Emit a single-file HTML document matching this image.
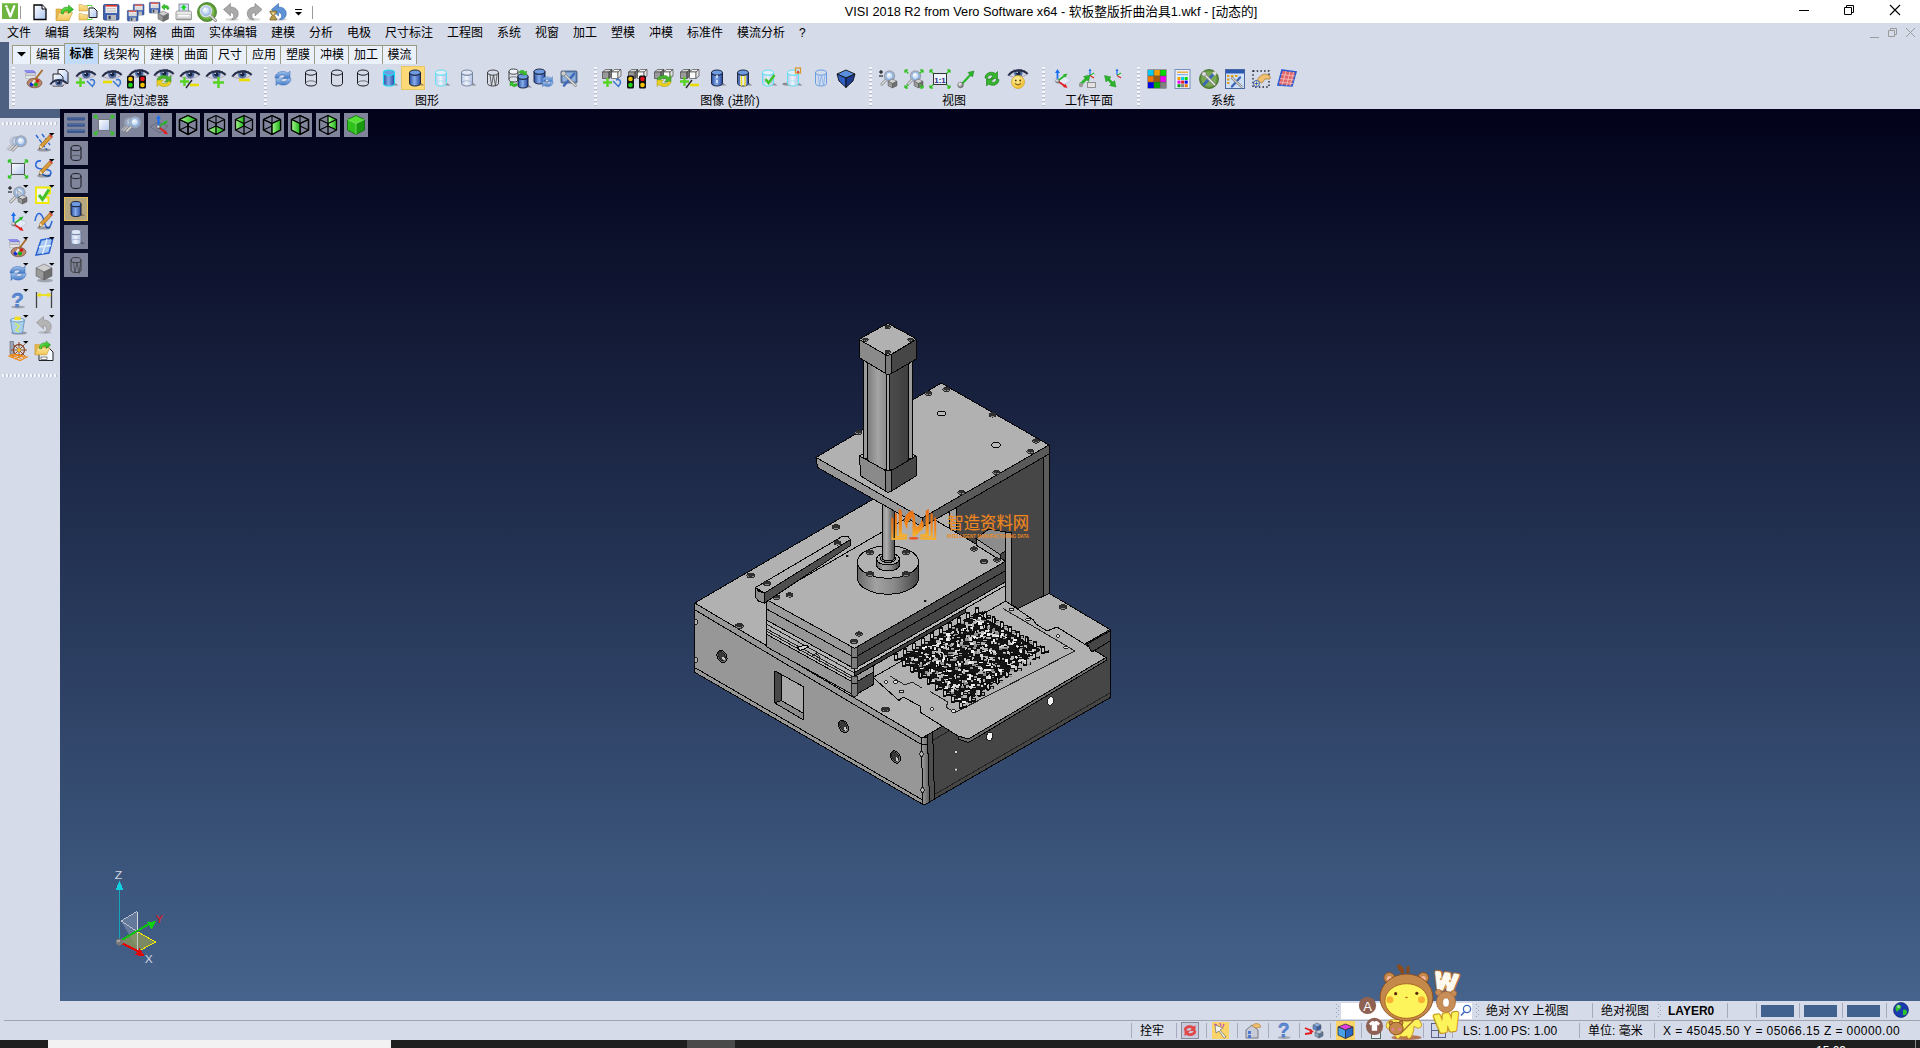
<!DOCTYPE html>
<html lang="zh-CN">
<head>
<meta charset="utf-8">
<title>VISI 2018 R2 from Vero Software x64</title>
<style>
*{box-sizing:border-box;margin:0;padding:0}
html,body{width:1920px;height:1048px;overflow:hidden;background:#d6dbe9;font-family:"Liberation Sans","Noto Sans CJK SC",sans-serif;font-size:12px;color:#000}
.abs{position:absolute}
#titlebar{position:absolute;left:0;top:0;width:1920px;height:23px;background:#fff}
#title{position:absolute;left:844px;top:3px;width:414px;height:17px;line-height:17px;font-size:12.75px;white-space:nowrap;color:#000;text-align:center}
#menubar{position:absolute;left:0;top:23px;width:1920px;height:20px;background:#d6dbe9}
#menubar span{position:absolute;top:1px;height:18px;line-height:18px;font-size:12px;white-space:nowrap}
#darkL1{position:absolute;left:0;top:42px;width:9px;height:76px;background:#4d6082}
#darkL2{position:absolute;left:0;top:109px;width:60px;height:9px;background:#4d6082}
#tabs{position:absolute;left:12px;top:44px;height:20px}
.tab{position:absolute;top:1px;height:19px;line-height:19px;font-size:12px;text-align:center;background:#eaf1fb;border:1px solid #9d9a84;border-bottom:none;border-right:none;white-space:nowrap}
.tab.sel{top:-1px;height:21px;line-height:20px;background:#c1dbf8;border-right:1px solid #9d9a84;font-weight:bold;z-index:2}
#toolbar{position:absolute;left:9px;top:64px;width:1911px;height:45px;background:#d6dbe9}
.glabel{position:absolute;top:94px;height:15px;line-height:15px;font-size:12px;text-align:center;white-space:nowrap;transform:translateX(-50%)}
.grip{position:absolute;top:67px;width:3px;height:39px;background:repeating-linear-gradient(to bottom,#f4f6fb 0 2px,#b9bfd0 2px 3px,transparent 3px 4px)}
#viewport{position:absolute;left:60px;top:109px;width:1860px;height:892px;background:linear-gradient(to bottom,#02021a 0%,#45638c 100%)}
#leftbar{position:absolute;left:0;top:118px;width:60px;height:883px;background:#d6dbe9}
.hgrip{position:absolute;left:2px;width:56px;height:3px;background:repeating-linear-gradient(to right,#f4f6fb 0 2px,#b9bfd0 2px 3px,transparent 3px 4px)}
#status{position:absolute;left:0;top:1001px;width:1920px;height:39px;background:#d6dbe9}
#status span{position:absolute;white-space:nowrap;font-size:12px;height:16px;line-height:16px}
#taskbar{position:absolute;left:0;top:1040px;width:1920px;height:8px;background:#1f1f1f}
.vbtn{position:absolute;width:24px;height:24px;background:#80859c}
.vbtn.sel{background:#b8a880;border:1px solid #e8c25a}
svg{position:absolute;overflow:visible}
</style>
</head>
<body>
<div id="titlebar">
<div id="title">VISI 2018 R2 from Vero Software x64 - 软板整版折曲治具1.wkf - [动态的]</div>
</div>
<div id="menubar">
<span style="left:7px">文件</span><span style="left:45px">编辑</span><span style="left:83px">线架构</span><span style="left:133px">网格</span><span style="left:171px">曲面</span><span style="left:209px">实体编辑</span><span style="left:271px">建模</span><span style="left:309px">分析</span><span style="left:347px">电极</span><span style="left:385px">尺寸标注</span><span style="left:447px">工程图</span><span style="left:497px">系统</span><span style="left:535px">视窗</span><span style="left:573px">加工</span><span style="left:611px">塑模</span><span style="left:649px">冲模</span><span style="left:687px">标准件</span><span style="left:737px">模流分析</span><span style="left:799px">?</span>
</div>
<div id="toolbar"></div>
<div id="darkL1"></div><div id="darkL2"></div>
<div id="tabs">
<div class="tab" style="left:0;width:19px"></div>
<div class="tab" style="left:18px;width:35px">编辑</div>
<div class="tab sel" style="left:52px;width:35px">标准</div>
<div class="tab" style="left:86px;width:47px;border-left:none">线架构</div>
<div class="tab" style="left:132px;width:35px">建模</div>
<div class="tab" style="left:166px;width:35px">曲面</div>
<div class="tab" style="left:200px;width:35px">尺寸</div>
<div class="tab" style="left:234px;width:35px">应用</div>
<div class="tab" style="left:268px;width:35px">塑膜</div>
<div class="tab" style="left:302px;width:35px">冲模</div>
<div class="tab" style="left:336px;width:35px">加工</div>
<div class="tab" style="left:370px;width:35px;border-right:1px solid #9d9a84">模流</div>
</div>
<div class="glabel" style="left:137px">属性/过滤器</div>
<div class="glabel" style="left:427px">图形</div>
<div class="glabel" style="left:730px">图像 (进阶)</div>
<div class="glabel" style="left:954px">视图</div>
<div class="glabel" style="left:1089px">工作平面</div>
<div class="glabel" style="left:1223px">系统</div>
<div class="grip" style="left:12px"></div>
<div class="grip" style="left:264px"></div>
<div class="grip" style="left:594px"></div>
<div class="grip" style="left:869px"></div>
<div class="grip" style="left:1042px"></div>
<div class="grip" style="left:1137px"></div>
<div id="viewport"></div>
<div id="leftbar"><div class="hgrip" style="top:4px"></div><div class="hgrip" style="top:256px"></div></div>
<div id="status">
<div class="abs" style="left:4px;top:19px;width:1916px;height:1px;background:#a0a4b0"></div>
<div class="abs" style="left:1341px;top:2px;width:131px;height:16px;background:#fff"></div>
<span style="left:1486px;top:2px">绝对 XY 上视图</span>
<span style="left:1601px;top:2px">绝对视图</span>
<span style="left:1668px;top:2px;font-weight:bold">LAYER0</span>
<div class="abs" style="left:1761px;top:4px;width:33px;height:12px;background:#41618e"></div>
<div class="abs" style="left:1804px;top:4px;width:33px;height:12px;background:#41618e"></div>
<div class="abs" style="left:1847px;top:4px;width:33px;height:12px;background:#41618e"></div>
<span style="left:1140px;top:22px">拴牢</span>
<span style="left:1463px;top:22px">LS: 1.00 PS: 1.00</span>
<span style="left:1588px;top:22px">单位: 毫米</span>
<span style="left:1663px;top:22px;letter-spacing:.43px">X = 45045.50 Y = 05066.15 Z = 00000.00</span>
</div>
<div id="taskbar">
<div class="abs" style="left:48px;top:0;width:343px;height:8px;background:#f2f2f2"></div>
<div class="abs" style="left:687px;top:0;width:48px;height:8px;background:#4a4a4a"></div>
<div class="abs" style="left:1915px;top:0;width:1px;height:8px;background:#8a8a8a"></div>
</div>
<svg width="1920" height="1048" style="left:0;top:0" viewBox="0 0 1920 1048" shape-rendering="crispEdges">
<defs>
<linearGradient id="mcyl" x1="0" y1="0" x2="1" y2="0"><stop offset="0" stop-color="#7d7d7d"/><stop offset=".25" stop-color="#a4a4a4"/><stop offset=".5" stop-color="#8a8a8a"/><stop offset=".55" stop-color="#4c4c4c"/><stop offset="1" stop-color="#3e3e3e"/></linearGradient>
<linearGradient id="mrod" x1="0" y1="0" x2="1" y2="0"><stop offset="0" stop-color="#8a8a8a"/><stop offset=".35" stop-color="#b0b0b0"/><stop offset="1" stop-color="#4a4a4a"/></linearGradient>
<linearGradient id="mdisc" x1="0" y1="0" x2="1" y2="0"><stop offset="0" stop-color="#6a6a6a"/><stop offset=".3" stop-color="#a2a2a2"/><stop offset=".6" stop-color="#8a8a8a"/><stop offset="1" stop-color="#444"/></linearGradient>
<linearGradient id="mchf" x1="0" y1="0" x2="1" y2="0"><stop offset="0" stop-color="#a2a2a2"/><stop offset="1" stop-color="#5e5e5e"/></linearGradient>
</defs>
<polygon points="694.7,603.0 882.0,494.0 1110.0,629.5 922.0,738.0" fill="#b1b1b1" stroke="#050505" stroke-width="1" stroke-linejoin="round"/>
<polygon points="694.7,603.0 922.0,738.0 924.0,805.0 694.7,672.3" fill="#979797" stroke="#050505" stroke-width="1" stroke-linejoin="round"/>
<polyline points="695.0,610.0 921.5,744.5" fill="none" stroke="#050505" stroke-width="1"/>
<polyline points="695.5,668.0 923.5,800.5" fill="none" stroke="#050505" stroke-width="1"/>
<polygon points="922.0,738.0 1110.0,629.5 1110.0,697.7 924.0,805.0" fill="#464646" stroke="#050505" stroke-width="1" stroke-linejoin="round"/>
<polyline points="927.5,743.5 1110.0,637.0" fill="none" stroke="#222" stroke-width="1"/>
<polyline points="934.5,794.5 1110.0,693.0" fill="none" stroke="#222" stroke-width="1"/>
<polygon points="927.5,735.0 932.7,732.0 934.5,799.0 929.5,802.0" fill="#4e4e4e" stroke="#050505" stroke-width="1" stroke-linejoin="round"/>
<polygon points="921.2,737.5 927.5,737.5 929.5,802.0 924.0,805.0 923.0,804.0" fill="url(#mchf)" stroke="#050505" stroke-width="1" stroke-linejoin="round"/>
<polyline points="921.2,744.5 927.5,744.5" fill="none" stroke="#050505" stroke-width="1"/>
<polygon points="774.9,671.0 803.0,686.4 803.0,719.6 774.9,703.0" fill="#a9a9a9" stroke="#050505" stroke-width="1" stroke-linejoin="round"/>
<polygon points="774.9,671.0 781.0,674.5 781.0,700.5 774.9,703.0" fill="#484848" stroke="#050505" stroke-width="1" stroke-linejoin="round"/>
<polygon points="781.0,700.5 803.0,713.0 803.0,719.6 774.9,703.0" fill="#8c8c8c" stroke="#050505" stroke-width="1" stroke-linejoin="round"/>
<ellipse cx="722.0" cy="656.5" rx="4.6" ry="6.6" fill="#6a6a6a" stroke="#050505" stroke-width="1" transform="rotate(-28 722 656.5)"/>
<ellipse cx="721.7" cy="656.0" rx="3" ry="5" fill="#3a3a3a" stroke="#222" stroke-width="1" transform="rotate(-28 721.7 656.0)"/>
<ellipse cx="723.6" cy="658.7" rx="1.3" ry="2" fill="#c8c8c8" stroke="none" stroke-width="0" transform="rotate(-28 723.6 658.7)"/>
<ellipse cx="843.5" cy="726.5" rx="4.6" ry="6.6" fill="#6a6a6a" stroke="#050505" stroke-width="1" transform="rotate(-28 843.5 726.5)"/>
<ellipse cx="843.2" cy="726.0" rx="3" ry="5" fill="#3a3a3a" stroke="#222" stroke-width="1" transform="rotate(-28 843.2 726.0)"/>
<ellipse cx="845.1" cy="728.7" rx="1.3" ry="2" fill="#c8c8c8" stroke="none" stroke-width="0" transform="rotate(-28 845.1 728.7)"/>
<ellipse cx="895.5" cy="757.0" rx="4.6" ry="6.6" fill="#6a6a6a" stroke="#050505" stroke-width="1" transform="rotate(-28 895.5 757)"/>
<ellipse cx="895.2" cy="756.5" rx="3" ry="5" fill="#3a3a3a" stroke="#222" stroke-width="1" transform="rotate(-28 895.2 756.5)"/>
<ellipse cx="897.1" cy="759.2" rx="1.3" ry="2" fill="#c8c8c8" stroke="none" stroke-width="0" transform="rotate(-28 897.1 759.2)"/>
<ellipse cx="989.6" cy="736.4" rx="3.2" ry="4.2" fill="#f2f2f2" stroke="#222" stroke-width="1" transform="rotate(20 989.6 736.4)"/>
<ellipse cx="1050.5" cy="701.0" rx="3.2" ry="4.2" fill="#f2f2f2" stroke="#222" stroke-width="1" transform="rotate(20 1050.5 701)"/>
<ellipse cx="956.0" cy="752.0" rx="1.2" ry="1.5" fill="#ddd" stroke="#222" stroke-width="0.4"/>
<ellipse cx="956.0" cy="769.5" rx="1.2" ry="1.5" fill="#ddd" stroke="#222" stroke-width="0.4"/>
<ellipse cx="696.0" cy="622.0" rx="1.6" ry="2.6" fill="#b4b4b4" stroke="#222" stroke-width="1"/>
<ellipse cx="696.0" cy="660.0" rx="1.6" ry="2.6" fill="#b4b4b4" stroke="#222" stroke-width="1"/>
<ellipse cx="921.5" cy="754.0" rx="1.6" ry="2.6" fill="#b4b4b4" stroke="#222" stroke-width="1"/>
<ellipse cx="922.5" cy="790.0" rx="1.6" ry="2.6" fill="#b4b4b4" stroke="#222" stroke-width="1"/>
<ellipse cx="739.3" cy="626.0" rx="3.9000000000000004" ry="2.3400000000000003" fill="#8a8a8a" stroke="#2a2a2a" stroke-width="1"/>
<ellipse cx="739.3" cy="625.5" rx="3.32" ry="1.64" fill="#303030"/>
<ellipse cx="750.8" cy="575.5" rx="3.9000000000000004" ry="2.3400000000000003" fill="#8a8a8a" stroke="#2a2a2a" stroke-width="1"/>
<ellipse cx="750.8" cy="575.0" rx="3.32" ry="1.64" fill="#303030"/>
<ellipse cx="885.5" cy="709.5" rx="3.9000000000000004" ry="2.3400000000000003" fill="#8a8a8a" stroke="#2a2a2a" stroke-width="1"/>
<ellipse cx="885.5" cy="709.0" rx="3.32" ry="1.64" fill="#303030"/>
<ellipse cx="1063.0" cy="607.0" rx="3.9000000000000004" ry="2.3400000000000003" fill="#8a8a8a" stroke="#2a2a2a" stroke-width="1"/>
<ellipse cx="1063.0" cy="606.5" rx="3.32" ry="1.64" fill="#303030"/>
<ellipse cx="836.0" cy="527.0" rx="3.9000000000000004" ry="2.3400000000000003" fill="#8a8a8a" stroke="#2a2a2a" stroke-width="1"/>
<ellipse cx="836.0" cy="526.5" rx="3.32" ry="1.64" fill="#303030"/>
<polygon points="925.0,510.0 957.0,506.0 957.0,535.0 925.0,520.0" fill="#b1b1b1" stroke="none" stroke-width="0" stroke-linejoin="round"/>
<polygon points="956.0,507.0 1043.5,457.0 1043.5,596.0 1018.0,608.5 1011.5,604.5 1011.5,532.0 1005.6,532.0 1005.6,563.0 956.0,534.0" fill="#464646" stroke="#050505" stroke-width="1" stroke-linejoin="round"/>
<polygon points="949.0,511.0 956.0,507.0 956.0,532.0 949.0,528.0" fill="#a0a0a0" stroke="#050505" stroke-width="1" stroke-linejoin="round"/>
<polygon points="1043.5,457.0 1049.0,454.0 1049.0,593.5 1043.5,596.0" fill="#5c5c5c" stroke="#050505" stroke-width="1" stroke-linejoin="round"/>
<polygon points="1005.6,532.0 1011.5,532.0 1011.5,604.5 1005.6,602.0" fill="#9c9c9c" stroke="#050505" stroke-width="1" stroke-linejoin="round"/>
<polygon points="873.0,677.5 1005.6,601.0 1033.5,620.0 1036.0,624.0 1047.0,631.0 1057.0,627.0 1106.0,657.5 968.5,739.0 958.0,736.0 920.0,712.0 921.0,706.5 903.0,697.0 899.0,700.5" fill="#b1b1b1" stroke="#050505" stroke-width="1" stroke-linejoin="round"/>
<polygon points="968.5,739.0 1106.0,657.5 1106.0,660.5 968.5,742.5 958.0,739.0 958.0,736.0" fill="#6e6e6e" stroke="#050505" stroke-width="1" stroke-linejoin="round"/>
<polyline points="955.0,712.5 1075.0,651.0 1003.0,608.5" fill="none" stroke="#222" stroke-width="1"/>
<polyline points="955.0,712.5 946.0,707.0 948.0,702.0 930.0,691.5" fill="none" stroke="#222" stroke-width="1"/>
<polyline points="890.0,676.0 905.0,685.0 912.0,682.0 922.0,688.0" fill="none" stroke="#222" stroke-width="1"/>
<ellipse cx="886.0" cy="682.0" rx="2.1" ry="1.3" fill="#e4e4e4" stroke="#222" stroke-width="1"/>
<ellipse cx="901.5" cy="691.5" rx="2.1" ry="1.3" fill="#e4e4e4" stroke="#222" stroke-width="1"/>
<ellipse cx="932.0" cy="709.0" rx="2.1" ry="1.3" fill="#e4e4e4" stroke="#222" stroke-width="1"/>
<ellipse cx="953.5" cy="711.0" rx="2.1" ry="1.3" fill="#e4e4e4" stroke="#222" stroke-width="1"/>
<ellipse cx="1011.5" cy="609.5" rx="2.1" ry="1.3" fill="#e4e4e4" stroke="#222" stroke-width="1"/>
<ellipse cx="1028.0" cy="619.5" rx="2.1" ry="1.3" fill="#e4e4e4" stroke="#222" stroke-width="1"/>
<ellipse cx="1058.0" cy="636.0" rx="2.1" ry="1.3" fill="#e4e4e4" stroke="#222" stroke-width="1"/>
<ellipse cx="1066.0" cy="647.5" rx="2.1" ry="1.3" fill="#e4e4e4" stroke="#222" stroke-width="1"/>
<ellipse cx="895.5" cy="682.0" rx="2.1" ry="1.3" fill="#e4e4e4" stroke="#222" stroke-width="1"/>
<polygon points="1087.0,644.0 1110.0,631.0 1110.0,641.0 1092.0,652.0" fill="#464646" stroke="#050505" stroke-width="1" stroke-linejoin="round"/>
<polygon points="766.0,634.0 854.5,683.0 854.5,695.5 766.0,646.5" fill="#979797" stroke="#050505" stroke-width="1" stroke-linejoin="round"/>
<polygon points="854.5,683.0 873.0,672.3 873.0,684.8 854.5,695.5" fill="#464646" stroke="#050505" stroke-width="1" stroke-linejoin="round"/>
<polygon points="766.0,619.8 854.5,668.8 854.5,683.0 766.0,634.0" fill="#b4b4b4" stroke="#050505" stroke-width="1" stroke-linejoin="round"/>
<polyline points="766.0,624.0 854.5,673.0" fill="none" stroke="#222" stroke-width="1"/>
<polyline points="766.0,628.5 854.5,677.5" fill="none" stroke="#222" stroke-width="1"/>
<polyline points="766.0,631.0 854.5,680.0" fill="none" stroke="#222" stroke-width="1"/>
<polygon points="854.5,668.8 1005.6,581.8 1005.6,585.5 854.5,672.5" fill="#b8b8b8" stroke="#050505" stroke-width="1" stroke-linejoin="round"/>
<polygon points="854.5,672.5 965.0,608.9 965.0,612.9 854.5,676.5" fill="#3c3c3c" stroke="#050505" stroke-width="1" stroke-linejoin="round"/>
<polygon points="854.5,676.5 873.0,665.8 873.0,672.3 854.5,683.0" fill="#9a9a9a" stroke="#050505" stroke-width="1" stroke-linejoin="round"/>
<polygon points="797.0,647.5 806.0,645.0 809.0,647.0 800.0,650.5" fill="#cfcfcf" stroke="#050505" stroke-width="1" stroke-linejoin="round"/>
<polyline points="812.0,656.0 816.0,653.5 820.0,657.0 819.0,662.0" fill="none" stroke="#222" stroke-width="1"/>
<polygon points="766.0,608.6 854.5,657.6 854.5,668.8 766.0,619.8" fill="#979797" stroke="#050505" stroke-width="1" stroke-linejoin="round"/>
<polygon points="854.5,657.6 1005.6,570.6 1005.6,581.8 854.5,668.8" fill="#464646" stroke="#050505" stroke-width="1" stroke-linejoin="round"/>
<polygon points="766.0,599.3 854.5,648.3 854.5,657.6 766.0,608.6" fill="#9b9b9b" stroke="#050505" stroke-width="1" stroke-linejoin="round"/>
<polygon points="854.5,648.3 1005.6,561.3 1005.6,570.6 854.5,657.6" fill="#4a4a4a" stroke="#050505" stroke-width="1" stroke-linejoin="round"/>
<polygon points="851.7,647.3 857.3,647.3 857.3,668.8 851.7,668.8" fill="#7c7c7c" stroke="#222" stroke-width="1" stroke-linejoin="round"/>
<polygon points="851.7,676.8 857.3,676.8 857.3,695.5 854.5,697.0 851.7,695.5" fill="#7c7c7c" stroke="#222" stroke-width="1" stroke-linejoin="round"/>
<polyline points="851.7,657.6 857.3,657.6" fill="none" stroke="#050505" stroke-width="1"/>
<polyline points="851.7,683.0 857.3,683.0" fill="none" stroke="#050505" stroke-width="1"/>
<polygon points="766.0,599.3 915.0,513.0 935.0,520.0 1005.6,561.3 854.5,648.3" fill="#b1b1b1" stroke="#050505" stroke-width="1" stroke-linejoin="round"/>
<polygon points="976.0,538.5 1000.0,554.5 1005.5,551.0 1005.5,532.0 989.0,529.0" fill="#8c8c8c" stroke="#050505" stroke-width="1" stroke-linejoin="round"/>
<polygon points="976.0,538.5 1000.0,554.5 1000.0,560.0 976.0,545.0" fill="#a2a2a2" stroke="#050505" stroke-width="1" stroke-linejoin="round"/>
<ellipse cx="789.6" cy="595.0" rx="3.5100000000000002" ry="2.106" fill="#8a8a8a" stroke="#2a2a2a" stroke-width="1"/>
<ellipse cx="789.6" cy="594.6" rx="2.98" ry="1.47" fill="#303030"/>
<ellipse cx="776.5" cy="597.3" rx="3.5100000000000002" ry="2.106" fill="#8a8a8a" stroke="#2a2a2a" stroke-width="1"/>
<ellipse cx="776.5" cy="596.9" rx="2.98" ry="1.47" fill="#303030"/>
<ellipse cx="859.0" cy="634.0" rx="3.5100000000000002" ry="2.106" fill="#8a8a8a" stroke="#2a2a2a" stroke-width="1"/>
<ellipse cx="859.0" cy="633.6" rx="2.98" ry="1.47" fill="#303030"/>
<ellipse cx="854.0" cy="641.5" rx="3.5100000000000002" ry="2.106" fill="#8a8a8a" stroke="#2a2a2a" stroke-width="1"/>
<ellipse cx="854.0" cy="641.1" rx="2.98" ry="1.47" fill="#303030"/>
<ellipse cx="974.0" cy="549.0" rx="3.5100000000000002" ry="2.106" fill="#8a8a8a" stroke="#2a2a2a" stroke-width="1"/>
<ellipse cx="974.0" cy="548.6" rx="2.98" ry="1.47" fill="#303030"/>
<ellipse cx="984.0" cy="561.5" rx="3.5100000000000002" ry="2.106" fill="#8a8a8a" stroke="#2a2a2a" stroke-width="1"/>
<ellipse cx="984.0" cy="561.1" rx="2.98" ry="1.47" fill="#303030"/>
<ellipse cx="997.0" cy="560.0" rx="3.5100000000000002" ry="2.106" fill="#8a8a8a" stroke="#2a2a2a" stroke-width="1"/>
<ellipse cx="997.0" cy="559.6" rx="2.98" ry="1.47" fill="#303030"/>
<ellipse cx="847.5" cy="556.0" rx="1.2" ry="1" fill="#111" stroke="#111" stroke-width="0.3"/>
<ellipse cx="925.5" cy="601.0" rx="1.2" ry="1" fill="#111" stroke="#111" stroke-width="0.3"/>
<polygon points="899.6,658.5 975.4,612.9 1041.0,649.8 963.5,704.4" fill="#141414"/><rect x="894.0" y="652.5" width="4" height="8.5" rx="1.500" fill="#0c0c0c"/><rect x="895.1" y="654.5" width="1.800" height="4.5" rx=".8" fill="#c8c8c8"/><rect x="897.6" y="656.5" width="4.200" height="3.200" fill="#0c0c0c"/><rect x="898.3" y="657.2" width="2.800" height="1.100" fill="#b0b0b0"/><rect x="898.3" y="658.6" width="2.800" height=".8" fill="#8a8a8a"/><rect x="902.1" y="658.5" width="4" height="8.5" rx="1.500" fill="#0c0c0c"/><rect x="903.2" y="660.5" width="1.800" height="4.5" rx=".8" fill="#c8c8c8"/><rect x="905.7" y="662.5" width="4.200" height="3.200" fill="#0c0c0c"/><rect x="906.4" y="663.2" width="2.800" height="1.100" fill="#b0b0b0"/><rect x="906.4" y="664.6" width="2.800" height=".8" fill="#8a8a8a"/><rect x="910.2" y="664.5" width="4" height="8.5" rx="1.500" fill="#0c0c0c"/><rect x="911.4" y="666.5" width="1.800" height="4.5" rx=".8" fill="#c8c8c8"/><rect x="913.9" y="668.5" width="4.200" height="3.200" fill="#0c0c0c"/><rect x="914.5" y="669.2" width="2.800" height="1.100" fill="#b0b0b0"/><rect x="914.5" y="670.6" width="2.800" height=".8" fill="#8a8a8a"/><rect x="918.4" y="670.5" width="4" height="8.5" rx="1.500" fill="#0c0c0c"/><rect x="919.5" y="672.5" width="1.800" height="4.5" rx=".8" fill="#c8c8c8"/><rect x="922.0" y="674.5" width="4.200" height="3.200" fill="#0c0c0c"/><rect x="922.7" y="675.2" width="2.800" height="1.100" fill="#b0b0b0"/><rect x="922.7" y="676.6" width="2.800" height=".8" fill="#8a8a8a"/><rect x="926.5" y="676.5" width="4" height="8.5" rx="1.500" fill="#0c0c0c"/><rect x="927.6" y="678.5" width="1.800" height="4.5" rx=".8" fill="#c8c8c8"/><rect x="930.1" y="680.5" width="4.200" height="3.200" fill="#0c0c0c"/><rect x="930.8" y="681.2" width="2.800" height="1.100" fill="#b0b0b0"/><rect x="930.8" y="682.6" width="2.800" height=".8" fill="#8a8a8a"/><rect x="934.6" y="682.5" width="4" height="8.5" rx="1.500" fill="#0c0c0c"/><rect x="935.7" y="684.5" width="1.800" height="4.5" rx=".8" fill="#c8c8c8"/><rect x="938.2" y="686.5" width="4.200" height="3.200" fill="#0c0c0c"/><rect x="938.9" y="687.2" width="2.800" height="1.100" fill="#b0b0b0"/><rect x="938.9" y="688.6" width="2.800" height=".8" fill="#8a8a8a"/><rect x="942.8" y="688.5" width="4" height="8.5" rx="1.500" fill="#0c0c0c"/><rect x="943.9" y="690.5" width="1.800" height="4.5" rx=".8" fill="#c8c8c8"/><rect x="946.4" y="692.5" width="4.200" height="3.200" fill="#0c0c0c"/><rect x="947.0" y="693.2" width="2.800" height="1.100" fill="#b0b0b0"/><rect x="947.0" y="694.6" width="2.800" height=".8" fill="#8a8a8a"/><rect x="950.9" y="694.5" width="4" height="8.5" rx="1.500" fill="#0c0c0c"/><rect x="952.0" y="696.5" width="1.800" height="4.5" rx=".8" fill="#c8c8c8"/><rect x="954.5" y="698.5" width="4.200" height="3.200" fill="#0c0c0c"/><rect x="955.2" y="699.2" width="2.800" height="1.100" fill="#b0b0b0"/><rect x="955.2" y="700.6" width="2.800" height=".8" fill="#8a8a8a"/><rect x="959.0" y="700.5" width="4" height="8.5" rx="1.500" fill="#0c0c0c"/><rect x="960.1" y="702.5" width="1.800" height="4.5" rx=".8" fill="#c8c8c8"/><rect x="962.6" y="704.5" width="4.200" height="3.200" fill="#0c0c0c"/><rect x="963.3" y="705.2" width="2.800" height="1.100" fill="#b0b0b0"/><rect x="963.3" y="706.6" width="2.800" height=".8" fill="#8a8a8a"/><rect x="903.0" y="647.4" width="4" height="8.5" rx="1.500" fill="#0c0c0c"/><rect x="904.1" y="649.4" width="1.800" height="4.5" rx=".8" fill="#c8c8c8"/><rect x="906.6" y="651.4" width="4.200" height="3.200" fill="#0c0c0c"/><rect x="907.3" y="652.1" width="2.800" height="1.100" fill="#b0b0b0"/><rect x="907.3" y="653.5" width="2.800" height=".8" fill="#8a8a8a"/><rect x="911.1" y="654.8" width="4" height="7" rx="1.500" fill="#0c0c0c"/><rect x="912.2" y="656.8" width="1.800" height="3.0" rx=".8" fill="#c8c8c8"/><rect x="914.7" y="657.3" width="4.200" height="3.200" fill="#0c0c0c"/><rect x="915.4" y="658.0" width="2.800" height="1.100" fill="#b0b0b0"/><rect x="915.4" y="659.4" width="2.800" height=".8" fill="#8a8a8a"/><rect x="919.3" y="660.6" width="4" height="7" rx="1.500" fill="#0c0c0c"/><rect x="920.4" y="662.6" width="1.800" height="3.0" rx=".8" fill="#c8c8c8"/><rect x="922.9" y="663.1" width="4.200" height="3.200" fill="#0c0c0c"/><rect x="923.6" y="663.8" width="2.800" height="1.100" fill="#b0b0b0"/><rect x="923.6" y="665.2" width="2.800" height=".8" fill="#8a8a8a"/><rect x="927.4" y="666.5" width="4" height="7" rx="1.500" fill="#0c0c0c"/><rect x="928.5" y="668.5" width="1.800" height="3.0" rx=".8" fill="#c8c8c8"/><rect x="931.0" y="669.0" width="4.200" height="3.200" fill="#0c0c0c"/><rect x="931.7" y="669.7" width="2.800" height="1.100" fill="#b0b0b0"/><rect x="931.7" y="671.1" width="2.800" height=".8" fill="#8a8a8a"/><rect x="935.6" y="672.4" width="4" height="7" rx="1.500" fill="#0c0c0c"/><rect x="936.7" y="674.4" width="1.800" height="3.0" rx=".8" fill="#c8c8c8"/><rect x="939.2" y="674.9" width="4.200" height="3.200" fill="#0c0c0c"/><rect x="939.9" y="675.6" width="2.800" height="1.100" fill="#b0b0b0"/><rect x="939.9" y="677.0" width="2.800" height=".8" fill="#8a8a8a"/><rect x="943.7" y="678.3" width="4" height="7" rx="1.500" fill="#0c0c0c"/><rect x="944.8" y="680.3" width="1.800" height="3.0" rx=".8" fill="#c8c8c8"/><rect x="947.3" y="680.8" width="4.200" height="3.200" fill="#0c0c0c"/><rect x="948.0" y="681.5" width="2.800" height="1.100" fill="#b0b0b0"/><rect x="948.0" y="682.9" width="2.800" height=".8" fill="#8a8a8a"/><rect x="951.8" y="684.1" width="4" height="7" rx="1.500" fill="#0c0c0c"/><rect x="952.9" y="686.1" width="1.800" height="3.0" rx=".8" fill="#c8c8c8"/><rect x="955.4" y="686.6" width="4.200" height="3.200" fill="#0c0c0c"/><rect x="956.1" y="687.3" width="2.800" height="1.100" fill="#b0b0b0"/><rect x="956.1" y="688.7" width="2.800" height=".8" fill="#8a8a8a"/><rect x="960.0" y="690.0" width="4" height="7" rx="1.500" fill="#0c0c0c"/><rect x="961.1" y="692.0" width="1.800" height="3.0" rx=".8" fill="#c8c8c8"/><rect x="963.6" y="692.5" width="4.200" height="3.200" fill="#0c0c0c"/><rect x="964.3" y="693.2" width="2.800" height="1.100" fill="#b0b0b0"/><rect x="964.3" y="694.6" width="2.800" height=".8" fill="#8a8a8a"/><rect x="968.1" y="694.4" width="4" height="8.5" rx="1.500" fill="#0c0c0c"/><rect x="969.2" y="696.4" width="1.800" height="4.5" rx=".8" fill="#c8c8c8"/><rect x="971.7" y="698.4" width="4.200" height="3.200" fill="#0c0c0c"/><rect x="972.4" y="699.1" width="2.800" height="1.100" fill="#b0b0b0"/><rect x="972.4" y="700.5" width="2.800" height=".8" fill="#8a8a8a"/><rect x="912.0" y="642.3" width="4" height="8.5" rx="1.500" fill="#0c0c0c"/><rect x="913.1" y="644.3" width="1.800" height="4.5" rx=".8" fill="#c8c8c8"/><rect x="915.6" y="646.3" width="4.200" height="3.200" fill="#0c0c0c"/><rect x="916.3" y="647.0" width="2.800" height="1.100" fill="#b0b0b0"/><rect x="916.3" y="648.4" width="2.800" height=".8" fill="#8a8a8a"/><rect x="920.2" y="649.5" width="4" height="7" rx="1.500" fill="#0c0c0c"/><rect x="921.3" y="651.5" width="1.800" height="3.0" rx=".8" fill="#c8c8c8"/><rect x="923.8" y="652.0" width="4.200" height="3.200" fill="#0c0c0c"/><rect x="924.5" y="652.7" width="2.800" height="1.100" fill="#b0b0b0"/><rect x="924.5" y="654.1" width="2.800" height=".8" fill="#8a8a8a"/><rect x="928.3" y="655.3" width="4" height="7" rx="1.500" fill="#0c0c0c"/><rect x="929.4" y="657.3" width="1.800" height="3.0" rx=".8" fill="#c8c8c8"/><rect x="931.9" y="657.8" width="4.200" height="3.200" fill="#0c0c0c"/><rect x="932.6" y="658.5" width="2.800" height="1.100" fill="#b0b0b0"/><rect x="932.6" y="659.9" width="2.800" height=".8" fill="#8a8a8a"/><rect x="936.5" y="661.0" width="4" height="7" rx="1.500" fill="#0c0c0c"/><rect x="937.6" y="663.0" width="1.800" height="3.0" rx=".8" fill="#c8c8c8"/><rect x="940.1" y="663.5" width="4.200" height="3.200" fill="#0c0c0c"/><rect x="940.8" y="664.2" width="2.800" height="1.100" fill="#b0b0b0"/><rect x="940.8" y="665.6" width="2.800" height=".8" fill="#8a8a8a"/><rect x="944.6" y="666.8" width="4" height="7" rx="1.500" fill="#0c0c0c"/><rect x="945.7" y="668.8" width="1.800" height="3.0" rx=".8" fill="#c8c8c8"/><rect x="948.2" y="669.3" width="4.200" height="3.200" fill="#0c0c0c"/><rect x="948.9" y="670.0" width="2.800" height="1.100" fill="#b0b0b0"/><rect x="948.9" y="671.4" width="2.800" height=".8" fill="#8a8a8a"/><rect x="952.8" y="672.5" width="4" height="7" rx="1.500" fill="#0c0c0c"/><rect x="953.9" y="674.5" width="1.800" height="3.0" rx=".8" fill="#c8c8c8"/><rect x="956.4" y="675.0" width="4.200" height="3.200" fill="#0c0c0c"/><rect x="957.1" y="675.7" width="2.800" height="1.100" fill="#b0b0b0"/><rect x="957.1" y="677.1" width="2.800" height=".8" fill="#8a8a8a"/><rect x="960.9" y="678.3" width="4" height="7" rx="1.500" fill="#0c0c0c"/><rect x="962.0" y="680.3" width="1.800" height="3.0" rx=".8" fill="#c8c8c8"/><rect x="964.5" y="680.8" width="4.200" height="3.200" fill="#0c0c0c"/><rect x="965.2" y="681.5" width="2.800" height="1.100" fill="#b0b0b0"/><rect x="965.2" y="682.9" width="2.800" height=".8" fill="#8a8a8a"/><rect x="969.1" y="684.0" width="4" height="7" rx="1.500" fill="#0c0c0c"/><rect x="970.2" y="686.0" width="1.800" height="3.0" rx=".8" fill="#c8c8c8"/><rect x="972.7" y="686.5" width="4.200" height="3.200" fill="#0c0c0c"/><rect x="973.4" y="687.2" width="2.800" height="1.100" fill="#b0b0b0"/><rect x="973.4" y="688.6" width="2.800" height=".8" fill="#8a8a8a"/><rect x="977.2" y="688.3" width="4" height="8.5" rx="1.500" fill="#0c0c0c"/><rect x="978.3" y="690.3" width="1.800" height="4.5" rx=".8" fill="#c8c8c8"/><rect x="980.8" y="692.3" width="4.200" height="3.200" fill="#0c0c0c"/><rect x="981.5" y="693.0" width="2.800" height="1.100" fill="#b0b0b0"/><rect x="981.5" y="694.4" width="2.800" height=".8" fill="#8a8a8a"/><rect x="921.0" y="637.2" width="4" height="8.5" rx="1.500" fill="#0c0c0c"/><rect x="922.1" y="639.2" width="1.800" height="4.5" rx=".8" fill="#c8c8c8"/><rect x="924.6" y="641.2" width="4.200" height="3.200" fill="#0c0c0c"/><rect x="925.3" y="641.9" width="2.800" height="1.100" fill="#b0b0b0"/><rect x="925.3" y="643.3" width="2.800" height=".8" fill="#8a8a8a"/><rect x="929.2" y="644.3" width="4" height="7" rx="1.500" fill="#0c0c0c"/><rect x="930.3" y="646.3" width="1.800" height="3.0" rx=".8" fill="#c8c8c8"/><rect x="932.8" y="646.8" width="4.200" height="3.200" fill="#0c0c0c"/><rect x="933.5" y="647.5" width="2.800" height="1.100" fill="#b0b0b0"/><rect x="933.5" y="648.9" width="2.800" height=".8" fill="#8a8a8a"/><rect x="937.3" y="649.9" width="4" height="7" rx="1.500" fill="#0c0c0c"/><rect x="938.4" y="651.9" width="1.800" height="3.0" rx=".8" fill="#c8c8c8"/><rect x="940.9" y="652.4" width="4.200" height="3.200" fill="#0c0c0c"/><rect x="941.6" y="653.1" width="2.800" height="1.100" fill="#b0b0b0"/><rect x="941.6" y="654.5" width="2.800" height=".8" fill="#8a8a8a"/><rect x="945.5" y="655.5" width="4" height="7" rx="1.500" fill="#0c0c0c"/><rect x="946.6" y="657.5" width="1.800" height="3.0" rx=".8" fill="#c8c8c8"/><rect x="949.1" y="658.0" width="4.200" height="3.200" fill="#0c0c0c"/><rect x="949.8" y="658.7" width="2.800" height="1.100" fill="#b0b0b0"/><rect x="949.8" y="660.1" width="2.800" height=".8" fill="#8a8a8a"/><rect x="953.7" y="661.2" width="4" height="7" rx="1.500" fill="#0c0c0c"/><rect x="954.8" y="663.2" width="1.800" height="3.0" rx=".8" fill="#c8c8c8"/><rect x="957.3" y="663.7" width="4.200" height="3.200" fill="#0c0c0c"/><rect x="958.0" y="664.4" width="2.800" height="1.100" fill="#b0b0b0"/><rect x="958.0" y="665.8" width="2.800" height=".8" fill="#8a8a8a"/><rect x="961.8" y="666.8" width="4" height="7" rx="1.500" fill="#0c0c0c"/><rect x="962.9" y="668.8" width="1.800" height="3.0" rx=".8" fill="#c8c8c8"/><rect x="965.4" y="669.3" width="4.200" height="3.200" fill="#0c0c0c"/><rect x="966.1" y="670.0" width="2.800" height="1.100" fill="#b0b0b0"/><rect x="966.1" y="671.4" width="2.800" height=".8" fill="#8a8a8a"/><rect x="970.0" y="672.4" width="4" height="7" rx="1.500" fill="#0c0c0c"/><rect x="971.1" y="674.4" width="1.800" height="3.0" rx=".8" fill="#c8c8c8"/><rect x="973.6" y="674.9" width="4.200" height="3.200" fill="#0c0c0c"/><rect x="974.3" y="675.6" width="2.800" height="1.100" fill="#b0b0b0"/><rect x="974.3" y="677.0" width="2.800" height=".8" fill="#8a8a8a"/><rect x="978.2" y="678.0" width="4" height="7" rx="1.500" fill="#0c0c0c"/><rect x="979.3" y="680.0" width="1.800" height="3.0" rx=".8" fill="#c8c8c8"/><rect x="981.8" y="680.5" width="4.200" height="3.200" fill="#0c0c0c"/><rect x="982.5" y="681.2" width="2.800" height="1.100" fill="#b0b0b0"/><rect x="982.5" y="682.6" width="2.800" height=".8" fill="#8a8a8a"/><rect x="986.3" y="682.2" width="4" height="8.5" rx="1.500" fill="#0c0c0c"/><rect x="987.4" y="684.2" width="1.800" height="4.5" rx=".8" fill="#c8c8c8"/><rect x="989.9" y="686.2" width="4.200" height="3.200" fill="#0c0c0c"/><rect x="990.6" y="686.9" width="2.800" height="1.100" fill="#b0b0b0"/><rect x="990.6" y="688.3" width="2.800" height=".8" fill="#8a8a8a"/><rect x="930.0" y="632.1" width="4" height="8.5" rx="1.500" fill="#0c0c0c"/><rect x="931.1" y="634.1" width="1.800" height="4.5" rx=".8" fill="#c8c8c8"/><rect x="933.6" y="636.1" width="4.200" height="3.200" fill="#0c0c0c"/><rect x="934.3" y="636.8" width="2.800" height="1.100" fill="#b0b0b0"/><rect x="934.3" y="638.2" width="2.800" height=".8" fill="#8a8a8a"/><rect x="938.2" y="639.1" width="4" height="7" rx="1.500" fill="#0c0c0c"/><rect x="939.3" y="641.1" width="1.800" height="3.0" rx=".8" fill="#c8c8c8"/><rect x="941.8" y="641.6" width="4.200" height="3.200" fill="#0c0c0c"/><rect x="942.5" y="642.3" width="2.800" height="1.100" fill="#b0b0b0"/><rect x="942.5" y="643.7" width="2.800" height=".8" fill="#8a8a8a"/><rect x="946.4" y="644.6" width="4" height="7" rx="1.500" fill="#0c0c0c"/><rect x="947.5" y="646.6" width="1.800" height="3.0" rx=".8" fill="#c8c8c8"/><rect x="950.0" y="647.1" width="4.200" height="3.200" fill="#0c0c0c"/><rect x="950.7" y="647.8" width="2.800" height="1.100" fill="#b0b0b0"/><rect x="950.7" y="649.2" width="2.800" height=".8" fill="#8a8a8a"/><rect x="954.5" y="650.1" width="4" height="7" rx="1.500" fill="#0c0c0c"/><rect x="955.6" y="652.1" width="1.800" height="3.0" rx=".8" fill="#c8c8c8"/><rect x="958.1" y="652.6" width="4.200" height="3.200" fill="#0c0c0c"/><rect x="958.8" y="653.3" width="2.800" height="1.100" fill="#b0b0b0"/><rect x="958.8" y="654.7" width="2.800" height=".8" fill="#8a8a8a"/><rect x="962.7" y="655.6" width="4" height="7" rx="1.500" fill="#0c0c0c"/><rect x="963.8" y="657.6" width="1.800" height="3.0" rx=".8" fill="#c8c8c8"/><rect x="966.3" y="658.1" width="4.200" height="3.200" fill="#0c0c0c"/><rect x="967.0" y="658.8" width="2.800" height="1.100" fill="#b0b0b0"/><rect x="967.0" y="660.2" width="2.800" height=".8" fill="#8a8a8a"/><rect x="970.9" y="661.1" width="4" height="7" rx="1.500" fill="#0c0c0c"/><rect x="972.0" y="663.1" width="1.800" height="3.0" rx=".8" fill="#c8c8c8"/><rect x="974.5" y="663.6" width="4.200" height="3.200" fill="#0c0c0c"/><rect x="975.2" y="664.3" width="2.800" height="1.100" fill="#b0b0b0"/><rect x="975.2" y="665.7" width="2.800" height=".8" fill="#8a8a8a"/><rect x="979.1" y="666.6" width="4" height="7" rx="1.500" fill="#0c0c0c"/><rect x="980.2" y="668.6" width="1.800" height="3.0" rx=".8" fill="#c8c8c8"/><rect x="982.7" y="669.1" width="4.200" height="3.200" fill="#0c0c0c"/><rect x="983.4" y="669.8" width="2.800" height="1.100" fill="#b0b0b0"/><rect x="983.4" y="671.2" width="2.800" height=".8" fill="#8a8a8a"/><rect x="987.3" y="672.1" width="4" height="7" rx="1.500" fill="#0c0c0c"/><rect x="988.4" y="674.1" width="1.800" height="3.0" rx=".8" fill="#c8c8c8"/><rect x="990.9" y="674.6" width="4.200" height="3.200" fill="#0c0c0c"/><rect x="991.6" y="675.3" width="2.800" height="1.100" fill="#b0b0b0"/><rect x="991.6" y="676.7" width="2.800" height=".8" fill="#8a8a8a"/><rect x="995.4" y="676.1" width="4" height="8.5" rx="1.500" fill="#0c0c0c"/><rect x="996.5" y="678.1" width="1.800" height="4.5" rx=".8" fill="#c8c8c8"/><rect x="999.0" y="680.1" width="4.200" height="3.200" fill="#0c0c0c"/><rect x="999.7" y="680.8" width="2.800" height="1.100" fill="#b0b0b0"/><rect x="999.7" y="682.2" width="2.800" height=".8" fill="#8a8a8a"/><rect x="939.0" y="626.9" width="4" height="8.5" rx="1.500" fill="#0c0c0c"/><rect x="940.1" y="628.9" width="1.800" height="4.5" rx=".8" fill="#c8c8c8"/><rect x="942.6" y="630.9" width="4.200" height="3.200" fill="#0c0c0c"/><rect x="943.3" y="631.6" width="2.800" height="1.100" fill="#b0b0b0"/><rect x="943.3" y="633.0" width="2.800" height=".8" fill="#8a8a8a"/><rect x="947.2" y="633.8" width="4" height="7" rx="1.500" fill="#0c0c0c"/><rect x="948.3" y="635.8" width="1.800" height="3.0" rx=".8" fill="#c8c8c8"/><rect x="950.8" y="636.3" width="4.200" height="3.200" fill="#0c0c0c"/><rect x="951.5" y="637.0" width="2.800" height="1.100" fill="#b0b0b0"/><rect x="951.5" y="638.4" width="2.800" height=".8" fill="#8a8a8a"/><rect x="955.4" y="639.2" width="4" height="7" rx="1.500" fill="#0c0c0c"/><rect x="956.5" y="641.2" width="1.800" height="3.0" rx=".8" fill="#c8c8c8"/><rect x="959.0" y="641.7" width="4.200" height="3.200" fill="#0c0c0c"/><rect x="959.7" y="642.4" width="2.800" height="1.100" fill="#b0b0b0"/><rect x="959.7" y="643.8" width="2.800" height=".8" fill="#8a8a8a"/><rect x="963.6" y="644.6" width="4" height="7" rx="1.500" fill="#0c0c0c"/><rect x="964.7" y="646.6" width="1.800" height="3.0" rx=".8" fill="#c8c8c8"/><rect x="967.2" y="647.1" width="4.200" height="3.200" fill="#0c0c0c"/><rect x="967.9" y="647.8" width="2.800" height="1.100" fill="#b0b0b0"/><rect x="967.9" y="649.2" width="2.800" height=".8" fill="#8a8a8a"/><rect x="971.8" y="649.9" width="4" height="7" rx="1.500" fill="#0c0c0c"/><rect x="972.9" y="651.9" width="1.800" height="3.0" rx=".8" fill="#c8c8c8"/><rect x="975.4" y="652.4" width="4.200" height="3.200" fill="#0c0c0c"/><rect x="976.1" y="653.1" width="2.800" height="1.100" fill="#b0b0b0"/><rect x="976.1" y="654.5" width="2.800" height=".8" fill="#8a8a8a"/><rect x="980.0" y="655.3" width="4" height="7" rx="1.500" fill="#0c0c0c"/><rect x="981.1" y="657.3" width="1.800" height="3.0" rx=".8" fill="#c8c8c8"/><rect x="983.6" y="657.8" width="4.200" height="3.200" fill="#0c0c0c"/><rect x="984.3" y="658.5" width="2.800" height="1.100" fill="#b0b0b0"/><rect x="984.3" y="659.9" width="2.800" height=".8" fill="#8a8a8a"/><rect x="988.2" y="660.7" width="4" height="7" rx="1.500" fill="#0c0c0c"/><rect x="989.3" y="662.7" width="1.800" height="3.0" rx=".8" fill="#c8c8c8"/><rect x="991.8" y="663.2" width="4.200" height="3.200" fill="#0c0c0c"/><rect x="992.5" y="663.9" width="2.800" height="1.100" fill="#b0b0b0"/><rect x="992.5" y="665.3" width="2.800" height=".8" fill="#8a8a8a"/><rect x="996.4" y="666.1" width="4" height="7" rx="1.500" fill="#0c0c0c"/><rect x="997.5" y="668.1" width="1.800" height="3.0" rx=".8" fill="#c8c8c8"/><rect x="1000.0" y="668.6" width="4.200" height="3.200" fill="#0c0c0c"/><rect x="1000.7" y="669.3" width="2.800" height="1.100" fill="#b0b0b0"/><rect x="1000.7" y="670.7" width="2.800" height=".8" fill="#8a8a8a"/><rect x="1004.6" y="669.9" width="4" height="8.5" rx="1.500" fill="#0c0c0c"/><rect x="1005.7" y="671.9" width="1.800" height="4.5" rx=".8" fill="#c8c8c8"/><rect x="1008.2" y="673.9" width="4.200" height="3.200" fill="#0c0c0c"/><rect x="1008.9" y="674.6" width="2.800" height="1.100" fill="#b0b0b0"/><rect x="1008.9" y="676.0" width="2.800" height=".8" fill="#8a8a8a"/><rect x="948.0" y="621.8" width="4" height="8.5" rx="1.500" fill="#0c0c0c"/><rect x="949.1" y="623.8" width="1.800" height="4.5" rx=".8" fill="#c8c8c8"/><rect x="951.6" y="625.8" width="4.200" height="3.200" fill="#0c0c0c"/><rect x="952.3" y="626.5" width="2.800" height="1.100" fill="#b0b0b0"/><rect x="952.3" y="627.9" width="2.800" height=".8" fill="#8a8a8a"/><rect x="956.2" y="628.6" width="4" height="7" rx="1.500" fill="#0c0c0c"/><rect x="957.3" y="630.6" width="1.800" height="3.0" rx=".8" fill="#c8c8c8"/><rect x="959.8" y="631.1" width="4.200" height="3.200" fill="#0c0c0c"/><rect x="960.5" y="631.8" width="2.800" height="1.100" fill="#b0b0b0"/><rect x="960.5" y="633.2" width="2.800" height=".8" fill="#8a8a8a"/><rect x="964.4" y="633.8" width="4" height="7" rx="1.500" fill="#0c0c0c"/><rect x="965.5" y="635.8" width="1.800" height="3.0" rx=".8" fill="#c8c8c8"/><rect x="968.0" y="636.3" width="4.200" height="3.200" fill="#0c0c0c"/><rect x="968.7" y="637.0" width="2.800" height="1.100" fill="#b0b0b0"/><rect x="968.7" y="638.4" width="2.800" height=".8" fill="#8a8a8a"/><rect x="972.6" y="639.1" width="4" height="7" rx="1.500" fill="#0c0c0c"/><rect x="973.7" y="641.1" width="1.800" height="3.0" rx=".8" fill="#c8c8c8"/><rect x="976.2" y="641.6" width="4.200" height="3.200" fill="#0c0c0c"/><rect x="976.9" y="642.3" width="2.800" height="1.100" fill="#b0b0b0"/><rect x="976.9" y="643.7" width="2.800" height=".8" fill="#8a8a8a"/><rect x="980.8" y="644.3" width="4" height="7" rx="1.500" fill="#0c0c0c"/><rect x="981.9" y="646.3" width="1.800" height="3.0" rx=".8" fill="#c8c8c8"/><rect x="984.4" y="646.8" width="4.200" height="3.200" fill="#0c0c0c"/><rect x="985.1" y="647.5" width="2.800" height="1.100" fill="#b0b0b0"/><rect x="985.1" y="648.9" width="2.800" height=".8" fill="#8a8a8a"/><rect x="989.0" y="649.6" width="4" height="7" rx="1.500" fill="#0c0c0c"/><rect x="990.1" y="651.6" width="1.800" height="3.0" rx=".8" fill="#c8c8c8"/><rect x="992.6" y="652.1" width="4.200" height="3.200" fill="#0c0c0c"/><rect x="993.3" y="652.8" width="2.800" height="1.100" fill="#b0b0b0"/><rect x="993.3" y="654.2" width="2.800" height=".8" fill="#8a8a8a"/><rect x="997.2" y="654.8" width="4" height="7" rx="1.500" fill="#0c0c0c"/><rect x="998.4" y="656.8" width="1.800" height="3.0" rx=".8" fill="#c8c8c8"/><rect x="1000.9" y="657.3" width="4.200" height="3.200" fill="#0c0c0c"/><rect x="1001.5" y="658.0" width="2.800" height="1.100" fill="#b0b0b0"/><rect x="1001.5" y="659.4" width="2.800" height=".8" fill="#8a8a8a"/><rect x="1005.5" y="660.1" width="4" height="7" rx="1.500" fill="#0c0c0c"/><rect x="1006.6" y="662.1" width="1.800" height="3.0" rx=".8" fill="#c8c8c8"/><rect x="1009.1" y="662.6" width="4.200" height="3.200" fill="#0c0c0c"/><rect x="1009.8" y="663.3" width="2.800" height="1.100" fill="#b0b0b0"/><rect x="1009.8" y="664.7" width="2.800" height=".8" fill="#8a8a8a"/><rect x="1013.7" y="663.8" width="4" height="8.5" rx="1.500" fill="#0c0c0c"/><rect x="1014.8" y="665.8" width="1.800" height="4.5" rx=".8" fill="#c8c8c8"/><rect x="1017.3" y="667.8" width="4.200" height="3.200" fill="#0c0c0c"/><rect x="1018.0" y="668.5" width="2.800" height="1.100" fill="#b0b0b0"/><rect x="1018.0" y="669.9" width="2.800" height=".8" fill="#8a8a8a"/><rect x="957.0" y="616.7" width="4" height="8.5" rx="1.500" fill="#0c0c0c"/><rect x="958.1" y="618.7" width="1.800" height="4.5" rx=".8" fill="#c8c8c8"/><rect x="960.6" y="620.7" width="4.200" height="3.200" fill="#0c0c0c"/><rect x="961.3" y="621.4" width="2.800" height="1.100" fill="#b0b0b0"/><rect x="961.3" y="622.8" width="2.800" height=".8" fill="#8a8a8a"/><rect x="965.2" y="623.3" width="4" height="7" rx="1.500" fill="#0c0c0c"/><rect x="966.3" y="625.3" width="1.800" height="3.0" rx=".8" fill="#c8c8c8"/><rect x="968.8" y="625.8" width="4.200" height="3.200" fill="#0c0c0c"/><rect x="969.5" y="626.5" width="2.800" height="1.100" fill="#b0b0b0"/><rect x="969.5" y="627.9" width="2.800" height=".8" fill="#8a8a8a"/><rect x="973.4" y="628.5" width="4" height="7" rx="1.500" fill="#0c0c0c"/><rect x="974.5" y="630.5" width="1.800" height="3.0" rx=".8" fill="#c8c8c8"/><rect x="977.0" y="631.0" width="4.200" height="3.200" fill="#0c0c0c"/><rect x="977.7" y="631.7" width="2.800" height="1.100" fill="#b0b0b0"/><rect x="977.7" y="633.1" width="2.800" height=".8" fill="#8a8a8a"/><rect x="981.7" y="633.6" width="4" height="7" rx="1.500" fill="#0c0c0c"/><rect x="982.8" y="635.6" width="1.800" height="3.0" rx=".8" fill="#c8c8c8"/><rect x="985.3" y="636.1" width="4.200" height="3.200" fill="#0c0c0c"/><rect x="986.0" y="636.8" width="2.800" height="1.100" fill="#b0b0b0"/><rect x="986.0" y="638.2" width="2.800" height=".8" fill="#8a8a8a"/><rect x="989.9" y="638.7" width="4" height="7" rx="1.500" fill="#0c0c0c"/><rect x="991.0" y="640.7" width="1.800" height="3.0" rx=".8" fill="#c8c8c8"/><rect x="993.5" y="641.2" width="4.200" height="3.200" fill="#0c0c0c"/><rect x="994.2" y="641.9" width="2.800" height="1.100" fill="#b0b0b0"/><rect x="994.2" y="643.3" width="2.800" height=".8" fill="#8a8a8a"/><rect x="998.1" y="643.8" width="4" height="7" rx="1.500" fill="#0c0c0c"/><rect x="999.2" y="645.8" width="1.800" height="3.0" rx=".8" fill="#c8c8c8"/><rect x="1001.7" y="646.3" width="4.200" height="3.200" fill="#0c0c0c"/><rect x="1002.4" y="647.0" width="2.800" height="1.100" fill="#b0b0b0"/><rect x="1002.4" y="648.4" width="2.800" height=".8" fill="#8a8a8a"/><rect x="1006.3" y="649.0" width="4" height="7" rx="1.500" fill="#0c0c0c"/><rect x="1007.4" y="651.0" width="1.800" height="3.0" rx=".8" fill="#c8c8c8"/><rect x="1009.9" y="651.5" width="4.200" height="3.200" fill="#0c0c0c"/><rect x="1010.6" y="652.2" width="2.800" height="1.100" fill="#b0b0b0"/><rect x="1010.6" y="653.6" width="2.800" height=".8" fill="#8a8a8a"/><rect x="1014.6" y="654.1" width="4" height="7" rx="1.500" fill="#0c0c0c"/><rect x="1015.7" y="656.1" width="1.800" height="3.0" rx=".8" fill="#c8c8c8"/><rect x="1018.2" y="656.6" width="4.200" height="3.200" fill="#0c0c0c"/><rect x="1018.9" y="657.3" width="2.800" height="1.100" fill="#b0b0b0"/><rect x="1018.9" y="658.7" width="2.800" height=".8" fill="#8a8a8a"/><rect x="1022.8" y="657.7" width="4" height="8.5" rx="1.500" fill="#0c0c0c"/><rect x="1023.9" y="659.7" width="1.800" height="4.5" rx=".8" fill="#c8c8c8"/><rect x="1026.4" y="661.7" width="4.200" height="3.200" fill="#0c0c0c"/><rect x="1027.1" y="662.4" width="2.800" height="1.100" fill="#b0b0b0"/><rect x="1027.1" y="663.8" width="2.800" height=".8" fill="#8a8a8a"/><rect x="966.0" y="611.6" width="4" height="8.5" rx="1.500" fill="#0c0c0c"/><rect x="967.1" y="613.6" width="1.800" height="4.5" rx=".8" fill="#c8c8c8"/><rect x="969.6" y="615.6" width="4.200" height="3.200" fill="#0c0c0c"/><rect x="970.3" y="616.3" width="2.800" height="1.100" fill="#b0b0b0"/><rect x="970.3" y="617.7" width="2.800" height=".8" fill="#8a8a8a"/><rect x="974.2" y="618.1" width="4" height="7" rx="1.500" fill="#0c0c0c"/><rect x="975.3" y="620.1" width="1.800" height="3.0" rx=".8" fill="#c8c8c8"/><rect x="977.8" y="620.6" width="4.200" height="3.200" fill="#0c0c0c"/><rect x="978.5" y="621.3" width="2.800" height="1.100" fill="#b0b0b0"/><rect x="978.5" y="622.7" width="2.800" height=".8" fill="#8a8a8a"/><rect x="982.5" y="623.1" width="4" height="7" rx="1.500" fill="#0c0c0c"/><rect x="983.6" y="625.1" width="1.800" height="3.0" rx=".8" fill="#c8c8c8"/><rect x="986.1" y="625.6" width="4.200" height="3.200" fill="#0c0c0c"/><rect x="986.8" y="626.3" width="2.800" height="1.100" fill="#b0b0b0"/><rect x="986.8" y="627.7" width="2.800" height=".8" fill="#8a8a8a"/><rect x="990.7" y="628.1" width="4" height="7" rx="1.500" fill="#0c0c0c"/><rect x="991.8" y="630.1" width="1.800" height="3.0" rx=".8" fill="#c8c8c8"/><rect x="994.3" y="630.6" width="4.200" height="3.200" fill="#0c0c0c"/><rect x="995.0" y="631.3" width="2.800" height="1.100" fill="#b0b0b0"/><rect x="995.0" y="632.7" width="2.800" height=".8" fill="#8a8a8a"/><rect x="998.9" y="633.1" width="4" height="7" rx="1.500" fill="#0c0c0c"/><rect x="1000.0" y="635.1" width="1.800" height="3.0" rx=".8" fill="#c8c8c8"/><rect x="1002.5" y="635.6" width="4.200" height="3.200" fill="#0c0c0c"/><rect x="1003.2" y="636.3" width="2.800" height="1.100" fill="#b0b0b0"/><rect x="1003.2" y="637.7" width="2.800" height=".8" fill="#8a8a8a"/><rect x="1007.2" y="638.1" width="4" height="7" rx="1.500" fill="#0c0c0c"/><rect x="1008.3" y="640.1" width="1.800" height="3.0" rx=".8" fill="#c8c8c8"/><rect x="1010.8" y="640.6" width="4.200" height="3.200" fill="#0c0c0c"/><rect x="1011.5" y="641.3" width="2.800" height="1.100" fill="#b0b0b0"/><rect x="1011.5" y="642.7" width="2.800" height=".8" fill="#8a8a8a"/><rect x="1015.4" y="643.1" width="4" height="7" rx="1.500" fill="#0c0c0c"/><rect x="1016.5" y="645.1" width="1.800" height="3.0" rx=".8" fill="#c8c8c8"/><rect x="1019.0" y="645.6" width="4.200" height="3.200" fill="#0c0c0c"/><rect x="1019.7" y="646.3" width="2.800" height="1.100" fill="#b0b0b0"/><rect x="1019.7" y="647.7" width="2.800" height=".8" fill="#8a8a8a"/><rect x="1023.7" y="648.1" width="4" height="7" rx="1.500" fill="#0c0c0c"/><rect x="1024.8" y="650.1" width="1.800" height="3.0" rx=".8" fill="#c8c8c8"/><rect x="1027.3" y="650.6" width="4.200" height="3.200" fill="#0c0c0c"/><rect x="1028.0" y="651.3" width="2.800" height="1.100" fill="#b0b0b0"/><rect x="1028.0" y="652.7" width="2.800" height=".8" fill="#8a8a8a"/><rect x="1031.9" y="651.6" width="4" height="8.5" rx="1.500" fill="#0c0c0c"/><rect x="1033.0" y="653.6" width="1.800" height="4.5" rx=".8" fill="#c8c8c8"/><rect x="1035.5" y="655.6" width="4.200" height="3.200" fill="#0c0c0c"/><rect x="1036.2" y="656.3" width="2.800" height="1.100" fill="#b0b0b0"/><rect x="1036.2" y="657.7" width="2.800" height=".8" fill="#8a8a8a"/><rect x="975.0" y="606.5" width="4" height="8.5" rx="1.500" fill="#0c0c0c"/><rect x="976.1" y="608.5" width="1.800" height="4.5" rx=".8" fill="#c8c8c8"/><rect x="978.6" y="610.5" width="4.200" height="3.200" fill="#0c0c0c"/><rect x="979.3" y="611.2" width="2.800" height="1.100" fill="#b0b0b0"/><rect x="979.3" y="612.6" width="2.800" height=".8" fill="#8a8a8a"/><rect x="983.2" y="611.4" width="4" height="8.5" rx="1.500" fill="#0c0c0c"/><rect x="984.4" y="613.4" width="1.800" height="4.5" rx=".8" fill="#c8c8c8"/><rect x="986.9" y="615.4" width="4.200" height="3.200" fill="#0c0c0c"/><rect x="987.5" y="616.1" width="2.800" height="1.100" fill="#b0b0b0"/><rect x="987.5" y="617.5" width="2.800" height=".8" fill="#8a8a8a"/><rect x="991.5" y="616.2" width="4" height="8.5" rx="1.500" fill="#0c0c0c"/><rect x="992.6" y="618.2" width="1.800" height="4.5" rx=".8" fill="#c8c8c8"/><rect x="995.1" y="620.2" width="4.200" height="3.200" fill="#0c0c0c"/><rect x="995.8" y="621.0" width="2.800" height="1.100" fill="#b0b0b0"/><rect x="995.8" y="622.4" width="2.800" height=".8" fill="#8a8a8a"/><rect x="999.8" y="621.1" width="4" height="8.5" rx="1.500" fill="#0c0c0c"/><rect x="1000.9" y="623.1" width="1.800" height="4.5" rx=".8" fill="#c8c8c8"/><rect x="1003.4" y="625.1" width="4.200" height="3.200" fill="#0c0c0c"/><rect x="1004.0" y="625.8" width="2.800" height="1.100" fill="#b0b0b0"/><rect x="1004.0" y="627.2" width="2.800" height=".8" fill="#8a8a8a"/><rect x="1008.0" y="626.0" width="4" height="8.5" rx="1.500" fill="#0c0c0c"/><rect x="1009.1" y="628.0" width="1.800" height="4.5" rx=".8" fill="#c8c8c8"/><rect x="1011.6" y="630.0" width="4.200" height="3.200" fill="#0c0c0c"/><rect x="1012.3" y="630.7" width="2.800" height="1.100" fill="#b0b0b0"/><rect x="1012.3" y="632.1" width="2.800" height=".8" fill="#8a8a8a"/><rect x="1016.2" y="630.9" width="4" height="8.5" rx="1.500" fill="#0c0c0c"/><rect x="1017.4" y="632.9" width="1.800" height="4.5" rx=".8" fill="#c8c8c8"/><rect x="1019.9" y="634.9" width="4.200" height="3.200" fill="#0c0c0c"/><rect x="1020.5" y="635.6" width="2.800" height="1.100" fill="#b0b0b0"/><rect x="1020.5" y="637.0" width="2.800" height=".8" fill="#8a8a8a"/><rect x="1024.5" y="635.8" width="4" height="8.5" rx="1.500" fill="#0c0c0c"/><rect x="1025.6" y="637.8" width="1.800" height="4.5" rx=".8" fill="#c8c8c8"/><rect x="1028.1" y="639.8" width="4.200" height="3.200" fill="#0c0c0c"/><rect x="1028.8" y="640.5" width="2.800" height="1.100" fill="#b0b0b0"/><rect x="1028.8" y="641.9" width="2.800" height=".8" fill="#8a8a8a"/><rect x="1032.8" y="640.6" width="4" height="8.5" rx="1.500" fill="#0c0c0c"/><rect x="1033.8" y="642.6" width="1.800" height="4.5" rx=".8" fill="#c8c8c8"/><rect x="1036.3" y="644.6" width="4.200" height="3.200" fill="#0c0c0c"/><rect x="1037.0" y="645.3" width="2.800" height="1.100" fill="#b0b0b0"/><rect x="1037.0" y="646.7" width="2.800" height=".8" fill="#8a8a8a"/><rect x="1041.0" y="645.5" width="4" height="8.5" rx="1.500" fill="#0c0c0c"/><rect x="1042.1" y="647.5" width="1.800" height="4.5" rx=".8" fill="#c8c8c8"/><rect x="1044.6" y="649.5" width="4.200" height="3.200" fill="#0c0c0c"/><rect x="1045.3" y="650.2" width="2.800" height="1.100" fill="#b0b0b0"/><rect x="1045.3" y="651.6" width="2.800" height=".8" fill="#8a8a8a"/><rect x="935.1" y="650.5" width="1.6" height="1.2" fill="#f0f0f0"/><rect x="943.8" y="679.2" width="2.2" height="1.2" fill="#b4b4b4"/><rect x="938.4" y="642.4" width="1.6" height="2.8" fill="#b4b4b4"/><rect x="971.0" y="627.4" width="2.2" height="1.2" fill="#f0f0f0"/><rect x="948.5" y="635.0" width="2.2" height="1.2" fill="#f0f0f0"/><rect x="983.4" y="632.3" width="2.2" height="1.2" fill="#f0f0f0"/><rect x="973.9" y="678.8" width="2.2" height="1.2" fill="#f0f0f0"/><rect x="955.8" y="641.1" width="1.6" height="1.2" fill="#f0f0f0"/><rect x="918.6" y="664.5" width="3.6" height="2.2" fill="#8c8c8c"/><rect x="972.8" y="650.9" width="3" height="1.6" fill="#b4b4b4"/><rect x="968.7" y="637.7" width="3" height="2.8" fill="#d8d8d8"/><rect x="973.6" y="638.0" width="1.6" height="1.2" fill="#f0f0f0"/><rect x="978.6" y="671.0" width="2.2" height="2.8" fill="#8c8c8c"/><rect x="944.8" y="685.5" width="3" height="2.2" fill="#d8d8d8"/><rect x="981.1" y="655.5" width="3.6" height="1.2" fill="#b4b4b4"/><rect x="1001.0" y="635.1" width="1.6" height="1.2" fill="#d8d8d8"/><rect x="1010.1" y="669.1" width="3.6" height="2.2" fill="#8c8c8c"/><rect x="989.0" y="633.1" width="3.6" height="2.2" fill="#b4b4b4"/><rect x="977.2" y="651.3" width="2.2" height="2.2" fill="#b4b4b4"/><rect x="980.9" y="641.8" width="3.6" height="1.2" fill="#b4b4b4"/><rect x="968.4" y="661.1" width="2.2" height="2.8" fill="#f0f0f0"/><rect x="947.5" y="663.5" width="3" height="2.8" fill="#b4b4b4"/><rect x="923.7" y="659.1" width="2.2" height="1.6" fill="#b4b4b4"/><rect x="973.5" y="661.0" width="3" height="2.2" fill="#b4b4b4"/><rect x="944.8" y="674.7" width="3" height="1.6" fill="#f0f0f0"/><rect x="1012.4" y="641.5" width="1.6" height="2.8" fill="#f0f0f0"/><rect x="955.1" y="657.6" width="1.6" height="2.8" fill="#8c8c8c"/><rect x="910.5" y="658.3" width="2.2" height="2.8" fill="#b4b4b4"/><rect x="946.0" y="679.2" width="1.6" height="1.2" fill="#f0f0f0"/><rect x="919.2" y="655.9" width="3" height="1.2" fill="#b4b4b4"/><rect x="1004.2" y="643.6" width="2.2" height="2.2" fill="#d8d8d8"/><rect x="975.4" y="651.0" width="1.6" height="2.8" fill="#8c8c8c"/><rect x="956.4" y="650.1" width="2.2" height="1.2" fill="#d8d8d8"/><rect x="986.0" y="644.8" width="2.2" height="1.2" fill="#b4b4b4"/><rect x="1004.8" y="636.8" width="2.2" height="1.2" fill="#f0f0f0"/><rect x="962.7" y="672.1" width="1.6" height="2.2" fill="#f0f0f0"/><rect x="939.2" y="649.3" width="2.2" height="2.2" fill="#b4b4b4"/><rect x="995.1" y="662.8" width="2.2" height="1.6" fill="#8c8c8c"/><rect x="970.7" y="635.2" width="3.6" height="2.2" fill="#b4b4b4"/><rect x="1023.6" y="644.5" width="3.6" height="2.2" fill="#b4b4b4"/><rect x="1011.3" y="665.4" width="3.6" height="2.2" fill="#d8d8d8"/><rect x="914.0" y="659.0" width="3.6" height="1.6" fill="#d8d8d8"/><rect x="954.5" y="675.7" width="1.6" height="2.8" fill="#d8d8d8"/><rect x="966.6" y="627.2" width="1.6" height="2.8" fill="#b4b4b4"/><rect x="948.2" y="644.9" width="3" height="1.2" fill="#8c8c8c"/><rect x="981.1" y="668.3" width="1.6" height="1.6" fill="#b4b4b4"/><rect x="977.6" y="616.7" width="3.6" height="1.6" fill="#f0f0f0"/><rect x="1022.8" y="659.6" width="3" height="1.6" fill="#f0f0f0"/><rect x="944.0" y="635.5" width="1.6" height="1.6" fill="#8c8c8c"/><rect x="987.2" y="623.1" width="2.2" height="1.2" fill="#d8d8d8"/><rect x="947.8" y="670.1" width="3" height="2.2" fill="#f0f0f0"/><rect x="941.0" y="645.5" width="3" height="2.8" fill="#f0f0f0"/><rect x="993.9" y="642.7" width="2.2" height="1.6" fill="#f0f0f0"/><rect x="992.5" y="671.1" width="2.2" height="1.2" fill="#b4b4b4"/><rect x="943.1" y="670.8" width="1.6" height="1.2" fill="#d8d8d8"/><rect x="984.8" y="649.5" width="3.6" height="1.2" fill="#f0f0f0"/><rect x="917.5" y="663.9" width="1.6" height="1.2" fill="#f0f0f0"/><rect x="937.2" y="639.9" width="1.6" height="2.8" fill="#d8d8d8"/><rect x="978.0" y="651.7" width="2.2" height="2.2" fill="#8c8c8c"/><rect x="988.4" y="668.7" width="2.2" height="2.2" fill="#f0f0f0"/><rect x="980.7" y="627.5" width="3.6" height="1.6" fill="#8c8c8c"/><rect x="937.4" y="671.8" width="1.6" height="1.6" fill="#8c8c8c"/><rect x="947.4" y="683.9" width="1.6" height="1.6" fill="#d8d8d8"/><rect x="965.4" y="689.7" width="3.6" height="1.6" fill="#b4b4b4"/><rect x="960.9" y="661.0" width="2.2" height="1.6" fill="#8c8c8c"/><rect x="1000.5" y="630.3" width="3.6" height="1.6" fill="#d8d8d8"/><rect x="969.0" y="674.4" width="1.6" height="2.2" fill="#f0f0f0"/><rect x="978.4" y="666.9" width="3.6" height="2.2" fill="#f0f0f0"/><rect x="979.3" y="651.5" width="1.6" height="1.2" fill="#b4b4b4"/><rect x="980.6" y="620.4" width="3" height="2.2" fill="#b4b4b4"/><rect x="980.4" y="626.1" width="2.2" height="2.8" fill="#d8d8d8"/><rect x="964.4" y="662.6" width="3.6" height="2.2" fill="#b4b4b4"/><rect x="970.7" y="679.5" width="2.2" height="2.8" fill="#b4b4b4"/><rect x="922.9" y="647.3" width="1.6" height="2.2" fill="#b4b4b4"/><rect x="960.6" y="640.8" width="3" height="1.2" fill="#8c8c8c"/><rect x="962.2" y="701.1" width="3.6" height="2.2" fill="#f0f0f0"/><rect x="943.1" y="675.1" width="2.2" height="1.2" fill="#b4b4b4"/><rect x="932.2" y="654.5" width="3" height="2.2" fill="#f0f0f0"/><rect x="976.0" y="636.7" width="2.2" height="2.2" fill="#d8d8d8"/><rect x="1021.9" y="661.3" width="1.6" height="1.2" fill="#b4b4b4"/><rect x="989.8" y="647.9" width="2.2" height="2.8" fill="#b4b4b4"/><rect x="978.0" y="622.1" width="3.6" height="2.8" fill="#f0f0f0"/><rect x="987.9" y="637.2" width="3" height="1.6" fill="#b4b4b4"/><rect x="977.4" y="677.8" width="2.2" height="2.8" fill="#d8d8d8"/><rect x="1025.8" y="646.6" width="1.6" height="1.2" fill="#d8d8d8"/><rect x="937.3" y="641.9" width="3.6" height="2.2" fill="#f0f0f0"/><rect x="937.5" y="660.0" width="3.6" height="1.6" fill="#b4b4b4"/><rect x="922.1" y="646.7" width="3" height="2.2" fill="#f0f0f0"/><rect x="928.0" y="645.7" width="3" height="1.6" fill="#d8d8d8"/><rect x="935.6" y="664.5" width="1.6" height="2.8" fill="#d8d8d8"/><rect x="951.4" y="644.7" width="1.6" height="1.2" fill="#d8d8d8"/><rect x="971.5" y="628.6" width="1.6" height="2.8" fill="#b4b4b4"/><rect x="962.0" y="671.4" width="1.6" height="1.6" fill="#f0f0f0"/><rect x="950.5" y="654.8" width="3.6" height="1.6" fill="#d8d8d8"/><rect x="994.7" y="651.8" width="1.6" height="2.8" fill="#f0f0f0"/><rect x="943.6" y="674.5" width="1.6" height="1.6" fill="#b4b4b4"/><rect x="912.1" y="662.5" width="3" height="1.2" fill="#8c8c8c"/><rect x="998.0" y="643.3" width="1.6" height="1.6" fill="#8c8c8c"/><rect x="949.0" y="665.9" width="1.6" height="1.2" fill="#f0f0f0"/><rect x="950.9" y="687.2" width="3" height="1.2" fill="#d8d8d8"/><rect x="964.8" y="679.9" width="2.2" height="2.8" fill="#8c8c8c"/><rect x="969.5" y="624.9" width="3" height="1.2" fill="#f0f0f0"/><rect x="961.0" y="638.8" width="2.2" height="2.2" fill="#d8d8d8"/><rect x="992.3" y="657.2" width="2.2" height="1.2" fill="#8c8c8c"/><rect x="922.5" y="667.1" width="1.6" height="1.6" fill="#8c8c8c"/><rect x="954.6" y="667.2" width="3.6" height="2.8" fill="#8c8c8c"/><rect x="1019.1" y="663.1" width="2.2" height="2.2" fill="#b4b4b4"/><rect x="972.7" y="618.8" width="3.6" height="1.2" fill="#f0f0f0"/><rect x="1001.3" y="633.2" width="3" height="2.8" fill="#b4b4b4"/><rect x="1026.6" y="653.3" width="1.6" height="1.2" fill="#b4b4b4"/><rect x="973.4" y="636.2" width="3" height="1.6" fill="#f0f0f0"/><rect x="993.8" y="642.2" width="1.6" height="2.2" fill="#b4b4b4"/><rect x="991.8" y="671.9" width="3.6" height="1.2" fill="#b4b4b4"/><rect x="931.5" y="679.4" width="3.6" height="2.8" fill="#d8d8d8"/><rect x="981.2" y="643.0" width="3.6" height="2.2" fill="#b4b4b4"/><rect x="964.6" y="622.3" width="3" height="2.8" fill="#b4b4b4"/><rect x="983.8" y="625.2" width="1.6" height="2.2" fill="#d8d8d8"/><rect x="953.2" y="658.3" width="1.6" height="2.2" fill="#8c8c8c"/><rect x="1009.8" y="658.4" width="3" height="1.2" fill="#b4b4b4"/><rect x="981.4" y="633.2" width="2.2" height="1.6" fill="#d8d8d8"/><rect x="953.4" y="652.2" width="3" height="2.8" fill="#b4b4b4"/><rect x="1000.6" y="647.2" width="2.2" height="1.2" fill="#b4b4b4"/><rect x="996.3" y="633.3" width="2.2" height="2.2" fill="#8c8c8c"/><rect x="961.0" y="696.3" width="2.2" height="1.6" fill="#8c8c8c"/><rect x="949.7" y="651.8" width="3" height="2.2" fill="#8c8c8c"/><rect x="968.9" y="641.8" width="3.6" height="1.2" fill="#b4b4b4"/><rect x="954.3" y="633.6" width="3.6" height="1.6" fill="#8c8c8c"/><rect x="1029.8" y="656.2" width="3.6" height="2.8" fill="#b4b4b4"/><rect x="957.4" y="644.4" width="2.2" height="2.2" fill="#f0f0f0"/><rect x="923.0" y="664.5" width="3" height="1.6" fill="#b4b4b4"/><rect x="982.7" y="641.8" width="3.6" height="1.6" fill="#8c8c8c"/><rect x="967.2" y="678.0" width="3.6" height="2.2" fill="#f0f0f0"/><rect x="981.6" y="621.4" width="2.2" height="1.2" fill="#d8d8d8"/><rect x="992.0" y="634.0" width="3.6" height="2.8" fill="#d8d8d8"/><rect x="1018.0" y="654.5" width="1.6" height="1.6" fill="#b4b4b4"/><rect x="979.5" y="670.9" width="3.6" height="2.8" fill="#b4b4b4"/><rect x="963.0" y="695.2" width="3.6" height="2.8" fill="#b4b4b4"/><rect x="973.8" y="633.1" width="2.2" height="1.2" fill="#8c8c8c"/><rect x="954.7" y="688.0" width="1.6" height="1.6" fill="#b4b4b4"/><rect x="946.6" y="635.3" width="3" height="1.6" fill="#d8d8d8"/><rect x="967.6" y="652.9" width="1.6" height="1.2" fill="#b4b4b4"/><rect x="980.9" y="684.5" width="2.2" height="2.8" fill="#d8d8d8"/><rect x="954.6" y="673.8" width="1.6" height="2.2" fill="#8c8c8c"/><rect x="941.6" y="659.4" width="2.2" height="2.8" fill="#f0f0f0"/><rect x="934.2" y="658.4" width="3.6" height="2.2" fill="#b4b4b4"/><rect x="933.3" y="678.9" width="3.6" height="1.2" fill="#d8d8d8"/><rect x="944.3" y="666.2" width="3" height="1.6" fill="#8c8c8c"/><rect x="924.6" y="671.3" width="3.6" height="2.2" fill="#8c8c8c"/><rect x="964.4" y="683.3" width="1.6" height="1.6" fill="#8c8c8c"/><rect x="993.1" y="628.1" width="2.2" height="1.6" fill="#8c8c8c"/><rect x="964.0" y="680.7" width="3" height="1.2" fill="#f0f0f0"/><rect x="950.1" y="644.4" width="2.2" height="2.8" fill="#8c8c8c"/><rect x="973.1" y="621.3" width="2.2" height="2.8" fill="#b4b4b4"/><rect x="976.2" y="690.1" width="2.2" height="2.8" fill="#b4b4b4"/><rect x="965.9" y="634.9" width="3.6" height="2.2" fill="#b4b4b4"/><rect x="1032.7" y="649.3" width="3" height="1.6" fill="#b4b4b4"/><rect x="982.2" y="650.6" width="3.6" height="1.2" fill="#d8d8d8"/><rect x="974.2" y="644.4" width="3" height="2.2" fill="#8c8c8c"/><rect x="914.6" y="651.0" width="3" height="1.2" fill="#d8d8d8"/><rect x="986.4" y="676.1" width="2.2" height="2.8" fill="#d8d8d8"/><rect x="977.8" y="637.0" width="3.6" height="1.2" fill="#b4b4b4"/><rect x="966.3" y="635.5" width="3.6" height="1.6" fill="#d8d8d8"/><rect x="982.9" y="679.4" width="1.6" height="2.8" fill="#b4b4b4"/><rect x="1008.8" y="652.3" width="1.6" height="2.8" fill="#b4b4b4"/><rect x="984.8" y="670.6" width="1.6" height="2.2" fill="#b4b4b4"/><rect x="1011.9" y="660.5" width="3" height="2.2" fill="#d8d8d8"/><rect x="984.2" y="683.1" width="1.6" height="2.2" fill="#d8d8d8"/><rect x="988.8" y="629.6" width="1.6" height="1.2" fill="#b4b4b4"/><rect x="952.7" y="684.3" width="3.6" height="2.8" fill="#d8d8d8"/><rect x="1019.3" y="649.1" width="2.2" height="2.8" fill="#b4b4b4"/><rect x="958.2" y="698.4" width="3" height="1.6" fill="#f0f0f0"/><rect x="971.2" y="684.2" width="3.6" height="2.2" fill="#f0f0f0"/><rect x="919.6" y="663.2" width="2.2" height="1.6" fill="#8c8c8c"/><rect x="908.7" y="656.8" width="3" height="1.6" fill="#8c8c8c"/><rect x="1027.6" y="657.0" width="3" height="1.2" fill="#b4b4b4"/><rect x="938.9" y="675.4" width="3.6" height="1.6" fill="#b4b4b4"/><rect x="939.4" y="672.1" width="2.2" height="1.2" fill="#d8d8d8"/><rect x="957.8" y="669.1" width="3" height="2.2" fill="#d8d8d8"/><rect x="931.5" y="660.0" width="2.2" height="1.6" fill="#b4b4b4"/><rect x="977.3" y="683.9" width="2.2" height="2.2" fill="#b4b4b4"/><rect x="991.1" y="681.7" width="2.2" height="1.2" fill="#8c8c8c"/><rect x="981.9" y="619.5" width="3.6" height="1.6" fill="#8c8c8c"/><rect x="972.5" y="620.6" width="3" height="1.6" fill="#b4b4b4"/><rect x="941.6" y="682.0" width="2.2" height="1.2" fill="#d8d8d8"/><rect x="950.8" y="643.3" width="3" height="1.2" fill="#b4b4b4"/><rect x="992.2" y="658.5" width="3" height="1.6" fill="#b4b4b4"/><rect x="937.8" y="648.1" width="2.2" height="2.2" fill="#b4b4b4"/><rect x="985.9" y="658.1" width="2.2" height="1.2" fill="#d8d8d8"/><rect x="954.7" y="655.8" width="3" height="1.2" fill="#b4b4b4"/><rect x="933.9" y="678.3" width="3.6" height="1.2" fill="#8c8c8c"/><rect x="933.1" y="670.8" width="2.2" height="1.2" fill="#b4b4b4"/><rect x="947.8" y="652.2" width="3" height="2.2" fill="#8c8c8c"/><rect x="991.9" y="628.8" width="3" height="2.8" fill="#8c8c8c"/><rect x="949.1" y="690.8" width="3" height="1.6" fill="#8c8c8c"/><rect x="968.4" y="634.8" width="1.6" height="2.8" fill="#b4b4b4"/><rect x="982.8" y="673.3" width="3.6" height="2.2" fill="#8c8c8c"/><rect x="967.3" y="630.0" width="1.6" height="1.6" fill="#8c8c8c"/><rect x="945.8" y="681.1" width="3" height="1.6" fill="#b4b4b4"/><rect x="937.5" y="649.9" width="2.2" height="1.2" fill="#b4b4b4"/><rect x="975.8" y="672.5" width="2.2" height="2.2" fill="#b4b4b4"/><rect x="966.9" y="624.0" width="3.6" height="2.2" fill="#b4b4b4"/><rect x="985.6" y="657.1" width="1.6" height="1.6" fill="#b4b4b4"/><rect x="985.3" y="655.6" width="2.2" height="2.8" fill="#b4b4b4"/><rect x="946.5" y="635.6" width="2.2" height="2.8" fill="#d8d8d8"/><rect x="925.8" y="663.4" width="2.2" height="1.2" fill="#f0f0f0"/><rect x="1005.4" y="647.3" width="3" height="1.2" fill="#8c8c8c"/><rect x="979.7" y="654.1" width="3" height="2.8" fill="#d8d8d8"/><rect x="971.0" y="650.0" width="3" height="2.8" fill="#f0f0f0"/><rect x="935.9" y="640.3" width="3.6" height="2.8" fill="#b4b4b4"/><rect x="972.4" y="664.0" width="3.6" height="1.6" fill="#8c8c8c"/><rect x="935.7" y="643.7" width="3" height="2.8" fill="#d8d8d8"/><rect x="935.2" y="673.2" width="1.6" height="1.2" fill="#b4b4b4"/><rect x="951.9" y="686.2" width="1.6" height="1.2" fill="#f0f0f0"/><rect x="1008.1" y="644.1" width="2.2" height="1.2" fill="#b4b4b4"/><rect x="1020.5" y="642.1" width="1.6" height="1.6" fill="#b4b4b4"/><rect x="1004.9" y="634.1" width="2.2" height="1.6" fill="#b4b4b4"/><rect x="1000.9" y="645.4" width="3" height="1.6" fill="#d8d8d8"/><rect x="985.3" y="630.0" width="3.6" height="1.6" fill="#d8d8d8"/><rect x="994.7" y="673.4" width="2.2" height="2.2" fill="#f0f0f0"/><rect x="958.8" y="649.2" width="1.6" height="1.6" fill="#b4b4b4"/><rect x="970.2" y="666.8" width="3" height="2.2" fill="#8c8c8c"/><rect x="961.5" y="684.3" width="1.6" height="1.2" fill="#d8d8d8"/><rect x="1001.4" y="633.4" width="1.6" height="2.2" fill="#f0f0f0"/><rect x="972.6" y="646.6" width="3" height="2.2" fill="#8c8c8c"/><rect x="1010.7" y="636.8" width="3" height="2.2" fill="#b4b4b4"/><rect x="945.5" y="646.4" width="1.6" height="2.2" fill="#f0f0f0"/><rect x="959.1" y="674.0" width="3" height="1.2" fill="#b4b4b4"/><rect x="935.8" y="660.9" width="3.6" height="2.8" fill="#f0f0f0"/><rect x="931.9" y="644.5" width="3.6" height="1.6" fill="#f0f0f0"/><rect x="951.9" y="631.1" width="1.6" height="2.2" fill="#d8d8d8"/><rect x="931.2" y="668.9" width="2.2" height="2.8" fill="#f0f0f0"/><rect x="932.3" y="650.8" width="3" height="2.8" fill="#b4b4b4"/><rect x="968.0" y="692.4" width="2.2" height="1.6" fill="#8c8c8c"/><rect x="947.2" y="681.5" width="3" height="2.8" fill="#d8d8d8"/><rect x="977.4" y="618.9" width="3" height="2.8" fill="#f0f0f0"/><rect x="1016.2" y="645.0" width="2.2" height="1.6" fill="#b4b4b4"/><rect x="936.9" y="679.3" width="3.6" height="1.6" fill="#b4b4b4"/><rect x="968.4" y="690.1" width="1.6" height="1.2" fill="#f0f0f0"/><rect x="999.7" y="671.9" width="2.2" height="2.8" fill="#b4b4b4"/><rect x="979.2" y="661.6" width="3.6" height="1.6" fill="#f0f0f0"/><rect x="943.0" y="657.3" width="1.6" height="2.8" fill="#f0f0f0"/><rect x="952.8" y="694.8" width="3.6" height="1.2" fill="#8c8c8c"/><rect x="974.7" y="692.9" width="3" height="1.6" fill="#b4b4b4"/><rect x="964.5" y="691.0" width="3" height="1.2" fill="#d8d8d8"/><rect x="990.3" y="657.4" width="3" height="2.2" fill="#b4b4b4"/><rect x="938.6" y="676.3" width="2.2" height="2.2" fill="#b4b4b4"/><rect x="976.9" y="629.8" width="2.2" height="2.2" fill="#b4b4b4"/><rect x="987.4" y="632.7" width="2.2" height="2.8" fill="#f0f0f0"/><rect x="987.4" y="671.8" width="1.6" height="1.2" fill="#8c8c8c"/><rect x="987.3" y="625.9" width="3" height="1.6" fill="#8c8c8c"/><rect x="953.0" y="634.6" width="2.2" height="1.6" fill="#b4b4b4"/><rect x="910.2" y="661.6" width="2.2" height="2.2" fill="#b4b4b4"/><rect x="956.0" y="629.4" width="2.2" height="1.2" fill="#b4b4b4"/><rect x="960.8" y="629.2" width="3" height="1.6" fill="#f0f0f0"/><rect x="972.3" y="622.5" width="3.6" height="1.2" fill="#b4b4b4"/><rect x="923.9" y="654.0" width="1.6" height="1.2" fill="#d8d8d8"/><rect x="945.4" y="643.0" width="2.2" height="2.2" fill="#d8d8d8"/><rect x="942.6" y="654.5" width="3" height="2.2" fill="#d8d8d8"/><rect x="950.9" y="689.0" width="3" height="2.8" fill="#d8d8d8"/><rect x="949.8" y="632.9" width="3.6" height="1.2" fill="#8c8c8c"/><rect x="946.4" y="639.9" width="3.6" height="1.2" fill="#f0f0f0"/><rect x="987.1" y="662.2" width="1.6" height="2.2" fill="#b4b4b4"/><rect x="965.9" y="660.7" width="3" height="1.2" fill="#b4b4b4"/><rect x="933.5" y="647.2" width="2.2" height="2.8" fill="#f0f0f0"/><rect x="977.7" y="677.5" width="3" height="1.6" fill="#d8d8d8"/><rect x="1019.4" y="658.6" width="2.2" height="2.8" fill="#b4b4b4"/><rect x="948.2" y="680.7" width="1.6" height="2.8" fill="#f0f0f0"/><rect x="998.5" y="648.3" width="3" height="1.2" fill="#8c8c8c"/><rect x="1025.1" y="651.2" width="1.6" height="2.8" fill="#b4b4b4"/><rect x="947.8" y="654.6" width="3.6" height="1.6" fill="#8c8c8c"/><rect x="1013.4" y="639.1" width="3.6" height="1.6" fill="#f0f0f0"/><rect x="987.7" y="659.8" width="1.6" height="2.2" fill="#f0f0f0"/><rect x="935.5" y="650.6" width="3.6" height="2.2" fill="#b4b4b4"/><rect x="977.9" y="666.1" width="3" height="1.6" fill="#b4b4b4"/><rect x="965.4" y="670.4" width="2.2" height="1.6" fill="#d8d8d8"/><rect x="966.6" y="674.4" width="2.2" height="1.6" fill="#b4b4b4"/><rect x="992.2" y="650.3" width="3" height="1.6" fill="#b4b4b4"/><rect x="937.7" y="651.9" width="1.6" height="1.6" fill="#b4b4b4"/><rect x="925.5" y="656.1" width="2.2" height="2.2" fill="#d8d8d8"/><rect x="946.1" y="647.5" width="1.6" height="2.2" fill="#b4b4b4"/><rect x="995.9" y="637.5" width="1.6" height="2.8" fill="#8c8c8c"/><rect x="983.8" y="647.8" width="3" height="2.8" fill="#b4b4b4"/><rect x="948.6" y="677.8" width="3.6" height="1.2" fill="#b4b4b4"/><rect x="995.6" y="635.2" width="3.6" height="1.6" fill="#f0f0f0"/><rect x="1006.6" y="647.1" width="1.6" height="2.8" fill="#8c8c8c"/><rect x="962.9" y="670.8" width="1.6" height="2.8" fill="#b4b4b4"/><rect x="1003.3" y="651.7" width="2.2" height="2.2" fill="#8c8c8c"/><rect x="939.0" y="638.3" width="3.6" height="1.6" fill="#d8d8d8"/><rect x="983.4" y="639.6" width="3.6" height="1.2" fill="#b4b4b4"/><rect x="933.7" y="656.5" width="2.2" height="2.2" fill="#b4b4b4"/><rect x="992.7" y="639.0" width="2.2" height="2.8" fill="#f0f0f0"/><rect x="950.5" y="692.0" width="3" height="2.2" fill="#8c8c8c"/><rect x="984.8" y="643.9" width="2.2" height="2.8" fill="#f0f0f0"/><rect x="966.1" y="630.2" width="3" height="1.2" fill="#d8d8d8"/><rect x="946.3" y="663.0" width="1.6" height="1.2" fill="#8c8c8c"/><rect x="1008.2" y="642.2" width="3" height="2.2" fill="#b4b4b4"/><rect x="963.1" y="679.7" width="2.2" height="2.8" fill="#8c8c8c"/><rect x="925.4" y="654.5" width="1.6" height="1.6" fill="#8c8c8c"/><rect x="993.2" y="658.7" width="2.2" height="2.2" fill="#8c8c8c"/><rect x="954.5" y="650.0" width="2.2" height="2.8" fill="#d8d8d8"/><rect x="974.2" y="633.4" width="3.6" height="2.2" fill="#8c8c8c"/><rect x="981.5" y="647.7" width="3" height="2.2" fill="#b4b4b4"/><rect x="970.0" y="642.6" width="3.6" height="2.8" fill="#f0f0f0"/><rect x="989.2" y="656.6" width="3" height="1.6" fill="#d8d8d8"/><rect x="969.0" y="623.8" width="3" height="1.6" fill="#f0f0f0"/><rect x="1002.2" y="646.3" width="1.6" height="1.2" fill="#b4b4b4"/><rect x="1012.6" y="641.5" width="3" height="1.2" fill="#f0f0f0"/><rect x="926.5" y="662.0" width="3.6" height="2.2" fill="#b4b4b4"/><rect x="941.5" y="666.2" width="2.2" height="1.2" fill="#f0f0f0"/><rect x="1011.3" y="656.2" width="2.2" height="2.8" fill="#b4b4b4"/><rect x="986.1" y="664.9" width="3.6" height="1.2" fill="#f0f0f0"/><rect x="935.8" y="671.0" width="2.2" height="2.8" fill="#8c8c8c"/><rect x="972.6" y="653.5" width="2.2" height="2.8" fill="#b4b4b4"/><rect x="971.5" y="658.4" width="1.6" height="1.6" fill="#d8d8d8"/><rect x="970.6" y="660.8" width="3" height="2.8" fill="#d8d8d8"/><rect x="993.8" y="680.5" width="1.6" height="1.6" fill="#d8d8d8"/><rect x="951.0" y="632.0" width="1.6" height="2.2" fill="#b4b4b4"/><rect x="969.1" y="655.6" width="2.2" height="1.2" fill="#b4b4b4"/><rect x="993.2" y="651.4" width="3" height="1.2" fill="#d8d8d8"/><rect x="974.1" y="675.6" width="2.2" height="2.2" fill="#8c8c8c"/><rect x="942.5" y="653.9" width="1.6" height="2.2" fill="#d8d8d8"/><rect x="958.0" y="663.2" width="3" height="2.2" fill="#f0f0f0"/><rect x="939.8" y="651.7" width="3.6" height="1.2" fill="#d8d8d8"/><rect x="959.0" y="680.1" width="2.2" height="1.2" fill="#b4b4b4"/><rect x="964.9" y="663.7" width="3.6" height="1.2" fill="#8c8c8c"/><rect x="924.6" y="645.5" width="2.2" height="2.8" fill="#f0f0f0"/><rect x="962.6" y="627.7" width="3.6" height="1.6" fill="#f0f0f0"/><rect x="972.2" y="623.8" width="1.6" height="2.8" fill="#b4b4b4"/><rect x="920.3" y="661.5" width="1.6" height="2.8" fill="#b4b4b4"/><rect x="1009.7" y="643.3" width="3" height="1.6" fill="#d8d8d8"/><rect x="959.3" y="644.3" width="3" height="1.6" fill="#8c8c8c"/><rect x="905.6" y="657.5" width="1.6" height="2.8" fill="#f0f0f0"/><rect x="990.5" y="668.7" width="3.6" height="2.8" fill="#8c8c8c"/><rect x="947.6" y="684.7" width="2.2" height="2.8" fill="#8c8c8c"/><rect x="947.8" y="637.9" width="3.6" height="1.6" fill="#b4b4b4"/><rect x="974.4" y="648.0" width="1.6" height="1.2" fill="#b4b4b4"/><rect x="925.4" y="653.9" width="3.6" height="1.2" fill="#d8d8d8"/><rect x="970.1" y="636.7" width="2.2" height="1.2" fill="#d8d8d8"/><rect x="1002.7" y="652.1" width="2.2" height="1.2" fill="#d8d8d8"/><rect x="991.5" y="658.9" width="3.6" height="2.2" fill="#b4b4b4"/><rect x="956.0" y="627.9" width="1.6" height="1.2" fill="#8c8c8c"/><rect x="968.9" y="675.0" width="2.2" height="2.8" fill="#f0f0f0"/><rect x="928.3" y="671.5" width="3.6" height="2.8" fill="#b4b4b4"/><rect x="960.5" y="686.0" width="3" height="1.6" fill="#8c8c8c"/><rect x="984.3" y="669.0" width="3.6" height="2.2" fill="#f0f0f0"/><rect x="943.6" y="655.4" width="3" height="1.2" fill="#b4b4b4"/><rect x="965.3" y="644.5" width="3.6" height="1.6" fill="#8c8c8c"/><rect x="953.4" y="656.9" width="2.2" height="2.8" fill="#d8d8d8"/><rect x="972.6" y="641.1" width="3" height="2.8" fill="#b4b4b4"/><rect x="994.8" y="665.2" width="1.6" height="2.2" fill="#b4b4b4"/><rect x="1014.8" y="656.1" width="2.2" height="2.2" fill="#f0f0f0"/><rect x="1008.1" y="664.1" width="3" height="1.2" fill="#f0f0f0"/><rect x="991.2" y="666.0" width="2.2" height="1.6" fill="#d8d8d8"/><rect x="988.0" y="658.7" width="3.6" height="1.6" fill="#d8d8d8"/><rect x="946.1" y="633.4" width="3.6" height="2.8" fill="#f0f0f0"/><rect x="956.7" y="689.1" width="1.6" height="1.6" fill="#8c8c8c"/><rect x="999.2" y="668.7" width="3" height="2.8" fill="#f0f0f0"/><rect x="957.2" y="640.4" width="2.2" height="1.2" fill="#b4b4b4"/><rect x="979.5" y="634.6" width="3" height="2.8" fill="#f0f0f0"/><rect x="980.6" y="630.7" width="3.6" height="2.2" fill="#b4b4b4"/><rect x="957.4" y="661.2" width="1.6" height="1.6" fill="#d8d8d8"/><rect x="967.2" y="646.1" width="1.6" height="1.2" fill="#b4b4b4"/><rect x="969.4" y="686.1" width="3.6" height="1.6" fill="#d8d8d8"/><rect x="987.8" y="628.9" width="1.6" height="2.8" fill="#f0f0f0"/><rect x="1021.2" y="659.4" width="3" height="1.2" fill="#d8d8d8"/><rect x="927.7" y="657.1" width="1.6" height="1.2" fill="#b4b4b4"/><rect x="926.6" y="672.7" width="3.6" height="2.8" fill="#b4b4b4"/><rect x="1004.9" y="645.1" width="1.6" height="1.2" fill="#d8d8d8"/><rect x="939.6" y="654.1" width="1.6" height="2.8" fill="#b4b4b4"/><rect x="944.9" y="645.4" width="2.2" height="1.6" fill="#b4b4b4"/><rect x="920.0" y="667.6" width="3" height="1.2" fill="#f0f0f0"/><rect x="1020.0" y="650.4" width="1.6" height="2.2" fill="#f0f0f0"/><rect x="993.8" y="652.6" width="3.6" height="1.2" fill="#b4b4b4"/><rect x="957.9" y="684.1" width="2.2" height="2.2" fill="#f0f0f0"/><rect x="991.7" y="662.6" width="1.6" height="2.8" fill="#d8d8d8"/><rect x="953.0" y="658.2" width="3" height="2.8" fill="#8c8c8c"/><rect x="928.7" y="661.0" width="2.2" height="1.2" fill="#8c8c8c"/><rect x="967.1" y="635.0" width="1.6" height="1.6" fill="#b4b4b4"/><rect x="944.7" y="681.5" width="3" height="1.6" fill="#8c8c8c"/><rect x="1029.4" y="651.0" width="3.6" height="1.2" fill="#b4b4b4"/><rect x="956.0" y="652.5" width="2.2" height="2.8" fill="#b4b4b4"/><rect x="957.3" y="636.8" width="2.2" height="1.2" fill="#b4b4b4"/><rect x="988.5" y="648.9" width="2.2" height="2.8" fill="#b4b4b4"/><rect x="946.4" y="663.9" width="2.2" height="1.2" fill="#d8d8d8"/><rect x="962.3" y="645.4" width="2.2" height="2.2" fill="#8c8c8c"/><rect x="937.3" y="673.0" width="3.6" height="1.2" fill="#b4b4b4"/><rect x="978.3" y="618.4" width="2.2" height="2.8" fill="#d8d8d8"/><rect x="956.0" y="685.4" width="3" height="2.8" fill="#d8d8d8"/><rect x="1032.4" y="649.0" width="1.6" height="2.8" fill="#d8d8d8"/><rect x="942.6" y="646.9" width="3" height="1.6" fill="#b4b4b4"/><rect x="965.4" y="659.8" width="2.2" height="2.8" fill="#b4b4b4"/><rect x="1017.8" y="660.1" width="3" height="1.6" fill="#d8d8d8"/><rect x="989.2" y="676.4" width="2.2" height="2.2" fill="#f0f0f0"/><rect x="965.9" y="686.2" width="2.2" height="1.6" fill="#b4b4b4"/><rect x="996.6" y="665.0" width="3.6" height="2.2" fill="#b4b4b4"/><rect x="954.0" y="675.2" width="2.2" height="2.2" fill="#b4b4b4"/><rect x="944.0" y="687.9" width="3.6" height="1.2" fill="#f0f0f0"/><rect x="982.6" y="636.1" width="3.6" height="1.2" fill="#b4b4b4"/><rect x="978.3" y="671.7" width="2.2" height="2.2" fill="#b4b4b4"/><rect x="965.6" y="685.4" width="3" height="1.2" fill="#b4b4b4"/><rect x="988.9" y="650.2" width="1.6" height="2.2" fill="#f0f0f0"/><rect x="1030.1" y="653.9" width="1.6" height="1.2" fill="#d8d8d8"/><rect x="1004.5" y="658.9" width="3" height="2.8" fill="#f0f0f0"/><rect x="961.6" y="628.4" width="1.6" height="2.8" fill="#8c8c8c"/><rect x="972.1" y="657.3" width="2.2" height="1.2" fill="#b4b4b4"/><rect x="987.5" y="625.0" width="2.2" height="1.6" fill="#b4b4b4"/><rect x="958.5" y="667.8" width="1.6" height="1.2" fill="#b4b4b4"/><rect x="1015.7" y="645.7" width="3" height="1.2" fill="#f0f0f0"/><rect x="977.3" y="649.0" width="2.2" height="2.8" fill="#b4b4b4"/><rect x="933.6" y="647.0" width="2.2" height="1.2" fill="#d8d8d8"/><rect x="940.6" y="674.0" width="3" height="1.2" fill="#b4b4b4"/><rect x="963.9" y="690.8" width="2.2" height="1.6" fill="#b4b4b4"/><rect x="979.6" y="647.4" width="3.6" height="1.6" fill="#b4b4b4"/><rect x="995.3" y="632.3" width="3.6" height="1.2" fill="#8c8c8c"/><rect x="977.4" y="618.6" width="3" height="2.2" fill="#8c8c8c"/><rect x="939.9" y="661.9" width="3.6" height="2.2" fill="#8c8c8c"/><rect x="968.3" y="623.9" width="2.2" height="2.2" fill="#b4b4b4"/><rect x="1006.9" y="645.6" width="1.6" height="2.2" fill="#b4b4b4"/><rect x="945.6" y="638.2" width="3.6" height="1.6" fill="#f0f0f0"/><rect x="965.4" y="638.3" width="3.6" height="2.8" fill="#8c8c8c"/>
<polygon points="755.5,587.5 843.0,536.0 848.0,536.5 850.5,539.5 764.5,593.0" fill="#b1b1b1" stroke="#050505" stroke-width="1" stroke-linejoin="round"/>
<polygon points="764.5,593.0 850.5,539.5 850.5,545.5 764.5,603.0" fill="#4e4e4e" stroke="#050505" stroke-width="1" stroke-linejoin="round"/>
<polygon points="755.5,587.5 759.0,591.5 764.5,593.0 764.5,603.0 759.0,601.5 755.5,597.5" fill="#8e8e8e" stroke="#050505" stroke-width="1" stroke-linejoin="round"/>
<ellipse cx="767.0" cy="583.5" rx="3.5100000000000002" ry="2.106" fill="#8a8a8a" stroke="#2a2a2a" stroke-width="1"/>
<ellipse cx="767.0" cy="583.1" rx="2.98" ry="1.47" fill="#303030"/>
<ellipse cx="837.5" cy="543.0" rx="3.5100000000000002" ry="2.106" fill="#8a8a8a" stroke="#2a2a2a" stroke-width="1"/>
<ellipse cx="837.5" cy="542.6" rx="2.98" ry="1.47" fill="#303030"/>
<path d="M857.5,562v16a30.5,16.200 0 0 0 61,0v-16z" fill="url(#mdisc)" stroke="#050505" stroke-width="1"/>
<ellipse cx="888.0" cy="562.0" rx="30.5" ry="16.2" fill="#b1b1b1" stroke="#050505" stroke-width="1"/>
<ellipse cx="870.0" cy="552.5" rx="3.6399999999999997" ry="2.1839999999999997" fill="#8a8a8a" stroke="#2a2a2a" stroke-width="1"/>
<ellipse cx="870.0" cy="552.1" rx="3.09" ry="1.53" fill="#303030"/>
<ellipse cx="906.0" cy="552.5" rx="3.6399999999999997" ry="2.1839999999999997" fill="#8a8a8a" stroke="#2a2a2a" stroke-width="1"/>
<ellipse cx="906.0" cy="552.1" rx="3.09" ry="1.53" fill="#303030"/>
<ellipse cx="870.0" cy="574.0" rx="3.6399999999999997" ry="2.1839999999999997" fill="#8a8a8a" stroke="#2a2a2a" stroke-width="1"/>
<ellipse cx="870.0" cy="573.6" rx="3.09" ry="1.53" fill="#303030"/>
<ellipse cx="906.0" cy="574.0" rx="3.6399999999999997" ry="2.1839999999999997" fill="#8a8a8a" stroke="#2a2a2a" stroke-width="1"/>
<ellipse cx="906.0" cy="573.6" rx="3.09" ry="1.53" fill="#303030"/>
<path d="M876.5,559v6a11.500,6 0 0 0 23,0v-6z" fill="url(#mdisc)" stroke="#050505" stroke-width="1"/>
<ellipse cx="888.0" cy="559.0" rx="11.5" ry="6" fill="#a9a9a9" stroke="#050505" stroke-width="1"/>
<ellipse cx="888.0" cy="558.5" rx="7.5" ry="4" fill="#8a8a8a" stroke="#050505" stroke-width="1"/>
<rect x="882.200" y="495" width="12.400" height="63" fill="url(#mrod)"/>
<path d="M882.200,495v63a6.200,3 0 0 0 12.400,0v-63" fill="url(#mrod)" stroke="#050505" stroke-width="1"/>
<polygon points="816.0,457.5 922.0,518.0 922.5,527.0 817.5,467.5" fill="#979797" stroke="#050505" stroke-width="1" stroke-linejoin="round"/>
<polygon points="922.0,518.0 1049.0,445.0 1049.0,454.0 922.5,527.0" fill="#5a5a5a" stroke="#050505" stroke-width="1" stroke-linejoin="round"/>
<polygon points="816.0,457.5 941.2,383.0 1049.0,445.0 922.0,518.0" fill="#b1b1b1" stroke="#050505" stroke-width="1" stroke-linejoin="round"/>
<ellipse cx="858.5" cy="432.5" rx="3.5100000000000002" ry="2.106" fill="#8a8a8a" stroke="#2a2a2a" stroke-width="1"/>
<ellipse cx="858.5" cy="432.1" rx="2.98" ry="1.47" fill="#303030"/>
<ellipse cx="928.5" cy="393.5" rx="3.5100000000000002" ry="2.106" fill="#8a8a8a" stroke="#2a2a2a" stroke-width="1"/>
<ellipse cx="928.5" cy="393.1" rx="2.98" ry="1.47" fill="#303030"/>
<ellipse cx="946.5" cy="389.5" rx="3.5100000000000002" ry="2.106" fill="#8a8a8a" stroke="#2a2a2a" stroke-width="1"/>
<ellipse cx="946.5" cy="389.1" rx="2.98" ry="1.47" fill="#303030"/>
<ellipse cx="992.5" cy="415.0" rx="3.5100000000000002" ry="2.106" fill="#8a8a8a" stroke="#2a2a2a" stroke-width="1"/>
<ellipse cx="992.5" cy="414.6" rx="2.98" ry="1.47" fill="#303030"/>
<ellipse cx="1036.0" cy="441.0" rx="3.5100000000000002" ry="2.106" fill="#8a8a8a" stroke="#2a2a2a" stroke-width="1"/>
<ellipse cx="1036.0" cy="440.6" rx="2.98" ry="1.47" fill="#303030"/>
<ellipse cx="1030.5" cy="451.5" rx="3.5100000000000002" ry="2.106" fill="#8a8a8a" stroke="#2a2a2a" stroke-width="1"/>
<ellipse cx="1030.5" cy="451.1" rx="2.98" ry="1.47" fill="#303030"/>
<ellipse cx="996.5" cy="472.5" rx="3.5100000000000002" ry="2.106" fill="#8a8a8a" stroke="#2a2a2a" stroke-width="1"/>
<ellipse cx="996.5" cy="472.1" rx="2.98" ry="1.47" fill="#303030"/>
<ellipse cx="961.5" cy="492.5" rx="3.5100000000000002" ry="2.106" fill="#8a8a8a" stroke="#2a2a2a" stroke-width="1"/>
<ellipse cx="961.5" cy="492.1" rx="2.98" ry="1.47" fill="#303030"/>
<ellipse cx="907.0" cy="520.0" rx="3.5100000000000002" ry="2.106" fill="#8a8a8a" stroke="#2a2a2a" stroke-width="1"/>
<ellipse cx="907.0" cy="519.6" rx="2.98" ry="1.47" fill="#303030"/>
<ellipse cx="941.5" cy="413.5" rx="4.2" ry="2.5" fill="#b9b9b9" stroke="#050505" stroke-width="1"/>
<ellipse cx="996.0" cy="445.0" rx="4.2" ry="2.5" fill="#b9b9b9" stroke="#050505" stroke-width="1"/>
<polygon points="859.5,456.0 887.8,441.0 916.0,456.0 887.8,471.5" fill="#b1b1b1" stroke="#050505" stroke-width="1" stroke-linejoin="round"/>
<path d="M867.700,352V462a20.300,8 0 0 0 40.600,0V352z" fill="url(#mcyl)" stroke="#050505" stroke-width="1"/>
<rect x="863.4" y="355" width="3.8" height="103" fill="#9a9a9a" stroke="#050505" stroke-width="1"/>
<rect x="908.8" y="355" width="3.8" height="103" fill="#9a9a9a" stroke="#050505" stroke-width="1"/>
<rect x="886" y="372" width="3.800" height="98" fill="#a6a6a6" stroke="#050505" stroke-width="1"/>
<polygon points="859.5,456.0 885.5,470.5 885.5,491.0 860.7,476.0" fill="#8a8a8a" stroke="#050505" stroke-width="1" stroke-linejoin="round"/>
<polygon points="885.5,470.5 891.5,470.5 891.5,491.0 887.8,492.5 885.5,491.0" fill="#7a7a7a" stroke="#050505" stroke-width="1" stroke-linejoin="round"/>
<polygon points="891.5,470.5 916.0,456.0 916.0,476.0 891.5,491.0" fill="#464646" stroke="#050505" stroke-width="1" stroke-linejoin="round"/>
<polygon points="859.5,339.6 885.5,354.5 885.5,373.5 859.5,357.7" fill="#8a8a8a" stroke="#050505" stroke-width="1" stroke-linejoin="round"/>
<polygon points="885.5,354.5 891.5,354.5 891.5,373.5 887.8,375.0 885.5,373.5" fill="#7a7a7a" stroke="#050505" stroke-width="1" stroke-linejoin="round"/>
<polygon points="891.5,354.5 916.0,339.6 916.0,359.2 891.5,373.5" fill="#464646" stroke="#050505" stroke-width="1" stroke-linejoin="round"/>
<polygon points="859.5,339.6 862.0,337.5 887.8,323.4 914.0,337.5 916.0,339.6 891.0,354.5 887.8,355.4 885.0,354.5" fill="#b1b1b1" stroke="#050505" stroke-width="1" stroke-linejoin="round"/>
<ellipse cx="887.8" cy="327.0" rx="2.6" ry="1.56" fill="#8a8a8a" stroke="#2a2a2a" stroke-width="1"/>
<ellipse cx="887.8" cy="326.7" rx="2.21" ry="1.09" fill="#303030"/>
<ellipse cx="865.5" cy="339.8" rx="2.6" ry="1.56" fill="#8a8a8a" stroke="#2a2a2a" stroke-width="1"/>
<ellipse cx="865.5" cy="339.5" rx="2.21" ry="1.09" fill="#303030"/>
<ellipse cx="910.5" cy="339.8" rx="2.6" ry="1.56" fill="#8a8a8a" stroke="#2a2a2a" stroke-width="1"/>
<ellipse cx="910.5" cy="339.5" rx="2.21" ry="1.09" fill="#303030"/>
<ellipse cx="887.8" cy="352.0" rx="2.6" ry="1.56" fill="#8a8a8a" stroke="#2a2a2a" stroke-width="1"/>
<ellipse cx="887.8" cy="351.7" rx="2.21" ry="1.09" fill="#303030"/>
<g opacity=".97" shape-rendering="geometricPrecision">
<defs><linearGradient id="gor" x1="0" y1="0" x2="0" y2="1"><stop offset="0" stop-color="#ee6c10"/><stop offset=".6" stop-color="#f38a1a"/><stop offset="1" stop-color="#f9b42c"/></linearGradient></defs>
<g fill="url(#gor)">
<path d="M891.300,517.500h2v20.500l14,-1v2.600l-16,.4z"/>
<path d="M894.800,513.300h2.100v22.700l10.500,-1v1.600l-12.600,1.400z"/>
<path d="M898.700,508.600l3.200,2.400v22.600l5.500,1v.9l-8.700,.5z"/>
<path d="M936.200,517.500h-2v20.500l-14,-1v2.600l16,.4z"/>
<path d="M932.700,513.300h-2.100v22.700l-10.500,-1v1.600l12.600,1.400z"/>
<path d="M928.800,508.600l-3.200,2.400v22.600l-5.500,1v.9l8.700,.5z"/>
<path d="M912.500,510.200c-9,3 -10.500,14 -4.500,19.500c-1.500,-6 1,-10.500 4.500,-12.500v19.300h2.500l7.300,-7c2.500,-4 1.500,-8 -1.500,-10.500c1,4 -1.500,7 -4.500,8l-1.200,-6.500c0,-4 -1,-7.500 -2.600,-10.300z"/>
</g>
<ellipse cx="913.700" cy="538.300" rx="4.800" ry="1.300" fill="#f0501a"/>
<text x="947.500" y="529.300" font-family="'Liberation Sans','Noto Sans CJK SC',sans-serif" font-weight="normal" font-size="16.600" fill="#f58a1c" stroke="#f58a1c" stroke-width=".15" textLength="81.500" lengthAdjust="spacingAndGlyphs">智造资料网</text>
<text x="947" y="538.300" font-family="'Liberation Sans',sans-serif" font-weight="bold" font-size="5.300" fill="#f58a1c" textLength="82" lengthAdjust="spacingAndGlyphs">INTELLIGENT MANUFACTURING DATA</text>
</g>
<g>
<path d="M121,921L137,911.500V931.500" fill="#8a97b4" fill-opacity=".5" stroke="#cfd4de" stroke-width=".8"/>
<path d="M121,921L137,931.500V948" fill="#8a97b4" fill-opacity=".5" stroke="none"/>
<path d="M121,921L137,931.500" stroke="#cfd4de" stroke-width=".8"/>
<path d="M119.500,941L137,931.500L155.500,942L137,951.500z" fill="#8f9a58" fill-opacity=".75"/>
<path d="M137,931.500L155.500,942L140,950.500" fill="none" stroke="#f0e800" stroke-width="1"/>
<path d="M137,911.500V950" stroke="#d8dce4" stroke-width=".8"/>
<path d="M119.500,940V886" stroke="#10a8b8" stroke-width="1.800"/><path d="M119.500,880.500l-4,9.500h8z" fill="#10d0e0"/>
<path d="M120,941L149,924" stroke="#10c010" stroke-width="2"/><path d="M156,921l-9,1.500l4.500,7z" fill="#10d010"/>
<path d="M120,942L139,952" stroke="#e00808" stroke-width="2.200"/><path d="M145,956.500l-10,-1.500l4.500,-7z" fill="#e00808"/>
<circle cx="119.500" cy="942" r="3.600" fill="#777"/><circle cx="118.500" cy="941" r="1.500" fill="#a4a4a4"/>
<g font-family="'Liberation Sans',sans-serif" font-size="11.500"><text x="114.800" y="879" fill="#d4d8e0" textLength="7.500" lengthAdjust="spacingAndGlyphs">Z</text>
<text x="155.800" y="922.500" fill="#e81010" font-size="11">Y</text>
<text x="144.800" y="963.300" fill="#d4d8e0" textLength="8" lengthAdjust="spacingAndGlyphs">X</text></g>
</g>
</svg>
<svg width="1920" height="1048" style="left:0;top:0" viewBox="0 0 1920 1048">
<defs>
<linearGradient id="gdoc" x1="0" y1="0" x2="1" y2="1"><stop offset="0" stop-color="#ffffff"/><stop offset="1" stop-color="#a9c4f2"/></linearGradient>
<linearGradient id="gfold" x1="0" y1="0" x2="0" y2="1"><stop offset="0" stop-color="#fbe49a"/><stop offset="1" stop-color="#f2c65a"/></linearGradient>
<linearGradient id="gcylb" x1="0" y1="0" x2="1" y2="0"><stop offset="0" stop-color="#2a4c9e"/><stop offset=".45" stop-color="#86acea"/><stop offset="1" stop-color="#2546a0"/></linearGradient>
<linearGradient id="gcylp" x1="0" y1="0" x2="1" y2="0"><stop offset="0" stop-color="#b9c9ea"/><stop offset=".45" stop-color="#eef3fc"/><stop offset="1" stop-color="#b3c3e6"/></linearGradient>
<linearGradient id="ggrey" x1="0" y1="0" x2="1" y2="1"><stop offset="0" stop-color="#e0e0e0"/><stop offset="1" stop-color="#7a7a7a"/></linearGradient>
<radialGradient id="gball" cx=".35" cy=".3" r=".8"><stop offset="0" stop-color="#ffffff"/><stop offset="1" stop-color="#555"/></radialGradient>
<radialGradient id="gsmile" cx=".4" cy=".3" r=".8"><stop offset="0" stop-color="#fff3a0"/><stop offset="1" stop-color="#f2b81e"/></radialGradient>
<radialGradient id="glens" cx=".4" cy=".35" r=".8"><stop offset="0" stop-color="#ffffff"/><stop offset="1" stop-color="#86b0e4"/></radialGradient>
<linearGradient id="gblue" x1="0" y1="0" x2="0" y2="1"><stop offset="0" stop-color="#a5c6ee"/><stop offset="1" stop-color="#3f77c4"/></linearGradient>
<linearGradient id="ggreen" x1="0" y1="0" x2="1" y2="1"><stop offset="0" stop-color="#7df55d"/><stop offset="1" stop-color="#14a010"/></linearGradient>
<linearGradient id="ggreen2" x1="0" y1="0" x2="1" y2="0"><stop offset="0" stop-color="#a8f890"/><stop offset="1" stop-color="#1cb416"/></linearGradient>
<linearGradient id="gwhiteblue" x1="0" y1="0" x2="1" y2="1"><stop offset="0" stop-color="#ffffff"/><stop offset="1" stop-color="#b4c8ee"/></linearGradient>
</defs>
<g transform="translate(2,3)"><rect x="0" y="0" width="16" height="16" fill="#6db540"/><rect x="0" y="0" width="16" height="1" fill="#8ccc60"/><path d="M5.200,5.500L8.300,13.500L12.300,3.200" fill="none" stroke="#fff" stroke-width="2.300" stroke-linejoin="round" stroke-linecap="round"/><circle cx="4.300" cy="3.300" r="1.200" fill="#fff"/></g>
<rect x="20" y="6" width="1" height="13" fill="#9a9a9a"/>
<g transform="translate(33,4)"><path d="M1,1h8l4,4v10.500h-12z" fill="url(#gdoc)" stroke="#000" stroke-width="1.300"/><path d="M9,1v4h4" fill="#fff" stroke="#000" stroke-width="1"/></g>
<g transform="translate(55,4)"><path d="M1,16V5h5l1.500,2H14v9z" fill="#e8b94a" stroke="#c79a35" stroke-width=".6"/><path d="M1,16.500L4,8.500H17.500L14,16.500z" fill="url(#gfold)" stroke="#c79a35" stroke-width=".6"/><path d="M6,9.500C6,4 10,2.500 13.500,3.500V1L18.500,5.500L13.500,9.500V7C10.500,6 8,7 8.500,10z" fill="url(#ggreen)" stroke="#14820f" stroke-width=".5"/></g>
<g transform="translate(79,3)"><path d="M0,8V1.500h3l1,1.200h4.500V8z" fill="url(#gfold)" stroke="#c79a35" stroke-width=".5"/><path d="M0,17V10.500h3l1,1.200h4.500V17z" fill="url(#gfold)" stroke="#c79a35" stroke-width=".5"/><path d="M8,2.500h5v14h-5" fill="none" stroke="#5fd24a" stroke-width="1"/><path d="M10,5h5l3,3v6.500h-8z" fill="url(#gdoc)" stroke="#222" stroke-width="1"/></g>
<g transform="translate(103,4)"><g transform="scale(1.0)"><rect x=".5" y=".5" width="15.500" height="15.500" rx="1.200" fill="#3e62b0" stroke="#2a4480" stroke-width=".8"/><rect x="2.500" y="1" width="11.500" height="8" fill="#f2f2f2"/><rect x="2.500" y="1" width="11.500" height="1.600" fill="#e3342c"/><path d="M3.500,4.500h9.500M3.500,6.200h9.500M3.500,7.800h9.500" stroke="#b8b8b8" stroke-width=".7"/><rect x="4" y="11" width="9" height="5" fill="#b9b9b9"/><rect x="5.500" y="11.800" width="2.200" height="3.600" fill="#2c3c66"/></g></g>
<g transform="translate(127,4)"><g transform="translate(6,0)"><g transform="scale(0.6875)"><rect x=".5" y=".5" width="15.500" height="15.500" rx="1.200" fill="#3e62b0" stroke="#2a4480" stroke-width=".8"/><rect x="2.500" y="1" width="11.500" height="8" fill="#f2f2f2"/><rect x="2.500" y="1" width="11.500" height="1.600" fill="#e3342c"/><path d="M3.500,4.500h9.500M3.500,6.200h9.500M3.500,7.800h9.500" stroke="#b8b8b8" stroke-width=".7"/><rect x="4" y="11" width="9" height="5" fill="#b9b9b9"/><rect x="5.500" y="11.800" width="2.200" height="3.600" fill="#2c3c66"/></g></g><g transform="translate(0,6)"><g transform="scale(0.6875)"><rect x=".5" y=".5" width="15.500" height="15.500" rx="1.200" fill="#3e62b0" stroke="#2a4480" stroke-width=".8"/><rect x="2.500" y="1" width="11.500" height="8" fill="#f2f2f2"/><rect x="2.500" y="1" width="11.500" height="1.600" fill="#e3342c"/><path d="M3.500,4.500h9.500M3.500,6.200h9.500M3.500,7.800h9.500" stroke="#b8b8b8" stroke-width=".7"/><rect x="4" y="11" width="9" height="5" fill="#b9b9b9"/><rect x="5.500" y="11.800" width="2.200" height="3.600" fill="#2c3c66"/></g></g></g>
<g transform="translate(149,2)"><g transform="translate(0,0)"><g transform="scale(0.6875)"><rect x=".5" y=".5" width="15.500" height="15.500" rx="1.200" fill="#3e62b0" stroke="#2a4480" stroke-width=".8"/><rect x="2.500" y="1" width="11.500" height="8" fill="#f2f2f2"/><rect x="2.500" y="1" width="11.500" height="1.600" fill="#e3342c"/><path d="M3.500,4.500h9.500M3.500,6.200h9.500M3.500,7.800h9.500" stroke="#b8b8b8" stroke-width=".7"/><rect x="4" y="11" width="9" height="5" fill="#b9b9b9"/><rect x="5.500" y="11.800" width="2.200" height="3.600" fill="#2c3c66"/></g></g><path d="M12.500,7C12.500,3.500 15,3 17,3.800V2L20,5L17,8V6.200C15.500,5.500 14.500,6 14.500,7.500z" fill="#35c22a" stroke="#168a10" stroke-width=".4" transform="scale(-1,1) translate(-32.500,0)"/><g transform="translate(9,9)"><path d="M0,2.625L5.25,0L10.5,2.625L5.25,5.25z" fill="#cfcfcf" stroke="#555" stroke-width=".5"/><path d="M0,2.625L5.25,5.25V10.5L0,7.875z" fill="#9a9a9a" stroke="#555" stroke-width=".5"/><path d="M10.5,2.625L5.25,5.25V10.5L10.5,7.875z" fill="#6e6e6e" stroke="#555" stroke-width=".5"/></g></g>
<g transform="translate(175,3)"><rect x="4" y="1" width="9.500" height="8" fill="#cfe0fa" stroke="#667" stroke-width=".7"/><path d="M8.700,1.500l3,3.300h-1.700v2h-2.600v-2h-1.700z" fill="#1fd21f"/><path d="M1,9.500c0,-1 .8,-1.500 1.500,-1.500h12.500c.8,0 1.500,.5 1.500,1.500V16.500H1z" fill="#e8e8e8" stroke="#777" stroke-width=".7"/><rect x="2.500" y="11.500" width="12.500" height="2.500" fill="#fff" stroke="#aaa" stroke-width=".5"/><rect x="1.500" y="15.500" width="14.500" height="1.800" fill="#9a9a9a"/></g>
<g transform="translate(197,2)"><circle cx="10" cy="10" r="9.500" fill="#5a9b33" stroke="#3f7a22" stroke-width=".8"/><circle cx="10" cy="10" r="7.500" fill="#79b64c"/><path d="M13,13L18.500,18.500" stroke="#8a8a8a" stroke-width="3" stroke-linecap="round"/><path d="M13,13L18.500,18.500" stroke="#e4e4e4" stroke-width="1.200" stroke-linecap="round"/><circle cx="9" cy="9" r="5.600" fill="url(#glens)" stroke="#d4dbe6" stroke-width="1.500"/><circle cx="9" cy="9" r="4.200" fill="none" stroke="#7ea3d8" stroke-width=".6"/></g>
<g transform="translate(223,3)"><ellipse cx="9" cy="16.500" rx="7" ry="1.500" fill="#000" opacity=".15"/><path d="M0.500,6.500L7.500,0.500V4C13,4 16,7.500 15,12.500C14,15.500 11.500,17 8.500,16.500C11.500,15 11.500,9.500 7.500,9.500V13z" fill="#a9a9a9" stroke="#7d7d7d" stroke-width=".6"/></g>
<g transform="translate(246,3)"><g transform="translate(16.500,0) scale(-1,1)"><ellipse cx="9" cy="16.500" rx="7" ry="1.500" fill="#000" opacity=".15"/><path d="M0.500,6.500L7.500,0.500V4C13,4 16,7.500 15,12.500C14,15.500 11.500,17 8.500,16.500C11.500,15 11.500,9.500 7.500,9.500V13z" fill="#a9a9a9" stroke="#7d7d7d" stroke-width=".6"/></g></g>
<g transform="translate(269,3)"><g transform="translate(2,0)"><ellipse cx="9" cy="16.500" rx="7" ry="1.500" fill="#000" opacity=".15"/><path d="M0.500,6.500L7.500,0.500V4C13,4 16,7.500 15,12.500C14,15.500 11.500,17 8.500,16.500C11.500,15 11.500,9.500 7.500,9.500V13z" fill="#5d93d6" stroke="#2f64ad" stroke-width=".6"/></g><path d="M1,8h6.500v1.300L5.300,12.500L7.500,15.700V17H1v-1.300L3.200,12.500L1,9.300z" fill="#b89a4a" stroke="#6e5a20" stroke-width=".7"/><path d="M2.500,9.500h3.500L4.250,12z" fill="#f3e4b0"/></g>
<rect x="295" y="9" width="7" height="1" fill="#000"/><path d="M295,12h7l-3.5,3.5z" fill="#000"/>
<rect x="312" y="6" width="1" height="13" fill="#9a9a9a"/>
<path d="M1799,10.500h10" stroke="#000" stroke-width="1"/>
<path d="M1844.500,7.500h7v7h-7z M1846.500,7.500v-2h7v7h-2" fill="none" stroke="#000" stroke-width="1"/>
<path d="M1890,5l10,10M1900,5l-10,10" stroke="#000" stroke-width="1.1"/>
<path d="M1870,37.500h9" stroke="#9a9a9a" stroke-width="1"/>
<path d="M1888.500,30.500h6v6h-6z M1890.500,30.500v-2h6v6h-2" fill="none" stroke="#9a9a9a" stroke-width="1"/>
<path d="M1906,28l9,9M1915,28l-9,9" stroke="#9a9a9a" stroke-width="1"/>
<path d="M17,52h9l-4.500,4.500z" fill="#000"/>
<g transform="translate(24,69)"><path d="M1,2h9l2,1.500h-9z" fill="#7a7af0"/><path d="M1.500,4h10v2.300h-10z" fill="#d8d8e4" stroke="#888" stroke-width=".4"/><path d="M1.500,7h10v2.300h-10z" fill="#f4f4f4" stroke="#888" stroke-width=".4"/><path d="M0.500,1.500h9l2,2h-9z" fill="#8c8cf8" stroke="#5a5ad0" stroke-width=".4"/><ellipse cx="10.500" cy="14" rx="7.500" ry="4.800" fill="#b8866a" stroke="#7a5038" stroke-width=".7"/><circle cx="7.500" cy="15.500" r="1.900" fill="#1030e0"/><circle cx="12" cy="15.500" r="1.900" fill="#10b010"/><circle cx="13.500" cy="12" r="1.800" fill="#d01818"/><path d="M18.500,1L10,12" stroke="#a86a28" stroke-width="1.800"/><path d="M10.800,11L8.500,14.500" stroke="#eee" stroke-width="2"/></g>
<g transform="translate(50,69)"><path d="M8,0.500h7l3,3v11h-10z" fill="url(#gdoc)" stroke="#222" stroke-width="1"/><path d="M3,5h7l3,3v9h-10z" fill="url(#gdoc)" stroke="#222" stroke-width="1"/><g transform="translate(0,9)"><g transform="scale(.85)"><g transform="translate(0,0)"><path d="M0.500,7.500C4,2 14,1 19.500,6C15,10 6,10.500 0.500,7.500z" fill="#cdd3e2"/><circle cx="10.300" cy="5.300" r="4.100" fill="#4d6b9f"/><circle cx="10.300" cy="5.300" r="2.100" fill="#17233f"/><circle cx="9.200" cy="4.200" r=".8" fill="#dfe8f8"/><path d="M0.300,7.800C4,1.500 14,0.500 19.700,6" fill="none" stroke="#252d47" stroke-width="2.100"/><path d="M3,3.500l1.200,1.500M6,1.500l.8,1.500M13.500,1l-.5,1.500M16.500,2.200l-1,1.500M18.800,3.800l-1.200,1.300" stroke="#252d47" stroke-width=".8"/><path d="M0.500,7.500C6,10.500 15,10 19.500,6" fill="none" stroke="#a68fa2" stroke-width=".7"/></g></g></g></g>
<g transform="translate(76,69)"><g transform="translate(0,0)"><path d="M0.500,7.500C4,2 14,1 19.500,6C15,10 6,10.500 0.500,7.500z" fill="#cdd3e2"/><circle cx="10.300" cy="5.300" r="4.100" fill="#4d6b9f"/><circle cx="10.300" cy="5.300" r="2.100" fill="#17233f"/><circle cx="9.200" cy="4.200" r=".8" fill="#dfe8f8"/><path d="M0.300,7.800C4,1.500 14,0.500 19.700,6" fill="none" stroke="#252d47" stroke-width="2.100"/><path d="M3,3.500l1.200,1.500M6,1.500l.8,1.500M13.500,1l-.5,1.500M16.500,2.200l-1,1.500M18.800,3.800l-1.200,1.300" stroke="#252d47" stroke-width=".8"/><path d="M0.500,7.500C6,10.500 15,10 19.500,6" fill="none" stroke="#a68fa2" stroke-width=".7"/></g><path d="M0,13.5h9M4.5,9v9" stroke="#57d422" stroke-width="2.4"/><path d="M11,12l6,6" stroke="#3a78d0" stroke-width="1.400"/><path d="M14,11c5,-2 6,4 2,6" fill="none" stroke="#3a78d0" stroke-width="1.500"/></g>
<g transform="translate(102,69)"><g transform="translate(0,0)"><path d="M0.500,7.500C4,2 14,1 19.500,6C15,10 6,10.500 0.500,7.500z" fill="#cdd3e2"/><circle cx="10.300" cy="5.300" r="4.100" fill="#4d6b9f"/><circle cx="10.300" cy="5.300" r="2.100" fill="#17233f"/><circle cx="9.200" cy="4.200" r=".8" fill="#dfe8f8"/><path d="M0.300,7.800C4,1.500 14,0.500 19.700,6" fill="none" stroke="#252d47" stroke-width="2.100"/><path d="M3,3.500l1.200,1.500M6,1.500l.8,1.500M13.500,1l-.5,1.500M16.500,2.200l-1,1.500M18.800,3.800l-1.200,1.300" stroke="#252d47" stroke-width=".8"/><path d="M0.500,7.500C6,10.500 15,10 19.500,6" fill="none" stroke="#a68fa2" stroke-width=".7"/></g><path d="M1,13h9" stroke="#e8dc00" stroke-width="2.600"/><path d="M11,12l6,6" stroke="#3a78d0" stroke-width="1.400"/><path d="M14,11c5,-2 6,4 2,6" fill="none" stroke="#3a78d0" stroke-width="1.500"/></g>
<g transform="translate(128,69)"><g transform="translate(1,-1)"><path d="M0.500,7.500C4,2 14,1 19.500,6C15,10 6,10.500 0.500,7.500z" fill="#cdd3e2"/><circle cx="10.300" cy="5.300" r="4.100" fill="#4d6b9f"/><circle cx="10.300" cy="5.300" r="2.100" fill="#17233f"/><circle cx="9.200" cy="4.200" r=".8" fill="#dfe8f8"/><path d="M0.300,7.800C4,1.500 14,0.500 19.700,6" fill="none" stroke="#252d47" stroke-width="2.100"/><path d="M3,3.500l1.200,1.500M6,1.500l.8,1.500M13.500,1l-.5,1.500M16.500,2.200l-1,1.500M18.800,3.800l-1.200,1.300" stroke="#252d47" stroke-width=".8"/><path d="M0.500,7.500C6,10.500 15,10 19.500,6" fill="none" stroke="#a68fa2" stroke-width=".7"/></g><rect x="-1" y="6.5" width="7" height="13" rx="1.500" fill="#111"/><circle cx="2.5" cy="10.0" r="2.300" fill="#f5c400"/><circle cx="2.5" cy="16.0" r="2.300" fill="#19d219"/><rect x="11" y="6.5" width="7" height="13" rx="1.500" fill="#111"/><circle cx="14.5" cy="10.0" r="2.300" fill="#e8141c"/><circle cx="14.5" cy="16.0" r="2.300" fill="#f5c400"/></g>
<g transform="translate(154,69)"><g transform="translate(0,-1)"><path d="M0.500,7.500C4,2 14,1 19.500,6C15,10 6,10.500 0.500,7.500z" fill="#cdd3e2"/><circle cx="10.300" cy="5.300" r="4.100" fill="#4d6b9f"/><circle cx="10.300" cy="5.300" r="2.100" fill="#17233f"/><circle cx="9.200" cy="4.200" r=".8" fill="#dfe8f8"/><path d="M0.300,7.800C4,1.500 14,0.500 19.700,6" fill="none" stroke="#252d47" stroke-width="2.100"/><path d="M3,3.500l1.200,1.500M6,1.500l.8,1.500M13.500,1l-.5,1.500M16.500,2.200l-1,1.500M18.800,3.800l-1.200,1.300" stroke="#252d47" stroke-width=".8"/><path d="M0.500,7.500C6,10.500 15,10 19.500,6" fill="none" stroke="#a68fa2" stroke-width=".7"/></g><g transform="translate(2,5)"><path d="M1,6C2,1 10,0 13,3.500L15,1.500V8H8.500L10.800,5.800C8.500,3.500 4.500,4 3.500,7z" fill="#49b52c" stroke="#1f8a10" stroke-width=".5"/><path d="M15,8C14,13 6,14 3,10.500L1,12.500V6H7.500L5.200,8.200C7.500,10.500 11.500,10 12.500,7z" fill="#e9d21c" stroke="#a89208" stroke-width=".5"/></g></g>
<g transform="translate(180,69)"><g transform="translate(0,0)"><path d="M0.500,7.500C4,2 14,1 19.500,6C15,10 6,10.500 0.500,7.500z" fill="#cdd3e2"/><circle cx="10.300" cy="5.300" r="4.100" fill="#4d6b9f"/><circle cx="10.300" cy="5.300" r="2.100" fill="#17233f"/><circle cx="9.200" cy="4.200" r=".8" fill="#dfe8f8"/><path d="M0.300,7.800C4,1.500 14,0.500 19.700,6" fill="none" stroke="#252d47" stroke-width="2.100"/><path d="M3,3.500l1.200,1.500M6,1.500l.8,1.500M13.500,1l-.5,1.500M16.500,2.200l-1,1.500M18.800,3.800l-1.200,1.300" stroke="#252d47" stroke-width=".8"/><path d="M0.500,7.500C6,10.500 15,10 19.500,6" fill="none" stroke="#a68fa2" stroke-width=".7"/></g><path d="M0,12.5h9M4.5,8v9" stroke="#57d422" stroke-width="2.4"/><path d="M6,19l6,-8" stroke="#222" stroke-width="1.3"/><path d="M10,16h9" stroke="#e8dc00" stroke-width="2.600"/></g>
<g transform="translate(206,69)"><g transform="translate(0,0)"><path d="M0.500,7.500C4,2 14,1 19.500,6C15,10 6,10.500 0.500,7.500z" fill="#cdd3e2"/><circle cx="10.300" cy="5.300" r="4.100" fill="#4d6b9f"/><circle cx="10.300" cy="5.300" r="2.100" fill="#17233f"/><circle cx="9.200" cy="4.200" r=".8" fill="#dfe8f8"/><path d="M0.300,7.800C4,1.500 14,0.500 19.700,6" fill="none" stroke="#252d47" stroke-width="2.100"/><path d="M3,3.500l1.200,1.500M6,1.500l.8,1.500M13.500,1l-.5,1.500M16.500,2.200l-1,1.500M18.800,3.800l-1.200,1.300" stroke="#252d47" stroke-width=".8"/><path d="M0.500,7.500C6,10.500 15,10 19.500,6" fill="none" stroke="#a68fa2" stroke-width=".7"/></g><path d="M7,13.5h11M12.5,8v11" stroke="#57d422" stroke-width="2.4"/></g>
<g transform="translate(232,69)"><g transform="translate(0,0)"><path d="M0.500,7.500C4,2 14,1 19.500,6C15,10 6,10.500 0.500,7.500z" fill="#cdd3e2"/><circle cx="10.300" cy="5.300" r="4.100" fill="#4d6b9f"/><circle cx="10.300" cy="5.300" r="2.100" fill="#17233f"/><circle cx="9.200" cy="4.200" r=".8" fill="#dfe8f8"/><path d="M0.300,7.800C4,1.500 14,0.500 19.700,6" fill="none" stroke="#252d47" stroke-width="2.100"/><path d="M3,3.500l1.200,1.500M6,1.500l.8,1.500M13.500,1l-.5,1.500M16.500,2.200l-1,1.500M18.800,3.800l-1.200,1.300" stroke="#252d47" stroke-width=".8"/><path d="M0.500,7.500C6,10.500 15,10 19.500,6" fill="none" stroke="#a68fa2" stroke-width=".7"/></g><path d="M7,11h11" stroke="#e8dc00" stroke-width="2.600"/></g>
<rect x="401.500" y="66.500" width="23" height="23" fill="#fdd977" stroke="#e8c766"/>
<g transform="translate(274,69)"><path d="M1,9C1,3 9,0.500 14,4L16,2V9.500H8.500L11.200,6.800C8.500,5 4.500,6 4.500,9.500z" fill="url(#gblue)" stroke="#3a6db8" stroke-width=".5"/><path d="M17,9.500C17,15.500 9,18 4,14.500L2,16.500V9H9.500L6.800,11.700C9.500,13.500 13.500,12.500 13.500,9z" fill="url(#gblue)" stroke="#3a6db8" stroke-width=".5"/></g>
<g transform="translate(305.5,70)"><ellipse cx="5.5" cy="2.6" rx="5.5" ry="2.6" fill="none" stroke="#1c1c24" stroke-width="1"/><path d="M0,2.6V13.4A5.5,2.6 0 0 0 11,13.4V2.6" fill="none" stroke="#1c1c24" stroke-width="1"/><path d="M0,13.4A5.5,2.6 0 0 1 11,13.4" fill="none" stroke="#444" stroke-width=".7"/></g>
<g transform="translate(331.5,70)"><ellipse cx="5.5" cy="2.6" rx="5.5" ry="2.6" fill="none" stroke="#1c1c24" stroke-width="1"/><path d="M0,2.6V13.4A5.5,2.6 0 0 0 11,13.4V2.6" fill="none" stroke="#1c1c24" stroke-width="1"/></g>
<g transform="translate(357.5,70)"><ellipse cx="5.5" cy="2.6" rx="5.5" ry="2.6" fill="none" stroke="#1c1c24" stroke-width="1"/><path d="M0,2.6V13.4A5.5,2.6 0 0 0 11,13.4V2.6" fill="none" stroke="#1c1c24" stroke-width="1"/><path d="M0,13.4A5.5,2.6 0 0 1 11,13.4" fill="none" stroke="#444" stroke-width=".7"/></g>
<g transform="translate(383.5,70)"><path d="M10,15.5l5,0l-4,-3z" fill="#333" opacity=".45"/><path d="M0,2.6V13.4A5.5,2.6 0 0 0 11,13.4V2.6A5.5,2.6 0 0 1 0,2.6z" fill="url(#gcylb)" stroke="#19dcf2" stroke-width="1.100"/><ellipse cx="5.5" cy="2.6" rx="5.5" ry="2.6" fill="#6f9be0" stroke="#19dcf2" stroke-width="1.100"/></g>
<g transform="translate(409.5,70)"><path d="M10,15.5l5,0l-4,-3z" fill="#333" opacity=".45"/><path d="M0,2.6V13.4A5.5,2.6 0 0 0 11,13.4V2.6A5.5,2.6 0 0 1 0,2.6z" fill="url(#gcylb)" stroke="#101830" stroke-width=".9"/><ellipse cx="5.5" cy="2.6" rx="5.5" ry="2.6" fill="#6f9be0" stroke="#101830" stroke-width=".9"/></g>
<g transform="translate(435.5,70)"><path d="M10,15.5l5,0l-4,-3z" fill="#333" opacity=".45"/><path d="M0,2.6V13.4A5.5,2.6 0 0 0 11,13.4V2.6A5.5,2.6 0 0 1 0,2.6z" fill="url(#gcylp)" stroke="#5fe0f0" stroke-width="1"/><ellipse cx="5.5" cy="2.6" rx="5.5" ry="2.6" fill="#e6ecf8" stroke="#5fe0f0" stroke-width="1"/><path d="M0,13.4A5.5,2.6 0 0 1 11,13.4" fill="none" stroke="#8fe6f2" stroke-width=".6"/></g>
<g transform="translate(461.5,70)"><path d="M10,15.5l5,0l-4,-3z" fill="#333" opacity=".45"/><path d="M0,2.6V13.4A5.5,2.6 0 0 0 11,13.4V2.6A5.5,2.6 0 0 1 0,2.6z" fill="url(#gcylp)" stroke="#6c7a96" stroke-width=".9"/><ellipse cx="5.5" cy="2.6" rx="5.5" ry="2.6" fill="#dfe7f6" stroke="#6c7a96" stroke-width=".9"/><path d="M0,13.4A5.5,2.6 0 0 1 11,13.4" fill="none" stroke="#8c9ab6" stroke-width=".6"/></g>
<g transform="translate(487.5,70)"><path d="M0,2.6V13.4A5.5,2.6 0 0 0 11,13.4V2.6A5.5,2.6 0 0 1 0,2.6z" fill="#dfe3ee" opacity=".5"/><ellipse cx="5.5" cy="2.6" rx="5.5" ry="2.6" fill="none" stroke="#333" stroke-width=".9"/><path d="M0,2.6V13.4A5.5,2.6 0 0 0 11,13.4V2.6" fill="none" stroke="#333" stroke-width=".9"/><path d="M2.500,4.500L4,15.500L6,5L8,16L9.500,5" fill="none" stroke="#444" stroke-width=".8"/></g>
<g transform="translate(508,68)"><g transform="translate(1,1)"><path d="M0,2.6V10.4A4.5,2.6 0 0 0 9,10.4V2.6A4.5,2.6 0 0 1 0,2.6z" fill="#e4e8f2" opacity=".55"/><ellipse cx="4.5" cy="2.6" rx="4.5" ry="2.6" fill="#eef1f8" stroke="#333" stroke-width=".9"/><path d="M0,2.6V10.4A4.5,2.6 0 0 0 9,10.4V2.6" fill="none" stroke="#333" stroke-width=".9"/><path d="M0,10.4A4.5,2.6 0 0 1 9,10.4" fill="none" stroke="#444" stroke-width=".7"/></g><g transform="translate(10,6)"><path d="M9,13.5l5,0l-4,-3z" fill="#333" opacity=".45"/><path d="M0,2.6V11.4A5.0,2.6 0 0 0 10,11.4V2.6A5.0,2.6 0 0 1 0,2.6z" fill="url(#gcylb)" stroke="#101830" stroke-width=".9"/><ellipse cx="5.0" cy="2.6" rx="5.0" ry="2.6" fill="#6f9be0" stroke="#101830" stroke-width=".9"/></g><path d="M11,4c2,-2.500 5,-2 6,0l1.500,-1v4h-4l1.300,-1.200c-1,-1.200 -2.500,-1.200 -3.500,0z" fill="#35c22a" stroke="#168a10" stroke-width=".4"/><path d="M9.500,17c-2,2.500 -5,2 -6,0l-1.500,1v-4h4l-1.300,1.200c1,1.200 2.500,1.200 3.500,0z" fill="#35c22a" stroke="#168a10" stroke-width=".4"/></g>
<g transform="translate(534,69)"><g transform="translate(0,0)"><path d="M10,14.5l5,0l-4,-3z" fill="#333" opacity=".45"/><path d="M0,2.6V12.4A5.5,2.6 0 0 0 11,12.4V2.6A5.5,2.6 0 0 1 0,2.6z" fill="url(#gcylb)" stroke="#101830" stroke-width=".9"/><ellipse cx="5.5" cy="2.6" rx="5.5" ry="2.6" fill="#6f9be0" stroke="#101830" stroke-width=".9"/></g><g transform="translate(7,6)"><g transform="scale(.72)"><path d="M1,9C1,3 9,0.500 14,4L16,2V9.500H8.500L11.200,6.800C8.500,5 4.500,6 4.500,9.500z" fill="url(#gblue)" stroke="#3a6db8" stroke-width=".5"/><path d="M17,9.500C17,15.500 9,18 4,14.500L2,16.500V9H9.500L6.800,11.700C9.500,13.500 13.500,12.500 13.500,9z" fill="url(#gblue)" stroke="#3a6db8" stroke-width=".5"/></g></g></g>
<g transform="translate(560,69)"><rect x="1" y="2" width="16" height="12" rx="1" fill="#5f7fae" stroke="#3a557f" stroke-width=".8"/><rect x="2.500" y="3.500" width="13" height="9" fill="#8fb0dc"/><path d="M4,16.500L14,5" stroke="#3d68b8" stroke-width="2.600" stroke-linecap="round"/><path d="M3.500,4.500L15.500,16.500" stroke="#8a8a8a" stroke-width="2.600" stroke-linecap="round"/><path d="M3.500,4.500L15.500,16.500" stroke="#e2e2e2" stroke-width="1.100" stroke-linecap="round"/><circle cx="3.500" cy="4.500" r="2.300" fill="#cfcfcf" stroke="#777" stroke-width=".6"/></g>
<g transform="translate(602,69)"><g transform="translate(0.5,0.5)"><path d="M0,2.500L3,0H9.500L6.500,2.500z" fill="#d8d8d8" stroke="#333" stroke-width=".6"/><path d="M0,2.500H6.500V9H0z" fill="#9a9a9a" stroke="#333" stroke-width=".6"/><path d="M6.500,2.500L9.500,0V6.500L6.500,9z" fill="#707070" stroke="#333" stroke-width=".6"/></g><g transform="translate(9.5,0.5)"><path d="M0,2.500L3,0H9.500L6.500,2.500z" fill="#f4f4f4" stroke="#333" stroke-width=".6"/><path d="M0,2.500H6.500V9H0z" fill="#fafafa" stroke="#333" stroke-width=".6"/><path d="M6.500,2.500L9.500,0V6.500L6.500,9z" fill="#e4e4e4" stroke="#333" stroke-width=".6"/></g><path d="M1,13.5h9M5.5,9v9" stroke="#57d422" stroke-width="2.4"/><path d="M11,12l6,6" stroke="#3a78d0" stroke-width="1.400"/><path d="M14,11c5,-2 6,4 2,6" fill="none" stroke="#3a78d0" stroke-width="1.500"/></g>
<g transform="translate(628,69)"><g transform="translate(0.5,0.5)"><path d="M0,2.500L3,0H9.500L6.500,2.500z" fill="#d8d8d8" stroke="#333" stroke-width=".6"/><path d="M0,2.500H6.500V9H0z" fill="#9a9a9a" stroke="#333" stroke-width=".6"/><path d="M6.500,2.500L9.500,0V6.500L6.500,9z" fill="#707070" stroke="#333" stroke-width=".6"/></g><g transform="translate(9.5,0.5)"><path d="M0,2.500L3,0H9.500L6.500,2.500z" fill="#f4f4f4" stroke="#333" stroke-width=".6"/><path d="M0,2.500H6.500V9H0z" fill="#fafafa" stroke="#333" stroke-width=".6"/><path d="M6.500,2.500L9.500,0V6.500L6.500,9z" fill="#e4e4e4" stroke="#333" stroke-width=".6"/></g><rect x="-1" y="6.5" width="7" height="13" rx="1.500" fill="#111"/><circle cx="2.5" cy="10.0" r="2.300" fill="#f5c400"/><circle cx="2.5" cy="16.0" r="2.300" fill="#19d219"/><rect x="11" y="6.5" width="7" height="13" rx="1.500" fill="#111"/><circle cx="14.5" cy="10.0" r="2.300" fill="#e8141c"/><circle cx="14.5" cy="16.0" r="2.300" fill="#f5c400"/></g>
<g transform="translate(654,69)"><g transform="translate(0.5,0.5)"><path d="M0,2.500L3,0H9.500L6.500,2.500z" fill="#d8d8d8" stroke="#333" stroke-width=".6"/><path d="M0,2.500H6.500V9H0z" fill="#9a9a9a" stroke="#333" stroke-width=".6"/><path d="M6.500,2.500L9.500,0V6.500L6.500,9z" fill="#707070" stroke="#333" stroke-width=".6"/></g><g transform="translate(9.5,0.5)"><path d="M0,2.500L3,0H9.500L6.500,2.500z" fill="#f4f4f4" stroke="#333" stroke-width=".6"/><path d="M0,2.500H6.500V9H0z" fill="#fafafa" stroke="#333" stroke-width=".6"/><path d="M6.500,2.500L9.500,0V6.500L6.500,9z" fill="#e4e4e4" stroke="#333" stroke-width=".6"/></g><g transform="translate(2,5)"><path d="M1,6C2,1 10,0 13,3.500L15,1.500V8H8.500L10.800,5.800C8.500,3.500 4.500,4 3.500,7z" fill="#49b52c" stroke="#1f8a10" stroke-width=".5"/><path d="M15,8C14,13 6,14 3,10.500L1,12.500V6H7.500L5.200,8.200C7.500,10.500 11.500,10 12.500,7z" fill="#e9d21c" stroke="#a89208" stroke-width=".5"/></g></g>
<g transform="translate(680,69)"><g transform="translate(0.5,0.5)"><path d="M0,2.500L3,0H9.500L6.500,2.500z" fill="#d8d8d8" stroke="#333" stroke-width=".6"/><path d="M0,2.500H6.500V9H0z" fill="#9a9a9a" stroke="#333" stroke-width=".6"/><path d="M6.500,2.500L9.500,0V6.500L6.500,9z" fill="#707070" stroke="#333" stroke-width=".6"/></g><g transform="translate(9.5,0.5)"><path d="M0,2.500L3,0H9.500L6.500,2.500z" fill="#f4f4f4" stroke="#333" stroke-width=".6"/><path d="M0,2.500H6.500V9H0z" fill="#fafafa" stroke="#333" stroke-width=".6"/><path d="M6.500,2.500L9.500,0V6.500L6.500,9z" fill="#e4e4e4" stroke="#333" stroke-width=".6"/></g><path d="M0,12.5h9M4.5,8v9" stroke="#57d422" stroke-width="2.4"/><path d="M6,19l6,-8" stroke="#222" stroke-width="1.3"/><path d="M10,16h9" stroke="#e8dc00" stroke-width="2.600"/></g>
<g transform="translate(711.5,70)"><path d="M10,15.5l5,0l-4,-3z" fill="#333" opacity=".45"/><path d="M0,2.6V13.4A5.5,2.6 0 0 0 11,13.4V2.6A5.5,2.6 0 0 1 0,2.6z" fill="url(#gcylb)" stroke="#101830" stroke-width=".9"/><ellipse cx="5.5" cy="2.6" rx="5.5" ry="2.6" fill="#6f9be0" stroke="#101830" stroke-width=".9"/><path d="M5.500,5v10" stroke="#fff" stroke-width="1.2" stroke-dasharray="3 2"/></g>
<g transform="translate(737.5,70)"><path d="M10,15.5l5,0l-4,-3z" fill="#333" opacity=".45"/><path d="M0,2.6V13.4A5.5,2.6 0 0 0 11,13.4V2.6A5.5,2.6 0 0 1 0,2.6z" fill="url(#gcylp)" stroke="#101830" stroke-width=".9"/><path d="M4,5.500V16M7.500,5.500V16" stroke="#e8d820" stroke-width="1.500"/><path d="M1.500,5V15M9.800,5V15" stroke="#3556a8" stroke-width="1.600"/><ellipse cx="5.5" cy="2.6" rx="5.5" ry="2.6" fill="#6f9be0" stroke="#101830" stroke-width=".9"/></g>
<g transform="translate(762.5,70)"><path d="M10,15.5l5,0l-4,-3z" fill="#333" opacity=".45"/><path d="M0,2.6V13.4A5.5,2.6 0 0 0 11,13.4V2.6A5.5,2.6 0 0 1 0,2.6z" fill="url(#gcylp)" stroke="#5fe0f0" stroke-width="1"/><ellipse cx="5.5" cy="2.6" rx="5.5" ry="2.6" fill="#e6ecf8" stroke="#5fe0f0" stroke-width="1"/><path d="M0,13.4A5.5,2.6 0 0 1 11,13.4" fill="none" stroke="#8fe6f2" stroke-width=".6"/><path d="M3,9l3,4l6,-8" fill="none" stroke="#3fc22a" stroke-width="2.6"/></g>
<g transform="translate(787.5,70)"><ellipse cx="0" cy="14" rx="5" ry="1.500" fill="#555" opacity=".6"/><path d="M10,15.5l5,0l-4,-3z" fill="#333" opacity=".45"/><path d="M0,2.6V13.4A5.5,2.6 0 0 0 11,13.4V2.6A5.5,2.6 0 0 1 0,2.6z" fill="url(#gcylp)" stroke="#5fe0f0" stroke-width="1"/><ellipse cx="5.5" cy="2.6" rx="5.5" ry="2.6" fill="#e6ecf8" stroke="#5fe0f0" stroke-width="1"/><path d="M0,13.4A5.5,2.6 0 0 1 11,13.4" fill="none" stroke="#8fe6f2" stroke-width=".6"/><rect x="8" y="-2" width="5" height="5" fill="none" stroke="#d8951f" stroke-width="1.2"/><circle cx="10.5" cy="2" r="1.2" fill="#e04030"/></g>
<g transform="translate(815.5,70)"><ellipse cx="5.5" cy="2.6" rx="5.5" ry="2.6" fill="none" stroke="#5a96e0" stroke-width=".9"/><path d="M0,2.6V13.4A5.5,2.6 0 0 0 11,13.4V2.6" fill="none" stroke="#5a96e0" stroke-width=".9"/><path d="M2.500,4.500L4,15.500L6,5L8,16L9.500,5" fill="none" stroke="#7aaef0" stroke-width=".8"/></g>
<g transform="translate(836,69)"><path d="M1,5L10,1L19,5L10,9z" fill="#5a8fe0" stroke="#111" stroke-width=".9"/><path d="M1,5L10,9V18.500L3,12z" fill="#2f5ec0" stroke="#111" stroke-width=".9"/><path d="M19,5L10,9V18.500L17,12z" fill="#1c3a90" stroke="#111" stroke-width=".9"/></g>
<g transform="translate(878,69)"><path d="M1,3h4M3,1v4M1,7h4" stroke="#000" stroke-width="1"/><g transform="translate(3,1) scale(1.0)"><path d="M5.200,9.800L0.800,14.200" stroke="#8a8a8a" stroke-width="2.800" stroke-linecap="round"/><path d="M5.200,9.800L0.800,14.200" stroke="#dedede" stroke-width="1.300" stroke-linecap="round"/><circle cx="8.500" cy="6" r="5" fill="url(#glens)" stroke="#9aa4b4" stroke-width="1.500"/><circle cx="8.500" cy="6" r="3.600" fill="none" stroke="#6f9ad6" stroke-width=".7"/></g><g transform="translate(10,10)"><path d="M0,2.25L4.5,0L9,2.25L4.5,4.5z" fill="#cfcfcf" stroke="#555" stroke-width=".5"/><path d="M0,2.25L4.5,4.5V9L0,6.75z" fill="#9a9a9a" stroke="#555" stroke-width=".5"/><path d="M9,2.25L4.5,4.5V9L9,6.75z" fill="#6e6e6e" stroke="#555" stroke-width=".5"/></g></g>
<g transform="translate(904,69)"><g transform="translate(3,1) scale(1.0)"><path d="M5.200,9.800L0.800,14.200" stroke="#8a8a8a" stroke-width="2.800" stroke-linecap="round"/><path d="M5.200,9.800L0.800,14.200" stroke="#dedede" stroke-width="1.300" stroke-linecap="round"/><circle cx="8.500" cy="6" r="5" fill="url(#glens)" stroke="#9aa4b4" stroke-width="1.500"/><circle cx="8.500" cy="6" r="3.600" fill="none" stroke="#6f9ad6" stroke-width=".7"/></g><g transform="translate(10,10)"><path d="M0,2.25L4.5,0L9,2.25L4.5,4.5z" fill="#cfcfcf" stroke="#555" stroke-width=".5"/><path d="M0,2.25L4.5,4.5V9L0,6.75z" fill="#9a9a9a" stroke="#555" stroke-width=".5"/><path d="M9,2.25L4.5,4.5V9L9,6.75z" fill="#6e6e6e" stroke="#555" stroke-width=".5"/></g><path d="M1,1l2.8,0M1,1l0,2.8M1,1l3.4,3.4" stroke="#36c226" stroke-width="1.400"/><path d="M19,1l-2.8,0M19,1l0,2.8M19,1l-3.4,3.4" stroke="#36c226" stroke-width="1.400"/><path d="M1,19l2.8,0M1,19l0,-2.8M1,19l3.4,-3.4" stroke="#36c226" stroke-width="1.400"/><path d="M19,19l-2.8,0M19,19l0,-2.8M19,19l-3.4,-3.4" stroke="#36c226" stroke-width="1.400"/></g>
<g transform="translate(930,69)"><rect x="3.500" y="4.500" width="13" height="11" fill="#eef2fb" stroke="#333"/><text x="10" y="13.500" font-size="8" font-weight="bold" text-anchor="middle" fill="#2a2a8a" font-family="Liberation Sans,sans-serif">1:1</text><path d="M0,1l2.8,0M0,1l0,2.8M0,1l3.4,3.4" stroke="#36c226" stroke-width="1.400"/><path d="M20,1l-2.8,0M20,1l0,2.8M20,1l-3.4,3.4" stroke="#36c226" stroke-width="1.400"/><path d="M0,19l2.8,0M0,19l0,-2.8M0,19l3.4,-3.4" stroke="#36c226" stroke-width="1.400"/><path d="M20,19l-2.8,0M20,19l0,-2.8M20,19l-3.4,-3.4" stroke="#36c226" stroke-width="1.400"/></g>
<g transform="translate(956,69)"><path d="M5,16L16,4" stroke="#2db52d" stroke-width="2.2"/><path d="M18,2l-6,1.500l4.500,4.500z" fill="#2db52d" stroke="#1c8a1c" stroke-width=".6"/><circle cx="4.500" cy="16" r="2.800" fill="url(#gball)" stroke="#555" stroke-width=".5"/></g>
<g transform="translate(982,69)"><path d="M3,9C3,4 9,1.500 13.500,4.500L15.500,2.500V9.500H8.500L11,7C8.500,5 5.500,6.500 5.500,9.500z" fill="#35b52c" stroke="#137a0d" stroke-width=".6"/><path d="M17,10.500C17,15.500 11,18 6.500,15L4.500,17V10H11.500L9,12.500C11.500,14.500 14.500,13 14.500,10z" fill="#35b52c" stroke="#137a0d" stroke-width=".6"/></g>
<g transform="translate(1008,69)"><g transform="translate(0,-1)"><path d="M0.500,7.500C4,2 14,1 19.500,6C15,10 6,10.500 0.500,7.500z" fill="#cdd3e2"/><circle cx="10.300" cy="5.300" r="4.100" fill="#4d6b9f"/><circle cx="10.300" cy="5.300" r="2.100" fill="#17233f"/><circle cx="9.200" cy="4.200" r=".8" fill="#dfe8f8"/><path d="M0.300,7.800C4,1.500 14,0.500 19.700,6" fill="none" stroke="#252d47" stroke-width="2.100"/><path d="M3,3.500l1.200,1.500M6,1.500l.8,1.500M13.500,1l-.5,1.500M16.500,2.200l-1,1.500M18.800,3.800l-1.200,1.300" stroke="#252d47" stroke-width=".8"/><path d="M0.500,7.500C6,10.500 15,10 19.500,6" fill="none" stroke="#a68fa2" stroke-width=".7"/></g><circle cx="10" cy="13" r="6.500" fill="url(#gsmile)" stroke="#c79a16" stroke-width=".6"/><circle cx="7.800" cy="11.500" r=".9" fill="#5a3a00"/><circle cx="12.200" cy="11.500" r=".9" fill="#5a3a00"/><path d="M6.800,14.500q3.200,3 6.400,0" fill="none" stroke="#5a3a00" stroke-width=".9"/></g>
<g transform="translate(1052,69)"><path d="M1,11L10,6L19,11L10,17z" fill="#e4ebf8" stroke="#b4c0d8" stroke-width=".6"/><path d="M5.500,12V2" stroke="#1c6ff0" stroke-width="1.800"/><path d="M5.500,0l-2.500,4h5z" fill="#1c6ff0"/><path d="M5.500,12L13,6.500" stroke="#28b428" stroke-width="1.800"/><path d="M15.500,4.500l-4.500,1l2.500,3z" fill="#28b428"/><path d="M5.500,12L13,17" stroke="#e02020" stroke-width="1.800"/><path d="M15.500,19l-4.500,-1l2.500,-3z" fill="#e02020"/><circle cx="5.500" cy="12" r="2" fill="url(#gball)" stroke="#666" stroke-width=".4"/></g>
<g transform="translate(1078,69)"><g transform="translate(8,0)"><path d="M0,6L5,3.500L10,6L5,9z" fill="#e4ebf8" stroke="#b4c0d8" stroke-width=".5"/><path d="M4,6.500V1" stroke="#1c6ff0" stroke-width="1.200"/><path d="M4,-0.500l-1.500,2.500h3z" fill="#1c6ff0"/><path d="M4,6.500L8,4" stroke="#28b428" stroke-width="1.100"/><path d="M4,6.500L8,9" stroke="#e02020" stroke-width="1.100"/></g><path d="M2,16L9,9" stroke="#2db52d" stroke-width="3"/><path d="M12,6l-6.500,1.500l5,5z" fill="#2db52d" stroke="#1c8a1c" stroke-width=".5"/><rect x="9.500" y="13.500" width="8" height="5" fill="#e2e2e2" stroke="#8a8a8a" stroke-width=".9"/><circle cx="3" cy="16" r="2.200" fill="#9a9a9a"/></g>
<g transform="translate(1104,69)"><g transform="translate(9,0)"><path d="M0,6L5,3.500L10,6L5,9z" fill="#e4ebf8" stroke="#b4c0d8" stroke-width=".5"/><path d="M4,6.500V1" stroke="#1c6ff0" stroke-width="1.200"/><path d="M4,-0.500l-1.500,2.500h3z" fill="#1c6ff0"/><path d="M4,6.500L8,4" stroke="#28b428" stroke-width="1.100"/><path d="M4,6.500L8,9" stroke="#e02020" stroke-width="1.100"/></g><path d="M3,9L9,15" stroke="#2db52d" stroke-width="3"/><path d="M0.500,6.500l1.500,6.500l5,-5z" fill="#2db52d" stroke="#1c8a1c" stroke-width=".5"/><path d="M12,18l-6.500,-1.500l5,-5z" fill="#2db52d" stroke="#1c8a1c" stroke-width=".5"/></g>
<g transform="translate(1147,69)"><rect x="0.500" y="0.500" width="19" height="19" fill="#555"/><rect x="1.0" y="1.0" width="5.600" height="5.600" fill="#00c8f0"/><rect x="7.2" y="1.0" width="5.600" height="5.600" fill="#f0a000"/><rect x="13.4" y="1.0" width="5.600" height="5.600" fill="#00d800"/><rect x="1.0" y="7.2" width="5.600" height="5.600" fill="#f07800"/><rect x="7.2" y="7.2" width="5.600" height="5.600" fill="#a05a10"/><rect x="13.4" y="7.2" width="5.600" height="5.600" fill="#f000f0"/><rect x="1.0" y="13.4" width="5.600" height="5.600" fill="#0000e8"/><rect x="7.2" y="13.4" width="5.600" height="5.600" fill="#00a800"/><rect x="13.4" y="13.4" width="5.600" height="5.600" fill="#808080"/></g>
<g transform="translate(1173,69)"><rect x="2" y="0.500" width="15" height="19" fill="#e8eefa" stroke="#7890b8" stroke-width="1"/><rect x="4" y="2.500" width="11" height="1.500" fill="#f0b040"/><rect x="4" y="5" width="11" height="1.200" fill="#8ab0e8"/><rect x="4.5" y="8.0" width="3" height="3" fill="#f0a000"/><rect x="8.1" y="8.0" width="3" height="3" fill="#00c8f0"/><rect x="11.7" y="8.0" width="3" height="3" fill="#00d800"/><rect x="4.5" y="11.6" width="3" height="3" fill="#f000f0"/><rect x="8.1" y="11.6" width="3" height="3" fill="#e02020"/><rect x="11.7" y="11.6" width="3" height="3" fill="#0000e8"/><rect x="4.5" y="15.2" width="3" height="3" fill="#00a800"/><rect x="8.1" y="15.2" width="3" height="3" fill="#808080"/><rect x="11.7" y="15.2" width="3" height="3" fill="#f07800"/></g>
<g transform="translate(1199,69)"><circle cx="10" cy="10" r="9.500" fill="#5a8a3a" stroke="#3c6a22" stroke-width=".8"/><circle cx="10" cy="10" r="7.800" fill="#78a854"/><path d="M5,15.500L14,5.500" stroke="#3d68b8" stroke-width="2.800" stroke-linecap="round"/><path d="M5,5L15.500,15.500" stroke="#8a8a8a" stroke-width="2.800" stroke-linecap="round"/><path d="M5,5L15.500,15.500" stroke="#ececec" stroke-width="1.300" stroke-linecap="round"/><circle cx="5" cy="5" r="2.300" fill="#dcdcdc" stroke="#777" stroke-width=".6"/><path d="M13,4l3,-2l2,2l-2,3z" fill="#dcdcdc"/></g>
<g transform="translate(1225,69)"><rect x="0.500" y="0.500" width="19" height="19" fill="#cfe0f6" stroke="#4a68a0" stroke-width="1"/><rect x="1" y="1" width="18" height="3.500" fill="#2a58b0"/><rect x="2" y="6" width="2.500" height="2" fill="#e0a020"/><rect x="2" y="9.500" width="2.500" height="2" fill="#e0a020"/><rect x="2" y="13" width="2.500" height="2" fill="#e0a020"/><rect x="6" y="6" width="2.500" height="2" fill="#e0a020"/><rect x="10" y="6" width="2.500" height="2" fill="#e0a020"/><path d="M7,17.500L15,8.500" stroke="#3d68b8" stroke-width="2.400" stroke-linecap="round"/><path d="M7,9L16.500,17.500" stroke="#8a8a8a" stroke-width="2.400" stroke-linecap="round"/><path d="M7,9L16.500,17.500" stroke="#ececec" stroke-width="1" stroke-linecap="round"/></g>
<g transform="translate(1251,69)"><rect x="2" y="2" width="16" height="16" fill="none" stroke="#223" stroke-width="1.400" stroke-dasharray="1.500 2.200"/><path d="M6,12c1,-4 5,-7 9,-7l4,2v3h-5l-3,4z" fill="#f0c070" stroke="#a87830" stroke-width=".7"/><circle cx="5.500" cy="14.500" r="3" fill="#fff8a0" stroke="#2a58d0" stroke-width="1"/><path d="M5.500,12.500v4M3.500,14.500h4" stroke="#2a58d0" stroke-width=".9"/></g>
<g transform="translate(1277,69)"><path d="M5,1L19,3L15,17L1,16z" fill="#e06868" stroke="#2a58d0" stroke-width="1.600"/><path d="M9,2L5,16.500M13,2.500L9.500,17M16.500,3L13,17M4,5.500L18,7M3,9.500L17,11M2,13L16,14.500" stroke="#f4c0c0" stroke-width=".8"/></g>
</svg>
<div class="vbtn" style="left:64px;top:113px"></div>
<div class="vbtn" style="left:92px;top:113px"></div>
<div class="vbtn" style="left:120px;top:113px"></div>
<div class="vbtn" style="left:148px;top:113px"></div>
<div class="vbtn" style="left:176px;top:113px"></div>
<div class="vbtn" style="left:204px;top:113px"></div>
<div class="vbtn" style="left:232px;top:113px"></div>
<div class="vbtn" style="left:260px;top:113px"></div>
<div class="vbtn" style="left:288px;top:113px"></div>
<div class="vbtn" style="left:316px;top:113px"></div>
<div class="vbtn" style="left:344px;top:113px"></div>
<div class="vbtn" style="left:64px;top:141px"></div>
<div class="vbtn" style="left:64px;top:169px"></div>
<div class="vbtn sel" style="left:64px;top:197px"></div>
<div class="vbtn" style="left:64px;top:225px"></div>
<div class="vbtn" style="left:64px;top:253px"></div>
<svg width="1920" height="1048" style="left:0;top:0" viewBox="0 0 1920 1048">
<g transform="translate(64,113)"><rect x="3" y="4" width="18" height="3.600" rx=".8" fill="#3a568c"/><rect x="3.500" y="4.4" width="17" height="1" fill="#5874a8"/><rect x="3" y="10.2" width="18" height="3.600" rx=".8" fill="#3a568c"/><rect x="3.500" y="10.6" width="17" height="1" fill="#5874a8"/><rect x="3" y="16.4" width="18" height="3.600" rx=".8" fill="#3a568c"/><rect x="3.500" y="16.799999999999997" width="17" height="1" fill="#5874a8"/></g>
<g transform="translate(92,113)"><rect x="6.500" y="6.500" width="11" height="11" fill="url(#gwhiteblue)" stroke="#666" stroke-width=".8"/><path d="M2.5,2.5l2.8,0M2.5,2.5l0,2.8M2.5,2.5l3.4,3.4" stroke="#36c226" stroke-width="1.400"/><path d="M21.5,2.5l-2.8,0M21.5,2.5l0,2.8M21.5,2.5l-3.4,3.4" stroke="#36c226" stroke-width="1.400"/><path d="M2.5,21.5l2.8,0M2.5,21.5l0,-2.8M2.5,21.5l3.4,-3.4" stroke="#36c226" stroke-width="1.400"/><path d="M21.5,21.5l-2.8,0M21.5,21.5l0,-2.8M21.5,21.5l-3.4,-3.4" stroke="#36c226" stroke-width="1.400"/></g>
<g transform="translate(120,113)"><g opacity=".5"><g transform="translate(1,4) scale(0.9)"><path d="M5.200,9.800L0.800,14.200" stroke="#8a8a8a" stroke-width="2.800" stroke-linecap="round"/><path d="M5.200,9.800L0.800,14.200" stroke="#dedede" stroke-width="1.300" stroke-linecap="round"/><circle cx="8.500" cy="6" r="5" fill="url(#glens)" stroke="#9aa4b4" stroke-width="1.500"/><circle cx="8.500" cy="6" r="3.600" fill="none" stroke="#6f9ad6" stroke-width=".7"/></g></g><g opacity=".7"><g transform="translate(3,4) scale(0.95)"><path d="M5.200,9.800L0.800,14.200" stroke="#8a8a8a" stroke-width="2.800" stroke-linecap="round"/><path d="M5.200,9.800L0.800,14.200" stroke="#dedede" stroke-width="1.300" stroke-linecap="round"/><circle cx="8.500" cy="6" r="5" fill="url(#glens)" stroke="#9aa4b4" stroke-width="1.500"/><circle cx="8.500" cy="6" r="3.600" fill="none" stroke="#6f9ad6" stroke-width=".7"/></g></g><g transform="translate(6,3) scale(1.05)"><path d="M5.200,9.800L0.800,14.200" stroke="#8a8a8a" stroke-width="2.800" stroke-linecap="round"/><path d="M5.200,9.800L0.800,14.200" stroke="#dedede" stroke-width="1.300" stroke-linecap="round"/><circle cx="8.500" cy="6" r="5" fill="url(#glens)" stroke="#9aa4b4" stroke-width="1.500"/><circle cx="8.500" cy="6" r="3.600" fill="none" stroke="#6f9ad6" stroke-width=".7"/></g></g>
<g transform="translate(148,113)"><path d="M2,14L10,9L20,13L12,20z" fill="none" stroke="#5a5a6a" stroke-width=".6"/><path d="M10.500,14V5" stroke="#1c6ff0" stroke-width="2"/><path d="M10.500,2l-2.500,4h5z" fill="#1c6ff0"/><path d="M10.500,14L17,9.500" stroke="#28b428" stroke-width="1.800"/><path d="M20,7.500l-4.500,.8l2.300,3.200z" fill="#28b428"/><path d="M10.500,14L17,19" stroke="#e02020" stroke-width="1.800"/><path d="M20,21.500l-4.800,-1l2.600,-3.200z" fill="#e02020"/><circle cx="10.500" cy="14" r="1.900" fill="url(#gball)" stroke="#444" stroke-width=".4"/></g>
<g transform="translate(176,113)"><path d="M12,2.5 20.5,6.5L12,10.5L3.5,6.5z M3.5,6.5L3.5,17L12,21.5L20.5,17L20.5,6.5 M12,10.5L12,21.5" fill="none" stroke="#000" stroke-width="1.300" stroke-linejoin="round"/><path d="M12,2.5L12,13L3.5,17M12,13L20.5,17" fill="none" stroke="#000" stroke-width="1.100"/><polygon points="12,2.5 20.5,6.5 12,10.5 3.5,6.5" fill="url(#ggreen2)" stroke="#0c8a08" stroke-width=".6"/><path d="M12,2.5 20.5,6.5L12,10.5L3.5,6.5z M3.5,6.5L3.5,17L12,21.5L20.5,17L20.5,6.5 M12,10.5L12,21.5" fill="none" stroke="#000" stroke-width="1.300" stroke-linejoin="round"/></g>
<g transform="translate(204,113)"><polygon points="12,13 20.5,17 12,21.5 3.5,17" fill="url(#ggreen2)" stroke="#0c8a08" stroke-width=".5"/><path d="M12,2.5 20.5,6.5L12,10.5L3.5,6.5z M3.5,6.5L3.5,17L12,21.5L20.5,17L20.5,6.5 M12,10.5L12,21.5" fill="none" stroke="#000" stroke-width="1.300" stroke-linejoin="round"/><path d="M12,2.5L12,13L3.5,17M12,13L20.5,17" fill="none" stroke="#000" stroke-width="1.100"/></g>
<g transform="translate(232,113)"><polygon points="3.5,6.5 12,2.5 12,13 3.5,17" fill="url(#ggreen2)" stroke="#0c8a08" stroke-width=".5"/><path d="M12,2.5 20.5,6.5L12,10.5L3.5,6.5z M3.5,6.5L3.5,17L12,21.5L20.5,17L20.5,6.5 M12,10.5L12,21.5" fill="none" stroke="#000" stroke-width="1.300" stroke-linejoin="round"/><path d="M12,2.5L12,13L3.5,17M12,13L20.5,17" fill="none" stroke="#000" stroke-width="1.100"/></g>
<g transform="translate(260,113)"><path d="M12,2.5 20.5,6.5L12,10.5L3.5,6.5z M3.5,6.5L3.5,17L12,21.5L20.5,17L20.5,6.5 M12,10.5L12,21.5" fill="none" stroke="#000" stroke-width="1.300" stroke-linejoin="round"/><path d="M12,2.5L12,13L3.5,17M12,13L20.5,17" fill="none" stroke="#000" stroke-width="1.100"/><polygon points="12,10.5 20.5,6.5 20.5,17 12,21.5" fill="url(#ggreen2)" stroke="#0c8a08" stroke-width=".6"/><path d="M12,2.5 20.5,6.5L12,10.5L3.5,6.5z M3.5,6.5L3.5,17L12,21.5L20.5,17L20.5,6.5 M12,10.5L12,21.5" fill="none" stroke="#000" stroke-width="1.300" stroke-linejoin="round"/></g>
<g transform="translate(288,113)"><path d="M12,2.5 20.5,6.5L12,10.5L3.5,6.5z M3.5,6.5L3.5,17L12,21.5L20.5,17L20.5,6.5 M12,10.5L12,21.5" fill="none" stroke="#000" stroke-width="1.300" stroke-linejoin="round"/><path d="M12,2.5L12,13L3.5,17M12,13L20.5,17" fill="none" stroke="#000" stroke-width="1.100"/><polygon points="3.5,6.5 12,10.5 12,21.5 3.5,17" fill="url(#ggreen2)" stroke="#0c8a08" stroke-width=".6"/><path d="M12,2.5 20.5,6.5L12,10.5L3.5,6.5z M3.5,6.5L3.5,17L12,21.5L20.5,17L20.5,6.5 M12,10.5L12,21.5" fill="none" stroke="#000" stroke-width="1.300" stroke-linejoin="round"/></g>
<g transform="translate(316,113)"><polygon points="12,2.5 20.5,6.5 20.5,17 12,13" fill="url(#ggreen2)" stroke="#0c8a08" stroke-width=".5"/><path d="M12,2.5 20.5,6.5L12,10.5L3.5,6.5z M3.5,6.5L3.5,17L12,21.5L20.5,17L20.5,6.5 M12,10.5L12,21.5" fill="none" stroke="#000" stroke-width="1.300" stroke-linejoin="round"/><path d="M12,2.5L12,13L3.5,17M12,13L20.5,17" fill="none" stroke="#000" stroke-width="1.100"/></g>
<g transform="translate(344,113)"><polygon points="12,2.5 20.5,6.5 12,10.5 3.5,6.5" fill="#52e032"/><polygon points="3.5,6.5 12,10.5 12,21.5 3.5,17" fill="#2fc21c"/><polygon points="12,10.5 20.5,6.5 20.5,17 12,21.5" fill="#1a9a10"/><path d="M12,2.5 20.5,6.5L20.5,17L12,21.5L3.5,17L3.5,6.5z" fill="none" stroke="#0c6a08" stroke-width=".8"/><path d="M3.5,6.5L12,10.5L20.5,6.5M12,10.5L12,21.5" fill="none" stroke="#8af070" stroke-width=".7"/></g>
<g transform="translate(71,145.5)"><ellipse cx="5.0" cy="2.6" rx="5.0" ry="2.6" fill="none" stroke="#1c1c24" stroke-width="1"/><path d="M0,2.6V12.4A5.0,2.6 0 0 0 10,12.4V2.6" fill="none" stroke="#1c1c24" stroke-width="1"/><path d="M0,12.4A5.0,2.6 0 0 1 10,12.4" fill="none" stroke="#444" stroke-width=".7"/></g>
<g transform="translate(71,173.5)"><ellipse cx="5.0" cy="2.6" rx="5.0" ry="2.6" fill="none" stroke="#1c1c24" stroke-width="1"/><path d="M0,2.6V12.4A5.0,2.6 0 0 0 10,12.4V2.6" fill="none" stroke="#1c1c24" stroke-width="1"/></g>
<g transform="translate(71,201.5)"><path d="M9,14.5l5,0l-4,-3z" fill="#333" opacity=".45"/><path d="M0,2.6V12.4A5.0,2.6 0 0 0 10,12.4V2.6A5.0,2.6 0 0 1 0,2.6z" fill="url(#gcylb)" stroke="#101830" stroke-width=".9"/><ellipse cx="5.0" cy="2.6" rx="5.0" ry="2.6" fill="#6f9be0" stroke="#101830" stroke-width=".9"/></g>
<g transform="translate(71,229.5)"><path d="M9,14.5l5,0l-4,-3z" fill="#333" opacity=".45"/><path d="M0,2.6V12.4A5.0,2.6 0 0 0 10,12.4V2.6A5.0,2.6 0 0 1 0,2.6z" fill="url(#gcylp)" stroke="#6c7a96" stroke-width=".9"/><ellipse cx="5.0" cy="2.6" rx="5.0" ry="2.6" fill="#dfe7f6" stroke="#6c7a96" stroke-width=".9"/><path d="M0,12.4A5.0,2.6 0 0 1 10,12.4" fill="none" stroke="#8c9ab6" stroke-width=".6"/></g>
<g transform="translate(71,257.5)"><ellipse cx="5.0" cy="2.6" rx="5.0" ry="2.6" fill="none" stroke="#333" stroke-width=".9"/><path d="M0,2.6V12.4A5.0,2.6 0 0 0 10,12.4V2.6" fill="none" stroke="#333" stroke-width=".9"/><path d="M2.500,4.500L4,15.500L6,5L8,16L9.500,5" fill="none" stroke="#444" stroke-width=".8"/></g>
<g transform="translate(8,133)"><g opacity=".45"><g transform="translate(-1,3) scale(0.9)"><path d="M5.200,9.800L0.800,14.200" stroke="#8a8a8a" stroke-width="2.800" stroke-linecap="round"/><path d="M5.200,9.800L0.800,14.200" stroke="#dedede" stroke-width="1.300" stroke-linecap="round"/><circle cx="8.500" cy="6" r="5" fill="url(#glens)" stroke="#9aa4b4" stroke-width="1.500"/><circle cx="8.500" cy="6" r="3.600" fill="none" stroke="#6f9ad6" stroke-width=".7"/></g></g><g opacity=".65"><g transform="translate(1,3) scale(0.95)"><path d="M5.200,9.800L0.800,14.200" stroke="#8a8a8a" stroke-width="2.800" stroke-linecap="round"/><path d="M5.200,9.800L0.800,14.200" stroke="#dedede" stroke-width="1.300" stroke-linecap="round"/><circle cx="8.500" cy="6" r="5" fill="url(#glens)" stroke="#9aa4b4" stroke-width="1.500"/><circle cx="8.500" cy="6" r="3.600" fill="none" stroke="#6f9ad6" stroke-width=".7"/></g></g><g transform="translate(4,2) scale(1.05)"><path d="M5.200,9.800L0.800,14.200" stroke="#8a8a8a" stroke-width="2.800" stroke-linecap="round"/><path d="M5.200,9.800L0.800,14.200" stroke="#dedede" stroke-width="1.300" stroke-linecap="round"/><circle cx="8.500" cy="6" r="5" fill="url(#glens)" stroke="#9aa4b4" stroke-width="1.500"/><circle cx="8.500" cy="6" r="3.600" fill="none" stroke="#6f9ad6" stroke-width=".7"/></g></g>
<g transform="translate(34,133)"><path d="M2,2L13,17M8,1L16,12" stroke="#2a68d8" stroke-width="1.400" stroke-dasharray="4 1.500"/><g transform="translate(1,0)"><ellipse cx="9" cy="17" rx="7" ry="1.600" fill="#000" opacity=".3"/><path d="M4,16L5,12L15,1.500L17.500,4L7.500,14.500z" fill="#d89a3a" stroke="#8a5a18" stroke-width=".6"/><path d="M4,16L5,12L7.500,14.500z" fill="#f4dcb0"/><path d="M4,16l.5,-1.800l1.200,1.200z" fill="#333"/><path d="M14,2.500L15.200,1.300L17.700,3.800L16.500,5z" fill="#e04848"/></g><path d="M15,0h5.500l-2.750,2.800z" fill="#000"/></g>
<g transform="translate(8,159)"><rect x="3.500" y="4.500" width="13" height="11" fill="url(#gwhiteblue)" stroke="#555" stroke-width="1"/><path d="M0.5,1l2.8,0M0.5,1l0,2.8M0.5,1l3.4,3.4" stroke="#36c226" stroke-width="1.400"/><path d="M19.5,1l-2.8,0M19.5,1l0,2.8M19.5,1l-3.4,3.4" stroke="#36c226" stroke-width="1.400"/><path d="M0.5,19l2.8,0M0.5,19l0,-2.8M0.5,19l3.4,-3.4" stroke="#36c226" stroke-width="1.400"/><path d="M19.5,19l-2.8,0M19.5,19l0,-2.8M19.5,19l-3.4,-3.4" stroke="#36c226" stroke-width="1.400"/></g>
<g transform="translate(34,159)"><path d="M7,2C1,1 0,8 5,9.500C12,11 17,10 17,14C16,19 9,17 8,14" fill="none" stroke="#2a68d8" stroke-width="1.500"/><g transform="translate(1,0)"><ellipse cx="9" cy="17" rx="7" ry="1.600" fill="#000" opacity=".3"/><path d="M4,16L5,12L15,1.500L17.500,4L7.500,14.500z" fill="#d89a3a" stroke="#8a5a18" stroke-width=".6"/><path d="M4,16L5,12L7.500,14.500z" fill="#f4dcb0"/><path d="M4,16l.5,-1.800l1.200,1.200z" fill="#333"/><path d="M14,2.500L15.200,1.300L17.700,3.800L16.500,5z" fill="#e04848"/></g><path d="M15,0h5.500l-2.750,2.800z" fill="#000"/></g>
<g transform="translate(8,185)"><path d="M0,3h4M2,1v4M0,7h4" stroke="#000" stroke-width="1"/><g transform="translate(2,1) scale(1.1)"><path d="M5.200,9.800L0.800,14.200" stroke="#8a8a8a" stroke-width="2.800" stroke-linecap="round"/><path d="M5.200,9.800L0.800,14.200" stroke="#dedede" stroke-width="1.300" stroke-linecap="round"/><circle cx="8.500" cy="6" r="5" fill="url(#glens)" stroke="#9aa4b4" stroke-width="1.500"/><circle cx="8.500" cy="6" r="3.600" fill="none" stroke="#6f9ad6" stroke-width=".7"/></g><path d="M9.500,5l4,3l-4,3z" fill="#c4ccd8" stroke="#7a8494" stroke-width=".5"/><g transform="translate(10,10)"><path d="M0,2.25L4.5,0L9,2.25L4.5,4.5z" fill="#cfcfcf" stroke="#555" stroke-width=".5"/><path d="M0,2.25L4.5,4.5V9L0,6.75z" fill="#9a9a9a" stroke="#555" stroke-width=".5"/><path d="M9,2.25L4.5,4.5V9L9,6.75z" fill="#6e6e6e" stroke="#555" stroke-width=".5"/></g><path d="M15,0h5.500l-2.750,2.800z" fill="#000"/></g>
<g transform="translate(34,185)"><path d="M2,2.500h14v6h-4v4h2.500v5.500H2z" fill="#f4f4f0" stroke="#f0e800" stroke-width="1.800"/><path d="M5,10l3.500,4.500L15,4.500" fill="none" stroke="#3fc22a" stroke-width="3"/><path d="M15,0h5.500l-2.750,2.800z" fill="#000"/></g>
<g transform="translate(8,211)"><g transform="translate(0,1)"><path d="M1,11L10,6L19,11L10,17z" fill="#e4ebf8" stroke="#b4c0d8" stroke-width=".6"/><path d="M5.500,12V2" stroke="#1c6ff0" stroke-width="1.800"/><path d="M5.500,0l-2.500,4h5z" fill="#1c6ff0"/><path d="M5.500,12L13,6.500" stroke="#28b428" stroke-width="1.800"/><path d="M15.500,4.500l-4.500,1l2.500,3z" fill="#28b428"/><path d="M5.500,12L13,17" stroke="#e02020" stroke-width="1.800"/><path d="M15.500,19l-4.500,-1l2.500,-3z" fill="#e02020"/><circle cx="5.500" cy="12" r="2" fill="url(#gball)" stroke="#666" stroke-width=".4"/></g><path d="M15,0h5.500l-2.750,2.800z" fill="#000"/></g>
<g transform="translate(34,211)"><path d="M1,10C3,-2 8,2 10,10C12,19 16,19 18,10" fill="none" stroke="#2a68d8" stroke-width="1.500"/><g transform="translate(1,0)"><ellipse cx="9" cy="17" rx="7" ry="1.600" fill="#000" opacity=".3"/><path d="M4,16L5,12L15,1.500L17.500,4L7.500,14.500z" fill="#d89a3a" stroke="#8a5a18" stroke-width=".6"/><path d="M4,16L5,12L7.500,14.500z" fill="#f4dcb0"/><path d="M4,16l.5,-1.800l1.200,1.200z" fill="#333"/><path d="M14,2.500L15.200,1.300L17.700,3.800L16.500,5z" fill="#e04848"/></g><path d="M15,0h5.500l-2.750,2.800z" fill="#000"/></g>
<g transform="translate(8,237)"><g transform="translate(0,1)"><path d="M1,2h9l2,1.500h-9z" fill="#7a7af0"/><path d="M1.500,4h10v2.300h-10z" fill="#d8d8e4" stroke="#888" stroke-width=".4"/><path d="M1.500,7h10v2.300h-10z" fill="#f4f4f4" stroke="#888" stroke-width=".4"/><path d="M0.500,1.500h9l2,2h-9z" fill="#8c8cf8" stroke="#5a5ad0" stroke-width=".4"/><ellipse cx="10.500" cy="14" rx="7.500" ry="4.800" fill="#b8866a" stroke="#7a5038" stroke-width=".7"/><circle cx="7.500" cy="15.500" r="1.900" fill="#1030e0"/><circle cx="12" cy="15.500" r="1.900" fill="#10b010"/><circle cx="13.500" cy="12" r="1.800" fill="#d01818"/><path d="M18.500,1L10,12" stroke="#a86a28" stroke-width="1.800"/><path d="M10.800,11L8.500,14.500" stroke="#eee" stroke-width="2"/></g><path d="M15,0h5.500l-2.750,2.800z" fill="#000"/></g>
<g transform="translate(34,237)"><path d="M7,3L19,1L15,16L2,18z" fill="#a8c8f4" stroke="#2a62d0" stroke-width="1.500"/><path d="M13,2L8.500,17M5,10L17,8.500" stroke="#e8f0fc" stroke-width="1.300"/><path d="M15,0h5.500l-2.750,2.800z" fill="#000"/></g>
<g transform="translate(8,263)"><g transform="translate(1,1)"><path d="M1,9C1,3 9,0.500 14,4L16,2V9.500H8.500L11.200,6.800C8.500,5 4.500,6 4.500,9.500z" fill="url(#gblue)" stroke="#3a6db8" stroke-width=".5"/><path d="M17,9.500C17,15.500 9,18 4,14.500L2,16.500V9H9.500L6.800,11.700C9.500,13.500 13.500,12.500 13.500,9z" fill="url(#gblue)" stroke="#3a6db8" stroke-width=".5"/></g><path d="M15,0h5.500l-2.750,2.800z" fill="#000"/></g>
<g transform="translate(34,263)"><ellipse cx="11" cy="17.500" rx="8" ry="1.800" fill="#000" opacity=".25"/><g transform="translate(2,1)"><path d="M0,4.0L8.0,0L16,4.0L8.0,8.0z" fill="#cfcfcf" stroke="#555" stroke-width=".5"/><path d="M0,4.0L8.0,8.0V16L0,12.0z" fill="#9a9a9a" stroke="#555" stroke-width=".5"/><path d="M16,4.0L8.0,8.0V16L16,12.0z" fill="#6e6e6e" stroke="#555" stroke-width=".5"/></g><path d="M15,0h5.500l-2.750,2.800z" fill="#000"/></g>
<g transform="translate(8,289)"><ellipse cx="10" cy="18" rx="7" ry="1.500" fill="#000" opacity=".25"/><text x="9.500" y="17.500" font-family="Liberation Sans,sans-serif" font-weight="bold" font-size="21" text-anchor="middle" fill="#5a8ad6" stroke="#3a6ab8" stroke-width=".4">?</text><path d="M15,0h5.500l-2.750,2.800z" fill="#000"/></g>
<g transform="translate(34,289)"><path d="M2.500,3V19M17.500,3V19" stroke="#444" stroke-width="1.300"/><path d="M4,6H16" stroke="#f0e000" stroke-width="1.600"/><path d="M2.500,6l4,-2.500v5zM17.500,6l-4,-2.500v5z" fill="#f0e000"/><path d="M15,0h5.500l-2.750,2.800z" fill="#000"/></g>
<g transform="translate(8,315)"><ellipse cx="11" cy="18" rx="8" ry="1.600" fill="#000" opacity=".3"/><path d="M2.500,5L4.500,17.500C7,19 12,19 14.500,17.500L16.500,5z" fill="#a8d0ec" stroke="#5a8ab8" stroke-width=".8"/><ellipse cx="9.500" cy="5" rx="7" ry="2" fill="#d4e8f8" stroke="#5a8ab8" stroke-width=".8"/><path d="M7,1.500h5l1,3.500h-7z" fill="#f0e020"/><path d="M7,8l4,3l-3,4l3,2" fill="none" stroke="#d8e860" stroke-width="1.500"/><path d="M15,0h5.500l-2.750,2.800z" fill="#000"/></g>
<g transform="translate(34,315)"><g transform="translate(2,1)"><ellipse cx="9" cy="16.500" rx="7" ry="1.500" fill="#000" opacity=".15"/><path d="M0.500,6.500L7.500,0.500V4C13,4 16,7.500 15,12.500C14,15.500 11.500,17 8.500,16.500C11.500,15 11.500,9.500 7.500,9.500V13z" fill="#b4b4b4" stroke="#8a8a8a" stroke-width=".6"/></g><path d="M15,0h5.500l-2.750,2.800z" fill="#000"/></g>
<g transform="translate(8,341)"><rect x="2" y="0.500" width="3.500" height="13" fill="#9aa4b4" stroke="#555" stroke-width=".5"/><path d="M2,13.500h3.500l-1.700,3z" fill="#e8a020"/><circle cx="11" cy="9" r="5.500" fill="none" stroke="#8a4a28" stroke-width="1.300"/><path d="M11,1V17M3,9H19M5.300,3.300L16.700,14.700M16.700,3.300L5.300,14.700" stroke="#8a4a28" stroke-width="1"/><circle cx="11" cy="9" r="1.800" fill="#f0c020"/><path d="M1,15l6,-2l12,3l-7,3.500z" fill="none" stroke="#f08a18" stroke-width="1.200"/><path d="M4,14.500l9,3M7,13.500l9,3M3,16.500l8,-3M7,18l8,-3.500" stroke="#f08a18" stroke-width="1"/><path d="M15,0h5.500l-2.750,2.800z" fill="#000"/></g>
<g transform="translate(34,341)"><path d="M5,7h10l4,4v8.500H5z" fill="#f4f8ff" stroke="#222" stroke-width="1"/><rect x="7" y="16" width="6" height="2.500" fill="#fff" stroke="#333" stroke-width=".6"/><g transform="translate(0,-1)"><g transform="scale(.9)"><path d="M1,16V5h5l1.500,2H14v9z" fill="#e8b94a" stroke="#c79a35" stroke-width=".6"/><path d="M1,16.500L4,8.500H17.500L14,16.500z" fill="url(#gfold)" stroke="#c79a35" stroke-width=".6"/><path d="M6,9.500C6,4 10,2.500 13.500,3.500V1L18.500,5.500L13.500,9.500V7C10.500,6 8,7 8.500,10z" fill="url(#ggreen)" stroke="#14820f" stroke-width=".5"/></g></g></g>
<g transform="translate(1181,1022)"><rect x=".5" y=".5" width="17" height="16" fill="#c8cce0" stroke="#8a8a9a" stroke-width="1"/><g transform="translate(2,1.500) scale(.78)"><path d="M1,9C1,3 9,0.500 14,4L16,2V9.500H8.500L11.200,6.800C8.500,5 4.500,6 4.500,9.500z" fill="#e04848"/><path d="M17,9.500C17,15.500 9,18 4,14.500L2,16.500V9H9.500L6.800,11.700C9.500,13.500 13.500,12.500 13.500,9z" fill="#e04848"/></g></g><g transform="translate(1212,1022)"><rect x="0" y="0" width="17" height="17" fill="#fbd469"/><path d="M3,3l8,3l-3,2l6,7l-2,1l-5,-7l-3,2z" fill="#f4f4f4" stroke="#555" stroke-width=".6"/><path d="M2,2l3,1M8,1l1,3M12,2l-1,3" stroke="#c050c0" stroke-width="1.200"/></g><g transform="translate(1244,1022)"><path d="M2,8l6,-5l6,5v8h-12z" fill="#c8ccd8" stroke="#555" stroke-width=".7"/><rect x="4" y="9" width="3" height="3" fill="#4a78d0"/><rect x="4" y="13" width="3" height="3" fill="#4a78d0"/><path d="M8,4c2,-3 6,-3 8,-1l1,2l-5,1z" fill="#f0c070" stroke="#a87830" stroke-width=".6"/></g><g transform="translate(1275,1021)"><g transform="scale(.92)"><ellipse cx="10" cy="18" rx="7" ry="1.500" fill="#000" opacity=".25"/><text x="9.500" y="17.500" font-family="Liberation Sans,sans-serif" font-weight="bold" font-size="21" text-anchor="middle" fill="#5a8ad6" stroke="#3a6ab8" stroke-width=".4">?</text></g></g><g transform="translate(1305,1022)"><g transform="translate(8,1)"><path d="M0,2.0L4.0,0L8,2.0L4.0,4.0z" fill="#8ab0e8" stroke="#555" stroke-width=".5"/><path d="M0,2.0L4.0,4.0V8L0,6.0z" fill="#5a88d0" stroke="#555" stroke-width=".5"/><path d="M8,2.0L4.0,4.0V8L8,6.0z" fill="#3a60a8" stroke="#555" stroke-width=".5"/></g><g transform="translate(10,8)"><path d="M0,2.0L4.0,0L8,2.0L4.0,4.0z" fill="#b8d0e8" stroke="#555" stroke-width=".5"/><path d="M0,2.0L4.0,4.0V8L0,6.0z" fill="#88a8c8" stroke="#555" stroke-width=".5"/><path d="M8,2.0L4.0,4.0V8L8,6.0z" fill="#587898" stroke="#555" stroke-width=".5"/></g><path d="M0,6l7,3M0,12l7,-1" stroke="#e02020" stroke-width="1.800"/><path d="M9,10l-4,-3.500l-.5,4.500z" fill="#e02020"/></g><g transform="translate(1336,1021)"><rect x="0" y="0" width="19" height="19" fill="#fbd469"/><path d="M2,6L9.500,3L17,6L9.500,9z" fill="#e040e0" stroke="#222" stroke-width=".7"/><path d="M2,6L9.500,9V17.500L2,14z" fill="#48a0e8" stroke="#222" stroke-width=".7"/><path d="M17,6L9.500,9V17.500L17,14z" fill="#2a68c8" stroke="#222" stroke-width=".7"/></g><g transform="translate(1893,1002)"><circle cx="8" cy="8" r="7.500" fill="#1a3ab0" stroke="#0a1a60" stroke-width=".6"/><path d="M4,3c3,-1 5,1 4,3s-3,2 -4,4c-2,-2 -2,-5 0,-7zM10,8c2,-1 4,0 4,2s-2,4 -4,3z" fill="#2cc42c"/><circle cx="5.500" cy="4.500" r="1.500" fill="#fff" opacity=".5"/></g><g transform="translate(1459,1004)"><circle cx="8" cy="5" r="3.600" fill="none" stroke="#3a68c0" stroke-width="1.300"/><path d="M5.500,7.800L2,11.500" stroke="#3a68c0" stroke-width="1.500"/></g>
</svg>
<svg width="1920" height="1048" style="left:0;top:0" viewBox="0 0 1920 1048">
<g stroke="#a6aabc" stroke-width="1">
<path d="M1131.500,1023v15M1176.500,1023v15M1206.500,1023v15M1237.500,1023v15M1268.500,1023v15M1299.500,1023v15M1330.500,1023v15M1361.500,1023v15M1423.500,1023v15M1452.500,1023v15M1579.500,1023v15M1654.500,1023v15M1592.500,1003v15M1727.500,1003v15M1756.500,1003v15M1799.500,1003v15M1842.500,1003v15M1886.500,1003v15"/>
</g>
<g fill="#9ca0b4"><path d="M1336,1004h1v1h-1zM1338,1006h1v1h-1zM1336,1008h1v1h-1zM1338,1010h1v1h-1zM1336,1012h1v1h-1zM1338,1014h1v1h-1zM1336,1016h1v1h-1zM1476,1004h1v1h-1zM1478,1006h1v1h-1zM1476,1008h1v1h-1zM1478,1010h1v1h-1zM1476,1012h1v1h-1zM1478,1014h1v1h-1zM1476,1016h1v1h-1zM1658,1004h1v1h-1zM1660,1006h1v1h-1zM1658,1008h1v1h-1zM1660,1010h1v1h-1zM1658,1012h1v1h-1zM1660,1014h1v1h-1zM1658,1016h1v1h-1z"/></g>
<!-- hidden icons behind mascot -->
<rect x="1371.500" y="1030.500" width="9" height="8" fill="#e8ecf4" stroke="#55705a" stroke-width="1"/>
<rect x="1431.500" y="1023.500" width="14" height="14" fill="#cfd6ea" stroke="#5a6288" stroke-width="1"/><path d="M1438.500,1024v13M1432,1030.500h13" stroke="#5a6288" stroke-width="1"/>
<!-- mascot -->
<ellipse cx="1406.500" cy="1037.500" rx="15" ry="2.500" fill="#b0643a" opacity=".85"/>
<g stroke="#8a4c1c" stroke-width=".9">
<path d="M1401,973c-2,-5 -5,-5 -3,-8c3,-1 6,3 6,8z" fill="#8a4c1c"/><path d="M1409,973c0,-4 1,-7 -1,-7c-2,1 -1,5 -1,7z" fill="#8a4c1c"/>
<circle cx="1389.300" cy="977.800" r="5.400" fill="#c4884a"/><circle cx="1423.200" cy="977.800" r="5.400" fill="#c4884a"/>
<circle cx="1389.300" cy="978.500" r="2.600" fill="#f2b8a2" stroke="none"/><circle cx="1423.200" cy="978.500" r="2.600" fill="#f2b8a2" stroke="none"/>
<!-- body -->
<path d="M1390,1020c-4,2 -5,7 -2,9c2,1 4,-1 5,-3c0,5 1,9 3,11c1,2 4,2 4,-1c2,1 5,1 7,0c0,3 3,3 4,1c2,-3 3,-7 3,-11c2,2 5,3 7,1c2,-3 -2,-8 -5,-9z" fill="#fdf25a" stroke="#c8901e"/>
<ellipse cx="1406.500" cy="997.500" rx="26.500" ry="23.500" fill="#c4884a"/>
<ellipse cx="1406.500" cy="1001" rx="21.600" ry="17.300" fill="#fdf45c" stroke="#a8601c"/>
<path d="M1414,1020l-14,14" stroke="#a86a30" stroke-width="1.300"/>
<!-- small bear bag -->
<circle cx="1391" cy="1023" r="2" fill="#c4884a"/><circle cx="1401" cy="1023" r="2" fill="#c4884a"/>
<ellipse cx="1396.200" cy="1028.500" rx="7" ry="6.300" fill="#c4884a"/>
</g>
<circle cx="1392.800" cy="1029.500" r="1.300" fill="#f27ab0"/><circle cx="1399.800" cy="1029.500" r="1.300" fill="#f27ab0"/>
<circle cx="1395.700" cy="993.700" r="1.600" fill="#5a2a0a"/><circle cx="1416.800" cy="993.300" r="1.600" fill="#5a2a0a"/>
<ellipse cx="1406.500" cy="997.500" rx="1.300" ry=".8" fill="#b8661e"/>
<circle cx="1389.900" cy="999.800" r="3.500" fill="#f9a62c" opacity=".85"/><circle cx="1421.500" cy="999.800" r="3.500" fill="#f9a62c" opacity=".85"/>
<!-- A and shirt badges -->
<circle cx="1367.500" cy="1005.400" r="8.600" fill="#8e6152"/>
<text x="1367.500" y="1010.500" font-family="'Liberation Sans',sans-serif" font-size="13" fill="#fff" text-anchor="middle">A</text>
<circle cx="1374.500" cy="1026.300" r="8.600" fill="#8e6152"/>
<path d="M1369,1023.500l3,-2.500h1.500c.5,1 1.500,1 2,0h1.500l3,2.500l-1.600,2l-1.200,-.8v6h-5.400v-6l-1.200,.8z" fill="#fff"/>
<!-- WOW -->
<g transform="rotate(8 1446 982)" font-family="'Liberation Sans',sans-serif" font-weight="bold" font-size="23" text-anchor="middle"><text x="1446" y="989.500" fill="#a86a38" stroke="#a86a38" stroke-width="5" stroke-linejoin="round">W</text><text x="1446" y="989.500" fill="#fffaf0" stroke="#fffaf0" stroke-width="2.600" stroke-linejoin="round">W</text></g>
<circle cx="1441" cy="979" r="1.300" fill="#d8a468"/><circle cx="1450" cy="981" r="1.300" fill="#d8a468"/><circle cx="1446" cy="987" r="1.200" fill="#d8a468"/>
<g stroke="#a86a38" stroke-width=".8"><circle cx="1438.500" cy="992.500" r="3" fill="#c88e58"/><circle cx="1453.500" cy="993.500" r="3" fill="#c88e58"/>
<ellipse cx="1446" cy="1002" rx="9.500" ry="10.500" fill="#c88e58"/></g>
<ellipse cx="1446" cy="1002.500" rx="3.300" ry="4.600" fill="#fff" stroke="#a86a38" stroke-width=".6"/>
<g transform="rotate(-8 1447 1022)" font-family="'Liberation Sans',sans-serif" font-weight="bold" font-size="23" text-anchor="middle"><text x="1447" y="1030.500" fill="#c8961e" stroke="#c8961e" stroke-width="5" stroke-linejoin="round">W</text><text x="1447" y="1030.500" fill="#fdf45c" stroke="#fdf45c" stroke-width="2.600" stroke-linejoin="round">W</text></g>
<!-- taskbar clock clipping -->
<text x="1816" y="1054.500" font-family="'Liberation Sans',sans-serif" font-size="12" fill="#fff">15:09</text>
</svg>
</body>
</html>
